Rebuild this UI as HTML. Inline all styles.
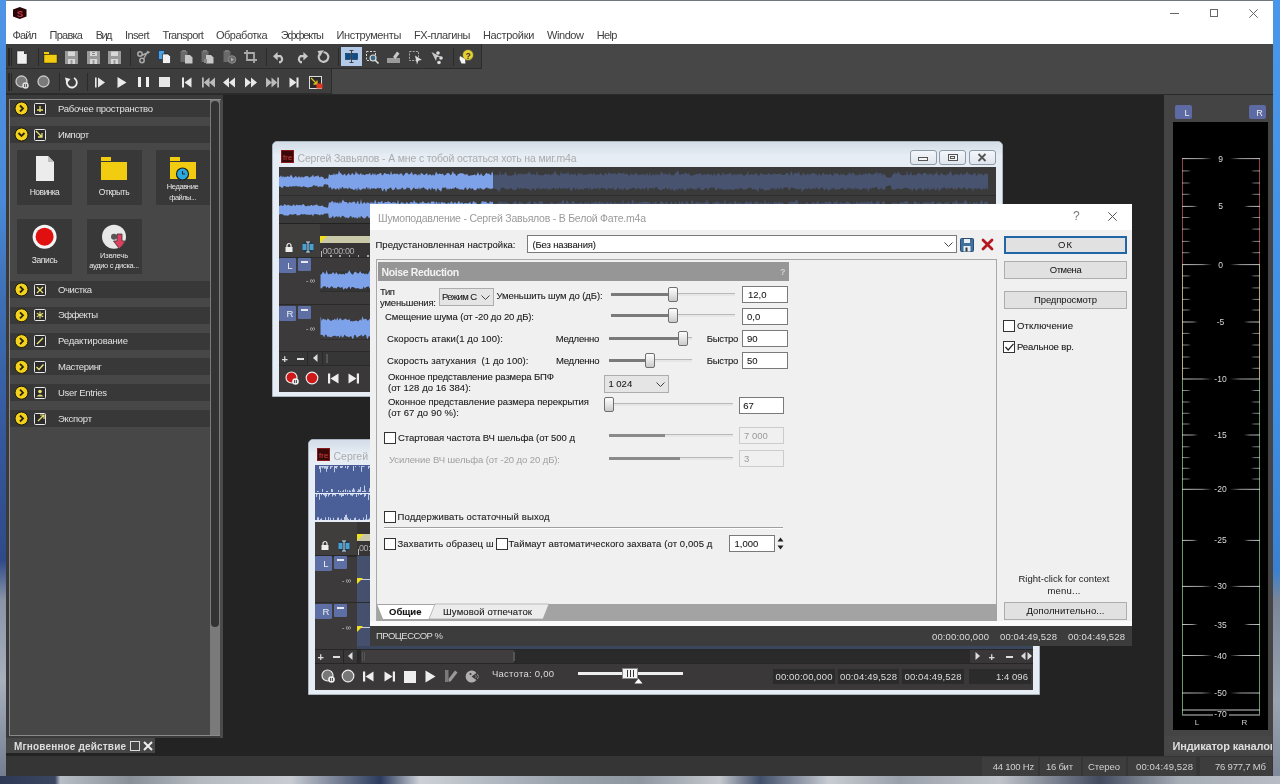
<!DOCTYPE html><html><head><meta charset="utf-8"><style>html,body{margin:0;padding:0;width:1280px;height:784px;overflow:hidden;position:relative;background:#3a86d8;}body div{position:absolute;box-sizing:border-box;}body{font-family:"Liberation Sans",sans-serif;}svg{position:absolute;overflow:visible;}</style></head><body><div style="left:0px;top:0px;width:1280px;height:784px;background:#4a8fe0;"></div>
<div style="left:0px;top:0px;width:6px;height:784px;background:linear-gradient(180deg,#4e94e6 0,#4a8ad8 200px,#3e6fb4 300px,#34569a 450px,#2f4a88 560px,#8a94a6 600px,#a8b0bc 680px,#707a8c 784px);"></div>
<div style="left:1273px;top:0px;width:7px;height:784px;background:linear-gradient(180deg,#4a96ea 0,#3f8ee3 400px,#3a80d0 570px,#7a8698 600px,#9aa3b0 700px,#7c8696 784px);"></div>
<div style="left:0px;top:776px;width:1280px;height:8px;background:linear-gradient(90deg,#2e3a55 0.0%,#3a4560 4.3%,#b8bec6 4.7%,#8a9098 10.2%,#b4b9c0 15.6%,#c8ccd2 22.7%,#2c3b5e 29.7%,#ccd0d6 32.8%,#9aa2ac 43.8%,#8e96a0 50.0%,#c4c8ce 56.2%,#43506c 59.4%,#c8ccd2 64.8%,#9aa0aa 70.3%,#c0c4ca 78.1%,#434c60 85.9%,#a8aeb6 92.2%,#b8bcc4 100.0%);"></div>
<div style="left:6px;top:0px;width:1267px;height:776px;background:#3a3a3a;"></div>
<div style="left:6px;top:0px;width:1267px;height:1px;background:#70777f;"></div>
<div style="left:6px;top:1px;width:1267px;height:43px;background:#ffffff;"></div>
<svg style="left:13px;top:7px" width="14" height="12" viewBox="0 0 14 12"><polygon points="6.8,0 13.5,2.6 13.5,9.4 6.8,12 0,9.4 0,2.6" fill="#2a0606"/><text x="6.9" y="9.6" font-size="9.5" font-weight="700" text-anchor="middle" fill="#c23a48" font-family="Liberation Sans">S</text></svg>
<div style="left:1170px;top:12.5px;width:9px;height:1px;background:#666;"></div>
<div style="left:1209.5px;top:8.5px;width:8.5px;height:8.5px;border:1px solid #666;"></div>
<svg style="left:1249px;top:8.5px" width="9" height="9"><path d="M0.3 0.3L8.7 8.7M8.7 0.3L0.3 8.7" stroke="#666" stroke-width="1"/></svg>
<div style="left:12.5px;top:27.799999999999997px;font-size:11px;line-height:14px;color:#404040;font-weight:400;white-space:pre;filter:grayscale(1);letter-spacing:-0.849px;">Файл</div>
<div style="left:49.5px;top:27.799999999999997px;font-size:11px;line-height:14px;color:#404040;font-weight:400;white-space:pre;filter:grayscale(1);letter-spacing:-0.734px;">Правка</div>
<div style="left:95.75px;top:27.799999999999997px;font-size:11px;line-height:14px;color:#404040;font-weight:400;white-space:pre;filter:grayscale(1);letter-spacing:-1.578px;">Вид</div>
<div style="left:125px;top:27.799999999999997px;font-size:11px;line-height:14px;color:#404040;font-weight:400;white-space:pre;filter:grayscale(1);letter-spacing:-0.603px;">Insert</div>
<div style="left:162.5px;top:27.799999999999997px;font-size:11px;line-height:14px;color:#404040;font-weight:400;white-space:pre;filter:grayscale(1);letter-spacing:-0.678px;">Transport</div>
<div style="left:216px;top:27.799999999999997px;font-size:11px;line-height:14px;color:#404040;font-weight:400;white-space:pre;filter:grayscale(1);letter-spacing:-0.498px;">Обработка</div>
<div style="left:280.7px;top:27.799999999999997px;font-size:11px;line-height:14px;color:#404040;font-weight:400;white-space:pre;filter:grayscale(1);letter-spacing:-1.119px;">Эффекты</div>
<div style="left:336.6px;top:27.799999999999997px;font-size:11px;line-height:14px;color:#404040;font-weight:400;white-space:pre;filter:grayscale(1);letter-spacing:-0.389px;">Инструменты</div>
<div style="left:414px;top:27.799999999999997px;font-size:11px;line-height:14px;color:#404040;font-weight:400;white-space:pre;filter:grayscale(1);letter-spacing:-0.429px;">FX-плагины</div>
<div style="left:482.9px;top:27.799999999999997px;font-size:11px;line-height:14px;color:#404040;font-weight:400;white-space:pre;filter:grayscale(1);letter-spacing:-0.317px;">Настройки</div>
<div style="left:547px;top:27.799999999999997px;font-size:11px;line-height:14px;color:#404040;font-weight:400;white-space:pre;filter:grayscale(1);letter-spacing:-0.425px;">Window</div>
<div style="left:596.8px;top:27.799999999999997px;font-size:11px;line-height:14px;color:#404040;font-weight:400;white-space:pre;filter:grayscale(1);letter-spacing:-0.708px;">Help</div>
<div style="left:6px;top:44px;width:1267px;height:51px;background:#474747;"></div>
<div style="left:6px;top:44px;width:476px;height:25px;background:#3d3d3d;border-bottom:1px solid #2c2c2c;border-right:1px solid #2c2c2c;"></div>
<div style="left:6px;top:69px;width:326px;height:25px;background:#3d3d3d;border-bottom:1px solid #2c2c2c;border-right:1px solid #2c2c2c;"></div>
<div style="left:6px;top:94px;width:1267px;height:1px;background:#2a2a2a;"></div>
<div style="left:6px;top:95px;width:217px;height:643px;background:#3a3a3a;"></div>
<div style="left:9px;top:99px;width:212px;height:637px;background:#474747;border:1px solid #8a8a8a;"></div>
<div style="left:210px;top:100px;width:10px;height:635px;background:#7a7a7a;"></div>
<div style="left:220px;top:100px;width:3px;height:638px;background:#4a4a4a;"></div>
<div style="left:211px;top:101px;width:8px;height:526px;background:#333;border-radius:4px;"></div>
<div style="left:223px;top:95px;width:941px;height:661px;background:#232323;"></div>
<div style="left:6px;top:738px;width:217px;height:18px;background:#232323;"></div>
<div style="left:1164px;top:95px;width:109px;height:662px;background:#444444;"></div>
<div style="left:1173px;top:122px;width:95px;height:608px;background:#000;"></div>
<div style="left:1175px;top:105px;width:17px;height:14px;background:#5d6aa3;border-radius:2px;"></div>
<div style="left:1249px;top:105px;width:17px;height:14px;background:#5d6aa3;border-radius:2px;"></div>
<div style="left:1187px;top:106.5px;font-size:9px;line-height:12px;color:#eee;font-weight:400;white-space:pre;filter:grayscale(1);width:17px;margin-left:-8.5px;text-align:center;">L</div>
<div style="left:1259.5px;top:106.5px;font-size:9px;line-height:12px;color:#eee;font-weight:400;white-space:pre;filter:grayscale(1);width:17px;margin-left:-8.5px;text-align:center;">R</div>
<div style="left:1165px;top:736px;width:107px;height:17px;background:#474747;"></div>
<div style="left:1172.5px;top:739.0px;font-size:11px;line-height:14px;color:#ddd;font-weight:700;white-space:pre;filter:grayscale(1);letter-spacing:-0.148px;overflow:hidden;width:99px;">Индикатор каналов</div>
<div style="left:6px;top:738px;width:149px;height:15px;background:#474747;"></div>
<div style="left:14px;top:739.5px;font-size:10px;line-height:13px;color:#ddd;font-weight:700;white-space:pre;filter:grayscale(1);letter-spacing:0.160px;">Мгновенное действие</div>
<div style="left:130px;top:741px;width:10px;height:10px;border:1.3px solid #ddd;"></div>
<svg style="left:143px;top:741px" width="10" height="10"><path d="M1 1L9 9M9 1L1 9" stroke="#eee" stroke-width="2"/></svg>
<div style="left:6px;top:756px;width:1267px;height:20px;background:#353535;"></div>
<div style="left:272px;top:141px;width:731px;height:256px;background:#e6edf4;border:1px solid #a9b4bf;border-radius:5px 5px 0 0;"></div>
<div style="left:273px;top:142px;width:729px;height:12px;background:linear-gradient(180deg,#d3dde8,#e3eaf2);border-radius:5px 5px 0 0;"></div>
<svg style="left:281px;top:150px" width="13" height="13" viewBox="0 0 13 13"><rect x="0.5" y="0.5" width="12" height="12" fill="#3a0808" stroke="#8a1a1a"/><text x="6.5" y="10" font-size="8" text-anchor="middle" fill="#c04040" font-family="Liberation Sans">fre</text></svg>
<div style="left:297.5px;top:150.5px;font-size:10.5px;line-height:14px;color:#a7acb3;font-weight:400;white-space:pre;filter:grayscale(1);letter-spacing:-0.153px;">Сергей Завьялов - А мне с тобой остаться хоть на миг.m4a</div>
<div style="left:279px;top:167px;width:717px;height:56px;background:#3a3a3a;"></div>
<div style="left:279px;top:223px;width:717px;height:169px;background:#3c3a3a;"></div>
<div style="left:909.5px;top:149.5px;width:27px;height:15px;background:linear-gradient(180deg,#f4f7fa,#dfe6ee);border:1px solid #8e9aa6;border-radius:3px;"></div>
<div style="left:939px;top:149.5px;width:27px;height:15px;background:linear-gradient(180deg,#f4f7fa,#dfe6ee);border:1px solid #8e9aa6;border-radius:3px;"></div>
<div style="left:968.5px;top:149.5px;width:27px;height:15px;background:linear-gradient(180deg,#f4f7fa,#dfe6ee);border:1px solid #8e9aa6;border-radius:3px;"></div>
<div style="left:918px;top:157px;width:10px;height:4px;border:1px solid #555;background:#f4f4f4;"></div>
<div style="left:947.5px;top:153.5px;width:10px;height:7px;border:1px solid #555;background:#f4f4f4;"></div>
<div style="left:950px;top:155.5px;width:5px;height:3px;border:1px solid #555;"></div>
<svg style="left:977px;top:152.5px" width="10" height="9"><path d="M1.5 1L8.5 8M8.5 1L1.5 8" stroke="#555" stroke-width="1.8"/></svg>
<svg style="left:0;top:0" width="1" height="1"><path d="M279.0 176.9L280.0 176.8L281.0 175.2L282.0 177.7L283.0 175.7L284.0 177.5L285.0 176.4L286.0 176.9L287.0 176.8L288.0 175.7L289.0 177.2L290.0 176.2L291.0 174.4L292.0 175.9L293.0 177.7L294.0 177.7L295.0 176.6L296.0 176.1L297.0 177.4L298.0 177.6L299.0 175.8L300.0 177.4L301.0 177.6L302.0 176.2L303.0 177.7L304.0 177.0L305.0 176.6L306.0 175.9L307.0 176.3L308.0 175.9L309.0 177.8L310.0 177.3L311.0 176.5L312.0 176.6L313.0 174.5L314.0 176.9L315.0 176.6L316.0 175.7L317.0 176.6L318.0 175.0L319.0 176.8L320.0 177.7L321.0 176.3L322.0 177.1L323.0 176.9L324.0 178.5L325.0 179.2L326.0 178.4L327.0 178.0L328.0 179.3L329.0 173.7L330.0 175.1L331.0 175.3L332.0 174.5L333.0 175.3L334.0 173.1L335.0 175.5L336.0 173.6L337.0 174.5L338.0 173.9L339.0 170.5L340.0 173.1L341.0 173.3L342.0 174.5L343.0 175.5L344.0 173.9L345.0 173.7L346.0 175.9L347.0 175.1L348.0 173.9L349.0 173.0L350.0 175.5L351.0 174.7L352.0 172.9L353.0 173.6L354.0 175.3L355.0 174.2L356.0 171.1L357.0 174.1L358.0 173.3L359.0 174.9L360.0 174.3L361.0 172.8L362.0 175.2L363.0 173.9L364.0 174.9L365.0 175.3L366.0 174.1L367.0 174.0L368.0 174.6L369.0 173.7L370.0 172.8L371.0 175.5L372.0 174.4L373.0 172.9L374.0 175.3L375.0 173.1L376.0 175.5L377.0 174.2L378.0 174.2L379.0 173.9L380.0 173.1L381.0 173.0L382.0 175.2L383.0 175.2L384.0 173.2L385.0 172.9L386.0 173.7L387.0 174.3L388.0 173.8L389.0 174.1L390.0 175.3L391.0 170.8L392.0 174.4L393.0 174.3L394.0 173.7L395.0 173.5L396.0 174.3L397.0 173.6L398.0 174.0L399.0 175.1L400.0 173.3L401.0 173.7L402.0 173.6L403.0 175.9L404.0 175.2L405.0 173.8L406.0 172.7L407.0 172.7L408.0 173.5L409.0 174.7L410.0 174.1L411.0 172.7L412.0 172.1L413.0 175.4L414.0 173.9L415.0 174.2L416.0 173.8L417.0 175.0L418.0 175.4L419.0 173.5L420.0 175.7L421.0 172.8L422.0 173.6L423.0 174.0L424.0 175.3L425.0 174.5L426.0 174.0L427.0 172.7L428.0 175.6L429.0 174.8L430.0 174.0L431.0 175.1L432.0 175.8L433.0 173.9L434.0 175.7L435.0 174.7L436.0 171.5L437.0 173.3L438.0 174.6L439.0 173.8L440.0 173.5L441.0 174.2L442.0 174.1L443.0 173.4L444.0 175.7L445.0 175.0L446.0 174.7L447.0 172.9L448.0 173.3L449.0 172.9L450.0 174.8L451.0 175.3L452.0 173.2L453.0 170.9L454.0 174.2L455.0 173.3L456.0 175.7L457.0 175.7L458.0 173.8L459.0 174.2L460.0 172.8L461.0 173.6L462.0 173.2L463.0 173.2L464.0 174.2L465.0 174.6L466.0 174.7L467.0 173.4L468.0 175.6L469.0 175.7L470.0 175.8L471.0 175.2L472.0 175.3L473.0 174.9L474.0 175.1L475.0 174.2L476.0 175.8L477.0 174.2L478.0 171.9L479.0 174.7L480.0 175.4L481.0 173.1L482.0 175.1L483.0 175.9L484.0 175.7L485.0 174.4L486.0 173.1L487.0 172.9L488.0 174.2L489.0 173.3L490.0 174.4L491.0 175.6L492.0 171.2L493.0 173.6L493.0 187.8L492.0 189.2L491.0 188.3L490.0 189.4L489.0 188.1L488.0 188.8L487.0 187.3L486.0 188.0L485.0 188.6L484.0 189.5L483.0 189.7L482.0 188.8L481.0 188.7L480.0 187.6L479.0 189.7L478.0 187.8L477.0 188.7L476.0 190.2L475.0 190.2L474.0 190.0L473.0 188.8L472.0 188.0L471.0 189.4L470.0 187.4L469.0 188.6L468.0 189.2L467.0 190.2L466.0 187.6L465.0 187.5L464.0 189.4L463.0 190.0L462.0 189.2L461.0 189.4L460.0 189.3L459.0 189.6L458.0 187.9L457.0 189.1L456.0 187.3L455.0 187.3L454.0 188.9L453.0 188.0L452.0 188.9L451.0 188.9L450.0 188.2L449.0 190.0L448.0 188.0L447.0 190.1L446.0 187.4L445.0 187.5L444.0 188.0L443.0 187.3L442.0 188.6L441.0 192.0L440.0 190.1L439.0 190.3L438.0 187.9L437.0 189.1L436.0 191.9L435.0 188.6L434.0 189.3L433.0 188.9L432.0 187.2L431.0 190.3L430.0 189.1L429.0 187.9L428.0 190.0L427.0 190.2L426.0 188.4L425.0 189.2L424.0 187.2L423.0 187.4L422.0 188.6L421.0 187.8L420.0 190.0L419.0 187.2L418.0 189.5L417.0 188.5L416.0 188.9L415.0 189.0L414.0 187.2L413.0 188.6L412.0 189.5L411.0 191.1L410.0 188.7L409.0 187.4L408.0 188.4L407.0 187.1L406.0 189.2L405.0 188.9L404.0 190.1L403.0 188.2L402.0 187.3L401.0 189.6L400.0 188.4L399.0 190.0L398.0 188.7L397.0 189.9L396.0 187.1L395.0 188.4L394.0 189.8L393.0 190.2L392.0 189.6L391.0 187.4L390.0 187.7L389.0 188.7L388.0 188.7L387.0 189.5L386.0 192.2L385.0 189.3L384.0 188.4L383.0 191.4L382.0 190.3L381.0 188.1L380.0 187.8L379.0 188.8L378.0 187.6L377.0 188.5L376.0 188.7L375.0 189.1L374.0 187.8L373.0 189.0L372.0 188.1L371.0 188.5L370.0 190.1L369.0 187.3L368.0 189.7L367.0 187.1L366.0 187.7L365.0 189.8L364.0 188.3L363.0 188.8L362.0 188.8L361.0 190.5L360.0 189.4L359.0 189.6L358.0 187.3L357.0 191.6L356.0 188.2L355.0 189.6L354.0 190.0L353.0 189.7L352.0 188.6L351.0 188.9L350.0 188.5L349.0 187.3L348.0 189.5L347.0 188.2L346.0 188.6L345.0 187.7L344.0 189.2L343.0 187.2L342.0 187.1L341.0 189.6L340.0 187.2L339.0 190.3L338.0 188.7L337.0 188.0L336.0 190.2L335.0 188.7L334.0 188.3L333.0 188.5L332.0 190.0L331.0 187.6L330.0 187.1L329.0 188.7L328.0 184.5L327.0 184.8L326.0 184.2L325.0 184.5L324.0 184.2L323.0 186.9L322.0 186.6L321.0 186.7L320.0 186.3L319.0 186.7L318.0 187.2L317.0 185.2L316.0 186.6L315.0 185.4L314.0 185.3L313.0 185.6L312.0 187.0L311.0 186.7L310.0 186.9L309.0 187.2L308.0 187.7L307.0 187.2L306.0 186.9L305.0 187.0L304.0 186.1L303.0 186.4L302.0 187.0L301.0 187.3L300.0 186.0L299.0 186.9L298.0 186.1L297.0 186.7L296.0 185.5L295.0 186.7L294.0 185.9L293.0 186.5L292.0 186.2L291.0 187.0L290.0 186.0L289.0 186.7L288.0 187.3L287.0 186.6L286.0 187.0L285.0 185.7L284.0 186.1L283.0 187.2L282.0 188.2L281.0 186.9L280.0 186.4L279.0 186.4Z" fill="#7ea2ea"/><path d="M279.0 205.8L280.0 205.9L281.0 204.8L282.0 205.7L283.0 206.3L284.0 204.6L285.0 204.3L286.0 205.3L287.0 205.6L288.0 204.6L289.0 205.2L290.0 205.4L291.0 205.8L292.0 206.1L293.0 204.9L294.0 204.3L295.0 206.3L296.0 205.0L297.0 204.4L298.0 205.5L299.0 205.0L300.0 205.1L301.0 205.6L302.0 205.1L303.0 203.9L304.0 204.5L305.0 206.1L306.0 206.2L307.0 206.3L308.0 205.2L309.0 206.3L310.0 205.8L311.0 205.1L312.0 204.9L313.0 206.2L314.0 204.7L315.0 205.6L316.0 204.5L317.0 204.6L318.0 205.6L319.0 206.3L320.0 205.7L321.0 206.3L322.0 205.3L323.0 205.9L324.0 207.1L325.0 207.0L326.0 207.6L327.0 207.4L328.0 207.7L329.0 202.1L330.0 203.1L331.0 201.9L332.0 201.2L333.0 201.2L334.0 203.4L335.0 201.6L336.0 202.9L337.0 202.7L338.0 202.3L339.0 203.9L340.0 201.5L341.0 203.7L342.0 201.3L343.0 199.6L344.0 201.4L345.0 202.1L346.0 202.0L347.0 202.2L348.0 204.1L349.0 201.7L350.0 202.5L351.0 202.5L352.0 202.8L353.0 201.8L354.0 201.4L355.0 202.2L356.0 204.2L357.0 201.9L358.0 200.7L359.0 204.0L360.0 203.8L361.0 199.1L362.0 204.2L363.0 203.0L364.0 202.6L365.0 202.2L366.0 204.3L367.0 201.9L368.0 203.1L369.0 202.6L370.0 204.1L371.0 201.3L372.0 203.4L373.0 202.1L374.0 203.7L375.0 199.4L376.0 201.8L377.0 204.4L378.0 201.5L379.0 202.0L380.0 202.4L381.0 201.9L382.0 200.5L383.0 203.3L384.0 203.1L385.0 201.9L386.0 202.1L387.0 202.6L388.0 201.0L389.0 202.0L390.0 201.9L391.0 203.1L392.0 203.1L393.0 202.1L394.0 202.5L395.0 202.5L396.0 202.8L397.0 203.7L398.0 199.5L399.0 203.8L400.0 204.0L401.0 202.6L402.0 202.3L403.0 202.9L404.0 202.7L405.0 204.4L406.0 202.2L407.0 202.4L408.0 202.7L409.0 204.2L410.0 202.4L411.0 202.0L412.0 202.2L413.0 202.9L414.0 199.8L415.0 202.5L416.0 202.2L417.0 203.0L418.0 203.3L419.0 203.9L420.0 202.1L421.0 203.3L422.0 201.9L423.0 201.3L424.0 202.5L425.0 203.1L426.0 203.2L427.0 202.9L428.0 202.4L429.0 202.2L430.0 203.9L431.0 202.0L432.0 201.3L433.0 201.9L434.0 201.0L435.0 204.3L436.0 201.7L437.0 202.0L438.0 204.2L439.0 201.6L440.0 204.2L441.0 202.6L442.0 201.7L443.0 203.1L444.0 202.2L445.0 203.1L446.0 203.5L447.0 204.0L448.0 202.4L449.0 203.1L450.0 203.8L451.0 201.6L452.0 201.7L453.0 203.8L454.0 203.0L455.0 201.7L456.0 203.3L457.0 203.4L458.0 202.3L459.0 200.7L460.0 202.9L461.0 203.6L462.0 201.8L463.0 203.8L464.0 203.4L465.0 203.1L466.0 203.0L467.0 203.6L468.0 202.9L469.0 203.3L470.0 201.6L471.0 203.6L472.0 204.2L473.0 201.6L474.0 201.3L475.0 202.9L476.0 202.0L477.0 204.2L478.0 203.7L479.0 204.4L480.0 204.1L481.0 203.5L482.0 201.2L483.0 201.6L484.0 201.5L485.0 202.2L486.0 201.3L487.0 203.3L488.0 202.7L489.0 203.8L490.0 201.1L491.0 202.2L492.0 202.3L493.0 201.4L493.0 215.6L492.0 217.9L491.0 219.7L490.0 216.4L489.0 218.6L488.0 216.1L487.0 216.2L486.0 216.5L485.0 218.3L484.0 219.1L483.0 218.5L482.0 217.8L481.0 216.5L480.0 218.5L479.0 218.8L478.0 218.1L477.0 216.9L476.0 216.6L475.0 217.2L474.0 218.5L473.0 218.0L472.0 216.2L471.0 216.1L470.0 217.3L469.0 218.1L468.0 218.4L467.0 218.5L466.0 216.5L465.0 217.6L464.0 219.2L463.0 218.0L462.0 215.6L461.0 217.7L460.0 218.4L459.0 215.6L458.0 218.6L457.0 215.8L456.0 218.4L455.0 218.7L454.0 216.8L453.0 217.4L452.0 216.8L451.0 215.9L450.0 218.5L449.0 219.1L448.0 217.6L447.0 218.3L446.0 219.8L445.0 216.8L444.0 218.7L443.0 216.2L442.0 216.1L441.0 218.5L440.0 216.9L439.0 217.0L438.0 219.9L437.0 216.2L436.0 220.4L435.0 216.3L434.0 216.2L433.0 217.8L432.0 215.7L431.0 217.0L430.0 216.6L429.0 217.0L428.0 216.2L427.0 219.7L426.0 215.7L425.0 216.2L424.0 217.8L423.0 217.6L422.0 218.4L421.0 218.0L420.0 217.1L419.0 217.4L418.0 217.6L417.0 217.2L416.0 216.4L415.0 216.9L414.0 217.5L413.0 216.3L412.0 218.2L411.0 215.9L410.0 216.4L409.0 217.9L408.0 218.1L407.0 216.1L406.0 218.8L405.0 217.6L404.0 217.7L403.0 217.4L402.0 217.2L401.0 216.5L400.0 220.2L399.0 217.9L398.0 217.1L397.0 215.9L396.0 215.7L395.0 217.0L394.0 218.7L393.0 217.6L392.0 215.7L391.0 218.2L390.0 218.7L389.0 217.1L388.0 218.5L387.0 216.2L386.0 218.0L385.0 217.0L384.0 218.3L383.0 217.0L382.0 216.8L381.0 217.2L380.0 218.6L379.0 215.9L378.0 215.6L377.0 217.3L376.0 217.0L375.0 215.8L374.0 218.3L373.0 217.4L372.0 217.4L371.0 216.4L370.0 217.7L369.0 218.5L368.0 216.4L367.0 216.1L366.0 217.6L365.0 218.2L364.0 218.4L363.0 217.8L362.0 216.8L361.0 215.8L360.0 218.6L359.0 216.6L358.0 218.0L357.0 218.8L356.0 217.1L355.0 218.5L354.0 217.0L353.0 217.2L352.0 218.1L351.0 215.7L350.0 216.4L349.0 217.8L348.0 218.5L347.0 217.0L346.0 218.3L345.0 217.3L344.0 216.4L343.0 216.1L342.0 215.6L341.0 218.0L340.0 217.2L339.0 215.9L338.0 217.4L337.0 216.2L336.0 216.4L335.0 216.9L334.0 218.6L333.0 215.6L332.0 217.1L331.0 218.0L330.0 217.6L329.0 218.4L328.0 212.8L327.0 214.3L326.0 212.9L325.0 214.1L324.0 213.4L323.0 215.2L322.0 214.5L321.0 214.2L320.0 215.6L319.0 214.8L318.0 214.6L317.0 214.5L316.0 213.9L315.0 214.3L314.0 214.1L313.0 216.6L312.0 214.4L311.0 214.4L310.0 215.1L309.0 214.7L308.0 214.7L307.0 214.4L306.0 214.7L305.0 214.3L304.0 213.9L303.0 214.8L302.0 214.1L301.0 214.3L300.0 214.9L299.0 215.2L298.0 215.2L297.0 215.4L296.0 214.0L295.0 214.0L294.0 214.5L293.0 214.4L292.0 214.7L291.0 214.6L290.0 214.0L289.0 215.3L288.0 215.4L287.0 215.7L286.0 215.3L285.0 215.4L284.0 215.4L283.0 214.2L282.0 214.6L281.0 213.9L280.0 214.1L279.0 215.1Z" fill="#7ea2ea"/><path d="M493.0 174.4L494.0 175.9L495.0 173.7L496.0 175.5L497.0 174.3L498.0 174.8L499.0 175.8L500.0 170.5L501.0 175.5L502.0 173.7L503.0 174.6L504.0 174.7L505.0 172.7L506.0 171.7L507.0 174.8L508.0 175.9L509.0 175.2L510.0 175.6L511.0 175.8L512.0 175.8L513.0 174.4L514.0 175.4L515.0 171.5L516.0 173.4L517.0 175.8L518.0 174.3L519.0 173.2L520.0 174.4L521.0 173.0L522.0 175.0L523.0 173.6L524.0 173.7L525.0 174.6L526.0 174.1L527.0 173.5L528.0 173.4L529.0 171.5L530.0 173.0L531.0 174.2L532.0 174.8L533.0 174.2L534.0 173.7L535.0 174.9L536.0 174.9L537.0 170.7L538.0 174.5L539.0 175.2L540.0 174.8L541.0 175.2L542.0 175.4L543.0 175.1L544.0 175.2L545.0 173.7L546.0 173.7L547.0 174.3L548.0 175.2L549.0 173.3L550.0 174.7L551.0 175.5L552.0 173.4L553.0 174.6L554.0 173.3L555.0 170.6L556.0 173.1L557.0 174.9L558.0 173.7L559.0 175.9L560.0 175.0L561.0 171.0L562.0 174.2L563.0 173.3L564.0 173.9L565.0 173.6L566.0 173.1L567.0 174.6L568.0 171.1L569.0 174.2L570.0 175.6L571.0 172.8L572.0 175.2L573.0 173.5L574.0 175.2L575.0 172.7L576.0 175.0L577.0 175.9L578.0 173.2L579.0 173.1L580.0 173.9L581.0 174.7L582.0 172.8L583.0 175.6L584.0 174.2L585.0 174.9L586.0 174.3L587.0 175.3L588.0 172.9L589.0 174.6L590.0 173.7L591.0 172.7L592.0 175.0L593.0 173.9L594.0 172.8L595.0 174.4L596.0 175.2L597.0 173.8L598.0 174.9L599.0 174.7L600.0 173.2L601.0 172.9L602.0 174.9L603.0 174.7L604.0 175.5L605.0 172.9L606.0 173.0L607.0 175.1L608.0 173.9L609.0 171.9L610.0 173.1L611.0 174.2L612.0 174.1L613.0 173.0L614.0 173.9L615.0 173.3L616.0 173.7L617.0 175.0L618.0 172.7L619.0 172.8L620.0 173.1L621.0 173.8L622.0 173.5L623.0 173.5L624.0 172.0L625.0 174.6L626.0 174.2L627.0 173.1L628.0 174.9L629.0 175.3L630.0 175.4L631.0 172.7L632.0 174.9L633.0 173.8L634.0 175.7L635.0 172.9L636.0 173.4L637.0 173.7L638.0 174.5L639.0 175.4L640.0 173.7L641.0 175.3L642.0 173.8L643.0 174.9L644.0 173.6L645.0 175.7L646.0 174.1L647.0 173.0L648.0 175.1L649.0 175.4L650.0 171.8L651.0 175.5L652.0 175.4L653.0 173.5L654.0 174.5L655.0 175.7L656.0 172.9L657.0 175.5L658.0 173.5L659.0 175.4L660.0 174.5L661.0 170.8L662.0 173.7L663.0 172.6L664.0 175.2L665.0 172.9L666.0 173.7L667.0 174.5L668.0 174.9L669.0 173.1L670.0 173.6L671.0 175.5L672.0 174.4L673.0 175.6L674.0 175.5L675.0 173.3L676.0 172.7L677.0 171.3L678.0 170.6L679.0 173.5L680.0 175.4L681.0 173.9L682.0 174.4L683.0 173.6L684.0 174.6L685.0 172.7L686.0 173.0L687.0 173.8L688.0 174.2L689.0 172.9L690.0 175.2L691.0 175.7L692.0 175.4L693.0 175.2L694.0 175.4L695.0 174.3L696.0 174.5L697.0 173.4L698.0 174.5L699.0 173.7L700.0 173.1L701.0 173.8L702.0 175.5L703.0 174.5L704.0 174.3L705.0 173.9L706.0 175.3L707.0 174.3L708.0 173.4L709.0 174.1L710.0 175.6L711.0 173.8L712.0 174.4L713.0 175.9L714.0 173.3L715.0 174.3L716.0 175.9L717.0 174.0L718.0 173.5L719.0 173.2L720.0 174.7L721.0 175.6L722.0 174.6L723.0 171.4L724.0 175.5L725.0 173.6L726.0 175.2L727.0 174.0L728.0 174.0L729.0 173.7L730.0 173.0L731.0 173.2L732.0 175.0L733.0 175.5L734.0 173.5L735.0 174.1L736.0 175.6L737.0 173.5L738.0 175.0L739.0 173.6L740.0 174.4L741.0 173.9L742.0 173.8L743.0 175.5L744.0 175.4L745.0 175.7L746.0 173.6L747.0 175.2L748.0 170.6L749.0 174.7L750.0 175.2L751.0 174.1L752.0 174.2L753.0 174.6L754.0 175.2L755.0 173.1L756.0 174.1L757.0 173.5L758.0 175.8L759.0 175.7L760.0 173.8L761.0 173.3L762.0 173.4L763.0 174.6L764.0 174.3L765.0 174.8L766.0 174.4L767.0 174.7L768.0 173.9L769.0 172.7L770.0 174.8L771.0 174.1L772.0 174.2L773.0 174.9L774.0 172.7L775.0 174.0L776.0 174.3L777.0 173.9L778.0 174.1L779.0 174.3L780.0 173.6L781.0 173.9L782.0 174.8L783.0 175.0L784.0 175.0L785.0 174.8L786.0 173.1L787.0 173.3L788.0 172.7L789.0 175.7L790.0 174.5L791.0 171.5L792.0 172.1L793.0 175.8L794.0 173.4L795.0 173.2L796.0 172.8L797.0 173.8L798.0 173.0L799.0 171.6L800.0 175.6L801.0 174.9L802.0 175.2L803.0 172.9L804.0 173.1L805.0 175.5L806.0 174.5L807.0 174.4L808.0 172.7L809.0 175.6L810.0 173.9L811.0 174.3L812.0 173.3L813.0 172.8L814.0 173.2L815.0 174.6L816.0 172.8L817.0 175.5L818.0 175.5L819.0 173.2L820.0 174.3L821.0 175.9L822.0 174.3L823.0 173.3L824.0 172.5L825.0 175.2L826.0 174.3L827.0 173.8L828.0 175.1L829.0 174.7L830.0 173.3L831.0 174.4L832.0 175.3L833.0 175.9L834.0 173.4L835.0 172.7L836.0 174.5L837.0 173.1L838.0 173.6L839.0 174.9L840.0 175.7L841.0 173.0L842.0 175.6L843.0 173.5L844.0 174.2L845.0 175.8L846.0 175.2L847.0 174.7L848.0 174.4L849.0 172.9L850.0 172.3L851.0 175.1L852.0 173.4L853.0 172.7L854.0 173.0L855.0 175.8L856.0 173.7L857.0 175.9L858.0 174.6L859.0 175.3L860.0 172.9L861.0 175.3L862.0 175.3L863.0 173.2L864.0 175.2L865.0 173.3L866.0 172.9L867.0 175.1L868.0 173.6L869.0 173.3L870.0 172.9L871.0 175.1L872.0 174.1L873.0 174.9L874.0 173.9L875.0 172.8L876.0 173.7L877.0 170.8L878.0 174.8L879.0 173.2L880.0 173.1L881.0 173.1L882.0 175.9L883.0 172.9L884.0 174.7L885.0 174.8L886.0 176.4L887.0 177.5L888.0 177.2L889.0 178.0L890.0 177.2L891.0 177.8L892.0 175.4L893.0 174.2L894.0 173.8L895.0 172.0L896.0 174.6L897.0 173.2L898.0 171.2L899.0 173.6L900.0 173.2L901.0 175.5L902.0 174.7L903.0 175.2L904.0 175.6L905.0 174.6L906.0 175.5L907.0 170.6L908.0 175.2L909.0 174.7L910.0 174.7L911.0 171.2L912.0 174.9L913.0 175.6L914.0 174.9L915.0 174.3L916.0 175.7L917.0 174.2L918.0 172.8L919.0 173.0L920.0 174.3L921.0 173.6L922.0 175.7L923.0 173.2L924.0 173.0L925.0 172.8L926.0 173.6L927.0 174.0L928.0 175.6L929.0 173.7L930.0 172.9L931.0 175.0L932.0 173.0L933.0 175.8L934.0 174.7L935.0 173.1L936.0 173.9L937.0 170.5L938.0 175.5L939.0 174.6L940.0 175.8L941.0 172.8L942.0 173.6L943.0 174.8L944.0 174.4L945.0 175.0L946.0 175.9L947.0 173.3L948.0 174.9L949.0 172.9L950.0 172.0L951.0 170.7L952.0 175.3L953.0 175.2L954.0 175.4L955.0 173.4L956.0 174.4L957.0 174.3L958.0 174.1L959.0 175.4L960.0 174.4L961.0 173.0L962.0 174.0L963.0 175.7L964.0 173.2L965.0 174.5L966.0 173.4L967.0 171.4L968.0 173.2L969.0 174.6L970.0 173.7L971.0 174.6L972.0 175.4L973.0 174.3L974.0 173.2L975.0 172.7L976.0 175.7L977.0 175.5L978.0 173.3L979.0 173.6L980.0 174.8L981.0 173.2L982.0 173.9L983.0 175.6L984.0 175.0L985.0 173.6L986.0 173.8L987.0 173.2L988.0 174.7L988.0 188.3L987.0 189.9L986.0 187.3L985.0 189.4L984.0 189.1L983.0 188.3L982.0 190.0L981.0 190.0L980.0 187.9L979.0 188.8L978.0 188.2L977.0 189.5L976.0 188.2L975.0 188.8L974.0 188.0L973.0 192.0L972.0 187.9L971.0 189.6L970.0 187.9L969.0 187.4L968.0 189.6L967.0 189.2L966.0 189.8L965.0 187.8L964.0 187.3L963.0 188.0L962.0 189.4L961.0 188.9L960.0 187.9L959.0 187.9L958.0 187.3L957.0 189.8L956.0 189.5L955.0 187.8L954.0 190.0L953.0 189.2L952.0 187.2L951.0 188.2L950.0 187.9L949.0 189.6L948.0 187.1L947.0 189.6L946.0 189.3L945.0 187.6L944.0 187.5L943.0 188.3L942.0 187.7L941.0 190.4L940.0 188.7L939.0 192.3L938.0 187.2L937.0 188.9L936.0 190.3L935.0 190.2L934.0 187.6L933.0 189.6L932.0 189.2L931.0 188.5L930.0 190.2L929.0 189.9L928.0 187.4L927.0 189.2L926.0 189.7L925.0 188.1L924.0 189.6L923.0 190.9L922.0 190.1L921.0 187.7L920.0 188.7L919.0 188.5L918.0 188.6L917.0 191.6L916.0 189.8L915.0 189.8L914.0 187.5L913.0 189.7L912.0 191.9L911.0 187.9L910.0 189.9L909.0 188.9L908.0 187.9L907.0 188.5L906.0 187.7L905.0 187.6L904.0 188.7L903.0 187.9L902.0 189.5L901.0 188.9L900.0 189.2L899.0 189.0L898.0 188.3L897.0 188.9L896.0 189.1L895.0 189.7L894.0 189.4L893.0 189.5L892.0 189.9L891.0 186.3L890.0 184.9L889.0 185.5L888.0 186.2L887.0 185.9L886.0 186.2L885.0 189.8L884.0 189.5L883.0 190.2L882.0 188.2L881.0 187.8L880.0 189.9L879.0 189.3L878.0 189.3L877.0 187.2L876.0 187.3L875.0 187.1L874.0 188.7L873.0 187.2L872.0 188.4L871.0 188.4L870.0 188.3L869.0 189.6L868.0 192.0L867.0 188.0L866.0 188.4L865.0 189.7L864.0 187.3L863.0 189.0L862.0 188.9L861.0 189.4L860.0 190.3L859.0 189.3L858.0 188.2L857.0 188.6L856.0 189.4L855.0 187.3L854.0 189.7L853.0 189.2L852.0 188.3L851.0 189.6L850.0 187.5L849.0 188.9L848.0 187.1L847.0 190.0L846.0 189.1L845.0 189.8L844.0 189.5L843.0 187.5L842.0 188.0L841.0 187.9L840.0 189.3L839.0 189.5L838.0 188.7L837.0 189.7L836.0 189.5L835.0 189.6L834.0 188.4L833.0 187.3L832.0 190.1L831.0 188.5L830.0 189.4L829.0 191.6L828.0 189.5L827.0 189.3L826.0 188.2L825.0 189.8L824.0 190.3L823.0 187.9L822.0 187.4L821.0 187.6L820.0 189.2L819.0 189.5L818.0 189.1L817.0 187.5L816.0 187.6L815.0 189.5L814.0 188.1L813.0 189.1L812.0 188.2L811.0 189.8L810.0 188.9L809.0 187.4L808.0 189.3L807.0 189.3L806.0 187.9L805.0 189.0L804.0 189.8L803.0 190.1L802.0 192.4L801.0 188.7L800.0 188.7L799.0 189.6L798.0 189.3L797.0 189.3L796.0 188.9L795.0 188.6L794.0 187.9L793.0 188.1L792.0 187.4L791.0 187.6L790.0 189.8L789.0 190.0L788.0 188.1L787.0 187.3L786.0 187.3L785.0 187.9L784.0 187.3L783.0 189.2L782.0 189.8L781.0 187.1L780.0 188.8L779.0 189.8L778.0 187.6L777.0 189.7L776.0 187.9L775.0 191.1L774.0 187.1L773.0 189.6L772.0 187.8L771.0 188.5L770.0 190.0L769.0 190.0L768.0 189.7L767.0 190.3L766.0 190.1L765.0 191.1L764.0 189.7L763.0 188.9L762.0 188.5L761.0 190.0L760.0 187.4L759.0 188.7L758.0 192.1L757.0 190.0L756.0 189.6L755.0 189.4L754.0 188.9L753.0 189.1L752.0 190.0L751.0 187.6L750.0 187.4L749.0 188.0L748.0 187.9L747.0 188.9L746.0 189.6L745.0 188.9L744.0 190.2L743.0 189.2L742.0 188.5L741.0 188.8L740.0 188.1L739.0 188.4L738.0 189.7L737.0 189.0L736.0 188.6L735.0 189.5L734.0 189.2L733.0 189.9L732.0 189.9L731.0 189.0L730.0 189.4L729.0 189.2L728.0 190.2L727.0 188.9L726.0 189.6L725.0 190.3L724.0 189.8L723.0 189.3L722.0 190.0L721.0 188.5L720.0 188.9L719.0 189.1L718.0 187.6L717.0 190.4L716.0 190.2L715.0 189.2L714.0 187.3L713.0 187.8L712.0 187.4L711.0 187.2L710.0 188.3L709.0 188.5L708.0 191.0L707.0 188.5L706.0 187.9L705.0 188.0L704.0 190.2L703.0 189.7L702.0 190.0L701.0 190.0L700.0 188.8L699.0 187.1L698.0 189.1L697.0 187.9L696.0 190.1L695.0 189.3L694.0 189.3L693.0 189.0L692.0 188.9L691.0 187.5L690.0 188.6L689.0 189.6L688.0 188.4L687.0 188.6L686.0 190.2L685.0 191.2L684.0 188.7L683.0 190.2L682.0 187.2L681.0 190.3L680.0 188.7L679.0 188.2L678.0 191.0L677.0 188.8L676.0 189.3L675.0 191.5L674.0 190.1L673.0 190.2L672.0 188.2L671.0 191.0L670.0 189.1L669.0 188.1L668.0 189.7L667.0 189.3L666.0 187.4L665.0 188.3L664.0 190.1L663.0 188.5L662.0 190.0L661.0 190.3L660.0 190.3L659.0 189.0L658.0 189.4L657.0 187.3L656.0 187.1L655.0 187.6L654.0 190.1L653.0 187.5L652.0 188.7L651.0 187.7L650.0 188.4L649.0 187.9L648.0 192.0L647.0 187.5L646.0 187.5L645.0 190.1L644.0 188.6L643.0 189.0L642.0 187.5L641.0 190.2L640.0 188.7L639.0 189.1L638.0 187.6L637.0 189.0L636.0 189.4L635.0 188.7L634.0 187.4L633.0 188.6L632.0 187.2L631.0 189.6L630.0 188.5L629.0 188.9L628.0 190.1L627.0 189.7L626.0 190.3L625.0 188.1L624.0 188.2L623.0 190.2L622.0 189.8L621.0 188.0L620.0 190.3L619.0 188.8L618.0 187.5L617.0 188.8L616.0 189.9L615.0 189.5L614.0 190.3L613.0 187.1L612.0 188.8L611.0 188.9L610.0 188.4L609.0 188.5L608.0 187.7L607.0 190.6L606.0 189.6L605.0 188.8L604.0 187.8L603.0 188.7L602.0 187.6L601.0 188.6L600.0 188.4L599.0 190.2L598.0 187.1L597.0 189.1L596.0 188.8L595.0 188.2L594.0 188.6L593.0 189.1L592.0 189.8L591.0 189.3L590.0 187.4L589.0 190.6L588.0 188.0L587.0 188.1L586.0 188.6L585.0 188.2L584.0 189.0L583.0 189.5L582.0 189.5L581.0 189.1L580.0 188.8L579.0 190.3L578.0 189.5L577.0 187.8L576.0 190.1L575.0 189.6L574.0 187.3L573.0 188.4L572.0 190.1L571.0 191.5L570.0 189.3L569.0 187.2L568.0 189.0L567.0 188.4L566.0 189.3L565.0 188.0L564.0 188.3L563.0 188.7L562.0 188.5L561.0 189.0L560.0 187.7L559.0 187.6L558.0 189.9L557.0 187.5L556.0 189.7L555.0 188.8L554.0 187.6L553.0 188.3L552.0 188.4L551.0 189.2L550.0 189.9L549.0 188.0L548.0 190.7L547.0 188.2L546.0 188.2L545.0 189.2L544.0 188.8L543.0 188.6L542.0 188.6L541.0 190.1L540.0 188.0L539.0 189.8L538.0 187.6L537.0 188.2L536.0 189.3L535.0 191.2L534.0 188.3L533.0 189.1L532.0 188.1L531.0 191.7L530.0 189.7L529.0 188.9L528.0 189.0L527.0 188.4L526.0 189.1L525.0 187.8L524.0 189.3L523.0 187.8L522.0 190.1L521.0 187.6L520.0 189.1L519.0 189.1L518.0 187.1L517.0 189.1L516.0 189.8L515.0 190.0L514.0 190.1L513.0 190.2L512.0 188.6L511.0 188.0L510.0 188.9L509.0 188.5L508.0 189.7L507.0 188.7L506.0 189.3L505.0 189.2L504.0 187.1L503.0 188.4L502.0 187.2L501.0 188.1L500.0 190.2L499.0 192.2L498.0 190.1L497.0 189.7L496.0 188.5L495.0 189.0L494.0 188.3L493.0 189.2Z" fill="#485370"/><path d="M493.0 204.1L494.0 203.6L495.0 203.5L496.0 204.1L497.0 203.6L498.0 202.6L499.0 202.6L500.0 201.2L501.0 202.5L502.0 202.5L503.0 201.6L504.0 203.7L505.0 201.8L506.0 202.0L507.0 202.9L508.0 202.9L509.0 202.9L510.0 204.2L511.0 204.4L512.0 203.3L513.0 203.5L514.0 202.0L515.0 201.2L516.0 201.6L517.0 203.8L518.0 203.6L519.0 202.0L520.0 201.4L521.0 203.2L522.0 201.9L523.0 203.6L524.0 203.6L525.0 204.0L526.0 203.2L527.0 203.1L528.0 202.1L529.0 202.3L530.0 200.4L531.0 203.6L532.0 204.2L533.0 204.1L534.0 201.6L535.0 201.8L536.0 202.5L537.0 202.8L538.0 203.6L539.0 201.2L540.0 201.5L541.0 201.6L542.0 201.3L543.0 202.7L544.0 204.2L545.0 203.1L546.0 203.8L547.0 203.2L548.0 203.7L549.0 204.2L550.0 202.2L551.0 203.1L552.0 202.1L553.0 203.2L554.0 203.3L555.0 203.9L556.0 203.5L557.0 202.7L558.0 203.2L559.0 203.0L560.0 202.5L561.0 202.9L562.0 201.6L563.0 199.0L564.0 201.5L565.0 204.1L566.0 202.5L567.0 199.9L568.0 201.8L569.0 202.7L570.0 204.0L571.0 202.7L572.0 202.1L573.0 201.1L574.0 201.3L575.0 203.6L576.0 202.4L577.0 204.2L578.0 202.8L579.0 203.1L580.0 203.3L581.0 202.1L582.0 202.7L583.0 203.5L584.0 203.7L585.0 202.0L586.0 202.3L587.0 203.7L588.0 201.8L589.0 202.8L590.0 204.3L591.0 202.3L592.0 202.8L593.0 202.4L594.0 203.1L595.0 201.8L596.0 201.3L597.0 203.2L598.0 202.1L599.0 201.9L600.0 201.3L601.0 203.3L602.0 201.5L603.0 203.5L604.0 201.4L605.0 204.3L606.0 202.5L607.0 201.8L608.0 202.8L609.0 202.7L610.0 203.1L611.0 201.8L612.0 202.7L613.0 204.1L614.0 202.4L615.0 202.1L616.0 203.6L617.0 203.1L618.0 202.8L619.0 202.9L620.0 203.9L621.0 201.4L622.0 204.5L623.0 199.0L624.0 204.2L625.0 202.5L626.0 203.1L627.0 203.2L628.0 202.1L629.0 201.5L630.0 203.6L631.0 204.1L632.0 201.3L633.0 199.5L634.0 203.0L635.0 203.5L636.0 201.8L637.0 204.1L638.0 202.3L639.0 202.2L640.0 202.8L641.0 201.6L642.0 203.5L643.0 200.8L644.0 202.4L645.0 201.8L646.0 201.8L647.0 202.0L648.0 201.8L649.0 203.1L650.0 201.9L651.0 204.0L652.0 204.4L653.0 201.7L654.0 204.1L655.0 202.2L656.0 201.3L657.0 204.1L658.0 203.8L659.0 203.2L660.0 203.0L661.0 200.9L662.0 201.4L663.0 202.6L664.0 202.9L665.0 203.7L666.0 202.3L667.0 201.3L668.0 204.3L669.0 204.0L670.0 203.6L671.0 201.8L672.0 202.5L673.0 204.4L674.0 204.1L675.0 202.1L676.0 202.5L677.0 204.2L678.0 204.2L679.0 201.3L680.0 202.1L681.0 203.7L682.0 201.3L683.0 202.1L684.0 203.5L685.0 203.4L686.0 201.7L687.0 201.2L688.0 202.8L689.0 203.7L690.0 203.8L691.0 203.4L692.0 199.3L693.0 201.8L694.0 204.1L695.0 202.9L696.0 202.5L697.0 201.5L698.0 203.0L699.0 202.5L700.0 201.8L701.0 203.8L702.0 203.2L703.0 201.7L704.0 204.3L705.0 201.5L706.0 202.7L707.0 199.0L708.0 203.4L709.0 201.9L710.0 204.0L711.0 203.5L712.0 204.2L713.0 202.2L714.0 202.8L715.0 202.5L716.0 202.0L717.0 202.1L718.0 201.2L719.0 203.4L720.0 202.0L721.0 204.3L722.0 201.9L723.0 203.7L724.0 203.2L725.0 199.0L726.0 204.1L727.0 202.9L728.0 204.1L729.0 202.6L730.0 202.9L731.0 202.2L732.0 203.5L733.0 204.3L734.0 202.2L735.0 200.9L736.0 201.5L737.0 203.7L738.0 203.1L739.0 201.8L740.0 204.1L741.0 201.7L742.0 204.0L743.0 203.0L744.0 203.6L745.0 202.8L746.0 201.5L747.0 201.7L748.0 202.0L749.0 203.3L750.0 201.7L751.0 201.2L752.0 203.0L753.0 204.3L754.0 203.0L755.0 202.6L756.0 201.6L757.0 202.1L758.0 201.9L759.0 204.2L760.0 202.0L761.0 203.4L762.0 202.8L763.0 203.6L764.0 203.4L765.0 199.6L766.0 203.4L767.0 203.0L768.0 202.8L769.0 202.3L770.0 204.2L771.0 201.6L772.0 204.4L773.0 203.8L774.0 202.0L775.0 202.0L776.0 203.1L777.0 202.1L778.0 203.0L779.0 201.6L780.0 201.9L781.0 203.6L782.0 202.0L783.0 202.5L784.0 204.4L785.0 204.1L786.0 204.0L787.0 204.3L788.0 203.6L789.0 201.2L790.0 203.4L791.0 201.0L792.0 202.3L793.0 201.8L794.0 202.0L795.0 201.9L796.0 200.3L797.0 199.8L798.0 202.6L799.0 203.8L800.0 204.2L801.0 203.0L802.0 203.5L803.0 203.8L804.0 203.7L805.0 204.1L806.0 202.8L807.0 202.1L808.0 203.2L809.0 203.7L810.0 203.8L811.0 203.2L812.0 202.9L813.0 202.5L814.0 202.1L815.0 203.7L816.0 202.7L817.0 202.6L818.0 199.9L819.0 204.1L820.0 203.0L821.0 203.8L822.0 202.9L823.0 202.3L824.0 204.4L825.0 201.6L826.0 201.9L827.0 202.3L828.0 202.2L829.0 201.8L830.0 201.2L831.0 202.4L832.0 203.5L833.0 203.9L834.0 201.4L835.0 202.0L836.0 202.7L837.0 200.0L838.0 203.6L839.0 204.0L840.0 202.0L841.0 202.6L842.0 202.8L843.0 203.7L844.0 202.2L845.0 202.9L846.0 202.6L847.0 201.6L848.0 201.7L849.0 202.1L850.0 203.1L851.0 203.1L852.0 204.1L853.0 204.0L854.0 201.7L855.0 204.3L856.0 202.5L857.0 201.8L858.0 202.4L859.0 202.6L860.0 203.3L861.0 201.4L862.0 202.6L863.0 201.9L864.0 202.9L865.0 201.3L866.0 203.5L867.0 201.6L868.0 202.0L869.0 202.3L870.0 202.7L871.0 200.6L872.0 202.6L873.0 202.5L874.0 204.0L875.0 203.0L876.0 202.5L877.0 201.7L878.0 201.3L879.0 201.2L880.0 204.1L881.0 204.0L882.0 203.0L883.0 201.6L884.0 201.3L885.0 202.9L886.0 205.4L887.0 205.0L888.0 206.3L889.0 206.7L890.0 205.1L891.0 206.2L892.0 202.3L893.0 202.9L894.0 202.9L895.0 203.4L896.0 202.4L897.0 203.2L898.0 203.8L899.0 203.7L900.0 202.6L901.0 201.9L902.0 202.5L903.0 202.8L904.0 201.9L905.0 201.8L906.0 201.3L907.0 201.5L908.0 201.6L909.0 204.2L910.0 202.8L911.0 203.4L912.0 204.1L913.0 203.9L914.0 201.9L915.0 200.5L916.0 202.9L917.0 202.0L918.0 204.1L919.0 201.8L920.0 204.2L921.0 203.5L922.0 203.5L923.0 203.3L924.0 202.1L925.0 202.7L926.0 202.5L927.0 202.4L928.0 202.1L929.0 202.5L930.0 203.8L931.0 201.8L932.0 202.1L933.0 201.3L934.0 201.8L935.0 204.1L936.0 203.8L937.0 203.0L938.0 201.9L939.0 202.6L940.0 202.5L941.0 202.8L942.0 203.2L943.0 203.9L944.0 203.8L945.0 202.2L946.0 203.4L947.0 201.6L948.0 203.7L949.0 201.5L950.0 204.4L951.0 203.9L952.0 204.3L953.0 201.3L954.0 202.8L955.0 202.7L956.0 199.7L957.0 201.6L958.0 203.1L959.0 204.1L960.0 201.7L961.0 203.9L962.0 203.4L963.0 201.7L964.0 203.4L965.0 199.5L966.0 201.3L967.0 201.8L968.0 204.3L969.0 203.9L970.0 201.7L971.0 204.2L972.0 204.4L973.0 202.5L974.0 202.4L975.0 202.8L976.0 203.0L977.0 202.0L978.0 204.0L979.0 203.8L980.0 202.4L981.0 201.6L982.0 199.3L983.0 204.0L984.0 203.4L985.0 201.4L986.0 201.8L987.0 202.7L988.0 201.0L988.0 218.7L987.0 217.8L986.0 219.1L985.0 218.7L984.0 216.7L983.0 218.4L982.0 216.8L981.0 216.0L980.0 216.8L979.0 218.1L978.0 216.0L977.0 217.3L976.0 215.6L975.0 218.3L974.0 218.3L973.0 218.5L972.0 217.9L971.0 216.1L970.0 218.3L969.0 216.1L968.0 216.3L967.0 218.1L966.0 218.1L965.0 220.7L964.0 218.5L963.0 217.7L962.0 216.1L961.0 217.0L960.0 216.6L959.0 218.4L958.0 218.7L957.0 218.7L956.0 217.9L955.0 218.6L954.0 216.8L953.0 218.6L952.0 217.8L951.0 215.6L950.0 217.2L949.0 217.4L948.0 215.8L947.0 217.1L946.0 217.6L945.0 217.1L944.0 217.7L943.0 217.7L942.0 218.7L941.0 218.6L940.0 218.1L939.0 217.1L938.0 217.1L937.0 218.3L936.0 217.5L935.0 215.7L934.0 218.1L933.0 217.7L932.0 217.6L931.0 216.7L930.0 217.4L929.0 217.7L928.0 218.6L927.0 218.4L926.0 216.2L925.0 217.7L924.0 215.7L923.0 218.4L922.0 217.3L921.0 215.9L920.0 218.4L919.0 217.8L918.0 216.0L917.0 216.1L916.0 217.8L915.0 216.0L914.0 218.2L913.0 217.5L912.0 217.2L911.0 217.5L910.0 216.7L909.0 218.5L908.0 218.8L907.0 216.2L906.0 215.7L905.0 220.8L904.0 217.5L903.0 217.0L902.0 216.8L901.0 216.4L900.0 216.6L899.0 218.4L898.0 217.8L897.0 217.4L896.0 216.2L895.0 216.9L894.0 216.6L893.0 216.0L892.0 218.3L891.0 214.7L890.0 213.3L889.0 213.8L888.0 214.8L887.0 215.0L886.0 213.6L885.0 216.6L884.0 218.3L883.0 217.6L882.0 215.6L881.0 216.5L880.0 216.4L879.0 219.1L878.0 217.3L877.0 218.7L876.0 219.9L875.0 216.9L874.0 218.8L873.0 217.7L872.0 217.7L871.0 216.9L870.0 216.2L869.0 217.4L868.0 215.7L867.0 215.9L866.0 216.9L865.0 218.8L864.0 216.3L863.0 217.0L862.0 218.4L861.0 216.1L860.0 216.2L859.0 216.0L858.0 217.0L857.0 218.7L856.0 218.6L855.0 220.0L854.0 218.5L853.0 217.1L852.0 218.1L851.0 217.2L850.0 216.3L849.0 217.2L848.0 216.8L847.0 216.1L846.0 218.3L845.0 217.6L844.0 218.4L843.0 216.1L842.0 216.5L841.0 216.3L840.0 217.7L839.0 218.2L838.0 217.1L837.0 217.6L836.0 218.4L835.0 215.7L834.0 216.9L833.0 218.4L832.0 215.9L831.0 215.8L830.0 219.9L829.0 216.9L828.0 218.6L827.0 216.4L826.0 216.7L825.0 218.0L824.0 218.2L823.0 217.5L822.0 216.5L821.0 217.2L820.0 217.1L819.0 218.7L818.0 220.8L817.0 217.0L816.0 218.1L815.0 218.1L814.0 216.4L813.0 217.6L812.0 217.6L811.0 218.3L810.0 218.3L809.0 217.5L808.0 215.9L807.0 220.0L806.0 218.8L805.0 219.6L804.0 216.1L803.0 216.1L802.0 216.7L801.0 216.0L800.0 220.1L799.0 217.0L798.0 217.4L797.0 218.7L796.0 215.7L795.0 217.6L794.0 216.8L793.0 215.8L792.0 216.8L791.0 217.0L790.0 218.1L789.0 217.6L788.0 216.3L787.0 216.8L786.0 217.9L785.0 216.5L784.0 215.6L783.0 217.8L782.0 218.5L781.0 217.8L780.0 217.3L779.0 218.2L778.0 218.8L777.0 218.5L776.0 216.5L775.0 217.7L774.0 215.7L773.0 216.8L772.0 216.2L771.0 217.6L770.0 215.6L769.0 218.6L768.0 215.7L767.0 219.2L766.0 216.3L765.0 215.9L764.0 218.3L763.0 216.1L762.0 216.3L761.0 217.3L760.0 216.9L759.0 217.2L758.0 217.9L757.0 217.8L756.0 216.7L755.0 218.7L754.0 218.7L753.0 217.6L752.0 217.1L751.0 216.5L750.0 215.8L749.0 218.7L748.0 220.2L747.0 219.7L746.0 218.6L745.0 217.4L744.0 216.7L743.0 216.1L742.0 218.1L741.0 217.6L740.0 217.6L739.0 218.2L738.0 217.2L737.0 216.2L736.0 218.0L735.0 216.0L734.0 216.8L733.0 217.3L732.0 218.3L731.0 220.9L730.0 217.0L729.0 217.7L728.0 215.9L727.0 218.3L726.0 216.7L725.0 218.3L724.0 218.5L723.0 217.2L722.0 218.8L721.0 217.5L720.0 217.7L719.0 217.4L718.0 215.9L717.0 216.8L716.0 218.8L715.0 217.7L714.0 217.3L713.0 217.8L712.0 218.7L711.0 217.1L710.0 217.9L709.0 217.1L708.0 216.1L707.0 217.7L706.0 216.5L705.0 217.4L704.0 218.4L703.0 217.0L702.0 217.5L701.0 217.3L700.0 216.6L699.0 220.3L698.0 217.3L697.0 216.3L696.0 215.6L695.0 217.5L694.0 217.0L693.0 217.2L692.0 218.0L691.0 217.6L690.0 216.6L689.0 215.9L688.0 220.1L687.0 215.6L686.0 215.7L685.0 218.6L684.0 217.1L683.0 215.9L682.0 217.8L681.0 216.2L680.0 216.0L679.0 218.8L678.0 220.9L677.0 216.1L676.0 217.0L675.0 216.1L674.0 218.7L673.0 217.3L672.0 218.4L671.0 220.7L670.0 217.6L669.0 215.7L668.0 217.1L667.0 220.2L666.0 216.0L665.0 215.8L664.0 218.8L663.0 215.6L662.0 219.3L661.0 218.7L660.0 216.5L659.0 217.2L658.0 217.1L657.0 215.9L656.0 217.4L655.0 216.3L654.0 216.3L653.0 216.0L652.0 217.9L651.0 215.9L650.0 218.6L649.0 216.8L648.0 216.1L647.0 216.9L646.0 216.7L645.0 218.4L644.0 216.9L643.0 217.1L642.0 218.6L641.0 216.2L640.0 216.1L639.0 216.1L638.0 218.6L637.0 218.9L636.0 217.8L635.0 217.4L634.0 218.0L633.0 216.3L632.0 215.8L631.0 218.5L630.0 218.6L629.0 218.8L628.0 217.6L627.0 218.3L626.0 215.9L625.0 216.8L624.0 218.0L623.0 217.1L622.0 216.7L621.0 218.6L620.0 218.2L619.0 215.7L618.0 218.1L617.0 218.4L616.0 218.7L615.0 218.3L614.0 217.4L613.0 218.7L612.0 217.0L611.0 219.5L610.0 218.4L609.0 218.8L608.0 217.8L607.0 218.6L606.0 220.5L605.0 216.9L604.0 217.7L603.0 217.2L602.0 216.7L601.0 218.4L600.0 218.6L599.0 218.0L598.0 216.5L597.0 216.8L596.0 217.0L595.0 215.6L594.0 216.5L593.0 215.6L592.0 218.5L591.0 218.8L590.0 218.5L589.0 218.7L588.0 215.6L587.0 218.7L586.0 216.6L585.0 216.3L584.0 217.6L583.0 217.6L582.0 217.8L581.0 218.7L580.0 218.3L579.0 216.1L578.0 218.1L577.0 218.5L576.0 217.1L575.0 217.0L574.0 216.7L573.0 216.8L572.0 218.5L571.0 218.0L570.0 218.4L569.0 218.0L568.0 216.3L567.0 218.1L566.0 215.9L565.0 218.3L564.0 216.1L563.0 217.0L562.0 217.4L561.0 217.5L560.0 218.5L559.0 217.2L558.0 218.7L557.0 217.8L556.0 218.5L555.0 217.6L554.0 217.2L553.0 217.5L552.0 216.2L551.0 216.3L550.0 217.8L549.0 220.5L548.0 216.4L547.0 217.3L546.0 215.6L545.0 217.8L544.0 217.0L543.0 218.3L542.0 218.2L541.0 218.6L540.0 218.4L539.0 216.3L538.0 219.7L537.0 217.3L536.0 215.6L535.0 216.5L534.0 220.3L533.0 218.4L532.0 217.8L531.0 217.1L530.0 217.4L529.0 217.7L528.0 216.0L527.0 216.0L526.0 218.1L525.0 216.4L524.0 215.9L523.0 218.6L522.0 216.6L521.0 216.8L520.0 218.0L519.0 216.8L518.0 217.5L517.0 216.3L516.0 216.4L515.0 217.5L514.0 216.8L513.0 216.2L512.0 217.4L511.0 217.9L510.0 216.0L509.0 216.3L508.0 218.7L507.0 217.8L506.0 217.4L505.0 217.3L504.0 220.2L503.0 217.2L502.0 219.5L501.0 220.5L500.0 216.9L499.0 216.7L498.0 217.7L497.0 218.2L496.0 216.3L495.0 217.8L494.0 216.4L493.0 217.9Z" fill="#485370"/></svg>
<div style="left:279px;top:194.5px;width:717px;height:1px;background:#2e2e2e;"></div>
<div style="left:279px;top:223px;width:717px;height:1px;background:#222;"></div>
<div style="left:279px;top:224px;width:41px;height:34px;background:#403d3d;border-bottom:1px solid #2a2a2a;"></div>
<div style="left:320px;top:224px;width:676px;height:34px;background:#363434;"></div>
<div style="left:320px;top:236px;width:676px;height:7px;background:#c9c9a9;"></div>
<svg style="left:320px;top:236px" width="8" height="7"><path d="M0 0H7L0 7Z" fill="#f0e020"/></svg>
<div style="left:322.5px;top:244.5px;font-size:9px;line-height:12px;color:#b0b0b0;font-weight:400;white-space:pre;filter:grayscale(1);letter-spacing:-0.435px;">00:00:00</div>
<div style="left:330.0px;top:255px;width:1.5px;height:2px;background:#aaa;"></div>
<div style="left:339.3px;top:255px;width:1.5px;height:2px;background:#aaa;"></div>
<div style="left:348.6px;top:255px;width:1.5px;height:2px;background:#aaa;"></div>
<div style="left:357.9px;top:255px;width:1.5px;height:2px;background:#aaa;"></div>
<div style="left:367.2px;top:255px;width:1.5px;height:2px;background:#aaa;"></div>
<div style="left:376.5px;top:255px;width:1.5px;height:2px;background:#aaa;"></div>
<div style="left:321px;top:251px;width:1px;height:6px;background:#bbb;"></div>
<svg style="left:285px;top:243px" width="8" height="9" viewBox="0 0 8 9"><path d="M2 4V2.5A2 2 0 0 1 6 2.5V4" stroke="#eee" stroke-width="1.2" fill="none"/><rect x="0.5" y="4" width="7" height="5" fill="#eee"/></svg>
<svg style="left:301px;top:241px" width="14" height="12" viewBox="0 0 14 12"><circle cx="7" cy="6" r="6" fill="#1e3a50"/><rect x="1.5" y="3" width="4" height="6" fill="#4aa0d0"/><rect x="8.5" y="3" width="4" height="6" fill="#4aa0d0"/><path d="M5 1H9M7 1V11M5 11H9" stroke="#ddd" stroke-width="1"/></svg>
<div style="left:279px;top:257px;width:717px;height:1px;background:#2a2a2a;"></div>
<div style="left:279px;top:258.3px;width:17px;height:14.5px;background:#5d6fa5;border-radius:1px;"></div>
<div style="left:290px;top:259.8px;font-size:9.5px;line-height:12px;color:#f0f0f8;font-weight:400;white-space:pre;filter:grayscale(1);width:17px;margin-left:-8.5px;text-align:center;">L</div>
<div style="left:298px;top:258.3px;width:12.5px;height:12.5px;background:#5d6fa5;border-radius:1px;"></div>
<div style="left:301px;top:261.3px;width:7px;height:2px;background:#e8e8f0;"></div>
<div style="left:306px;top:276.0px;font-size:7.5px;line-height:10px;color:#c8c8c8;font-weight:400;white-space:pre;filter:grayscale(1);letter-spacing:1.141px;">-∞</div>
<div style="left:320px;top:271px;width:676px;height:20px;background:#353535;"></div>
<svg style="left:0;top:0" width="1" height="1"><path d="M320.5 274.4L321.7 274.2L322.9 271.6L324.1 273.1L325.3 274.2L326.5 270.2L327.7 273.4L328.9 274.4L330.1 273.5L331.3 274.3L332.5 272.5L333.7 272.6L334.9 274.5L336.1 272.1L337.3 273.5L338.5 274.8L339.7 273.4L340.9 274.2L342.1 274.3L343.3 273.8L344.5 274.7L345.7 272.8L346.9 273.7L348.1 272.2L349.3 270.2L350.5 272.6L351.7 274.1L352.9 274.7L354.1 272.6L355.3 271.5L356.5 272.4L357.7 273.6L358.9 273.3L360.1 270.9L361.3 272.9L362.5 273.7L363.7 273.1L364.9 274.5L366.1 273.3L367.3 274.4L368.5 273.2L369.7 270.6L370.9 274.7L370.9 288.4L369.7 288.5L368.5 286.3L367.3 286.7L366.1 287.1L364.9 288.7L363.7 286.4L362.5 289.0L361.3 288.7L360.1 289.0L358.9 288.6L357.7 287.9L356.5 288.5L355.3 288.3L354.1 287.6L352.9 287.1L351.7 287.0L350.5 289.3L349.3 286.6L348.1 287.6L346.9 289.1L345.7 288.2L344.5 288.6L343.3 289.8L342.1 286.6L340.9 288.0L339.7 287.6L338.5 286.4L337.3 287.3L336.1 288.8L334.9 287.6L333.7 288.4L332.5 286.8L331.3 286.2L330.1 287.8L328.9 288.6L327.7 286.5L326.5 288.0L325.3 286.3L324.1 286.3L322.9 286.8L321.7 288.5L320.5 288.2Z" fill="#7ea2ea"/><path d="M320.5 316.0L321.7 321.0L322.9 318.6L324.1 319.6L325.3 319.2L326.5 320.6L327.7 318.4L328.9 319.3L330.1 320.6L331.3 321.1L332.5 319.8L333.7 319.9L334.9 318.5L336.1 320.6L337.3 317.2L338.5 320.4L339.7 318.4L340.9 318.6L342.1 320.5L343.3 319.8L344.5 319.3L345.7 318.5L346.9 319.8L348.1 320.0L349.3 319.0L350.5 321.6L351.7 321.0L352.9 321.5L354.1 320.9L355.3 320.7L356.5 320.5L357.7 321.5L358.9 320.9L360.1 319.2L361.3 320.7L362.5 316.3L363.7 319.6L364.9 319.0L366.1 318.7L367.3 320.5L368.5 320.3L369.7 318.6L370.9 319.9L370.9 335.0L369.7 336.2L368.5 336.6L367.3 339.6L366.1 335.2L364.9 334.4L363.7 336.1L362.5 336.6L361.3 334.6L360.1 336.0L358.9 336.0L357.7 337.6L356.5 336.9L355.3 334.7L354.1 335.2L352.9 340.1L351.7 336.7L350.5 336.1L349.3 337.2L348.1 336.8L346.9 336.4L345.7 335.9L344.5 334.6L343.3 337.1L342.1 337.5L340.9 335.0L339.7 338.1L338.5 335.8L337.3 336.2L336.1 336.4L334.9 335.4L333.7 336.1L332.5 336.2L331.3 337.2L330.1 337.0L328.9 336.5L327.7 337.0L326.5 335.0L325.3 334.5L324.1 337.5L322.9 335.2L321.7 334.8L320.5 334.9Z" fill="#7ea2ea"/></svg>
<div style="left:279px;top:303.5px;width:717px;height:1px;background:#2a2a2a;"></div>
<div style="left:279px;top:306px;width:17px;height:14.5px;background:#5d6fa5;border-radius:1px;"></div>
<div style="left:290px;top:307.5px;font-size:9.5px;line-height:12px;color:#f0f0f8;font-weight:400;white-space:pre;filter:grayscale(1);width:17px;margin-left:-8.5px;text-align:center;">R</div>
<div style="left:298px;top:306px;width:12.5px;height:12.5px;background:#5d6fa5;border-radius:1px;"></div>
<div style="left:301px;top:309px;width:7px;height:2px;background:#e8e8f0;"></div>
<div style="left:306px;top:323.7px;font-size:7.5px;line-height:10px;color:#c8c8c8;font-weight:400;white-space:pre;filter:grayscale(1);letter-spacing:1.141px;">-∞</div>
<div style="left:320px;top:338.5px;width:676px;height:1.5px;background:#2e2e2e;"></div>
<div style="left:320px;top:290.5px;width:676px;height:1.5px;background:#2e2e2e;"></div>
<div style="left:279px;top:351px;width:717px;height:14px;background:#363636;border-top:1px solid #2a2a2a;"></div>
<div style="left:281.5px;top:351.5px;font-size:11px;line-height:14px;color:#ddd;font-weight:700;white-space:pre;filter:grayscale(1);">+</div>
<div style="left:297px;top:358px;width:7px;height:1.6px;background:#ddd;"></div>
<svg style="left:313px;top:354px" width="5" height="8"><path d="M4.5 0V8L0 4Z" fill="#ddd"/></svg>
<div style="left:307px;top:352px;width:1px;height:13px;background:#2a2a2a;"></div>
<div style="left:321.5px;top:352px;width:1px;height:13px;background:#2a2a2a;"></div>
<div style="left:326px;top:354px;width:2px;height:9px;background:#555;"></div>
<div style="left:279px;top:365px;width:717px;height:26px;background:#3a3838;border-top:1px solid #2a2a2a;"></div>
<svg style="left:284.5px;top:371px" width="15" height="15" viewBox="0 0 15 15"><circle cx="6.5" cy="6.5" r="5.5" fill="#d01818" stroke="#eee" stroke-width="1.2"/><circle cx="10.5" cy="10.5" r="3.3" fill="#eee"/><path d="M9.6 9V12M11.4 9V12" stroke="#333" stroke-width="0.9"/></svg>
<svg style="left:305px;top:371px" width="14" height="14" viewBox="0 0 14 14"><circle cx="7" cy="7" r="5.8" fill="#d01818" stroke="#eee" stroke-width="1.2"/></svg>
<svg style="left:327.6px;top:372.5px" width="11" height="11" viewBox="0 0 11 11"><rect x="0" y="0.5" width="2.2" height="10" fill="#eee"/><path d="M10.5 0.5V10.5L2.5 5.5Z" fill="#eee"/></svg>
<svg style="left:348px;top:372.5px" width="11" height="11" viewBox="0 0 11 11"><rect x="8.8" y="0.5" width="2.2" height="10" fill="#eee"/><path d="M0.5 0.5V10.5L8.5 5.5Z" fill="#eee"/></svg>
<div style="left:308px;top:439px;width:732px;height:256px;background:#e6edf4;border:1px solid #a9b4bf;border-radius:5px 5px 0 0;"></div>
<div style="left:309px;top:440px;width:730px;height:12px;background:linear-gradient(180deg,#d3dde8,#e3eaf2);border-radius:5px 5px 0 0;"></div>
<svg style="left:317px;top:448px" width="13" height="13" viewBox="0 0 13 13"><rect x="0.5" y="0.5" width="12" height="12" fill="#3a0808" stroke="#8a1a1a"/><text x="6.5" y="10" font-size="8" text-anchor="middle" fill="#c04040" font-family="Liberation Sans">fre</text></svg>
<div style="left:333.5px;top:448.5px;font-size:10.5px;line-height:14px;color:#a7acb3;font-weight:400;white-space:pre;filter:grayscale(1);">Сергей Завьялов - В Белой Фате.m4a</div>
<div style="left:315px;top:465px;width:718px;height:56px;background:#3a3a3a;"></div>
<div style="left:315px;top:521px;width:718px;height:169px;background:#3c3a3a;"></div>
<div style="left:315px;top:465px;width:718px;height:56px;background:#4a5e98;"></div>
<svg style="left:0;top:0" width="1" height="1"><path d="M316 494.0h1v2.9h-1ZM317 490.9h1v1.1h-1ZM317 494.0h1v0.5h-1ZM317 517.2h1v2.8h-1ZM318 491.2h1v0.8h-1ZM318 517.3h1v2.7h-1ZM319 466.0h1v3.0h-1ZM319 494.0h1v5.7h-1ZM320 466.0h1v6.5h-1ZM320 519.1h1v0.9h-1ZM321 466.0h1v1.3h-1ZM321 494.0h1v1.3h-1ZM321 518.3h1v1.7h-1ZM322 466.0h1v2.3h-1ZM322 488.9h1v3.1h-1ZM323 466.0h1v1.4h-1ZM323 494.0h1v1.0h-1ZM324 466.0h1v2.8h-1ZM324 494.0h1v1.8h-1ZM325 466.0h1v2.5h-1ZM325 494.0h1v3.5h-1ZM325 517.2h1v2.8h-1ZM326 466.0h1v5.7h-1ZM326 491.1h1v0.9h-1ZM326 494.0h1v2.2h-1ZM327 466.0h1v3.0h-1ZM327 490.9h1v1.1h-1ZM328 466.0h1v0.6h-1ZM328 494.0h1v2.6h-1ZM328 517.1h1v2.9h-1ZM329 494.0h1v0.9h-1ZM330 466.0h1v3.0h-1ZM330 517.7h1v2.3h-1ZM331 466.0h1v1.5h-1ZM331 489.0h1v3.0h-1ZM332 466.0h1v0.7h-1ZM332 489.3h1v2.7h-1ZM332 494.0h1v2.4h-1ZM333 494.0h1v1.2h-1ZM333 517.8h1v2.2h-1ZM334 466.0h1v6.2h-1ZM334 494.0h1v1.1h-1ZM335 466.0h1v2.1h-1ZM335 494.0h1v2.3h-1ZM336 466.0h1v2.7h-1ZM337 466.0h1v0.9h-1ZM337 517.7h1v2.3h-1ZM338 490.0h1v2.0h-1ZM338 517.6h1v2.4h-1ZM339 494.0h1v1.6h-1ZM340 466.0h1v2.1h-1ZM340 490.9h1v1.1h-1ZM340 494.0h1v1.3h-1ZM340 519.4h1v0.6h-1ZM341 466.0h1v2.0h-1ZM341 494.0h1v3.0h-1ZM341 518.5h1v1.5h-1ZM342 466.0h1v1.4h-1ZM342 491.3h1v0.7h-1ZM342 494.0h1v2.0h-1ZM343 489.9h1v2.1h-1ZM343 494.0h1v2.0h-1ZM344 517.0h1v3.0h-1ZM345 466.0h1v2.0h-1ZM345 489.3h1v2.7h-1ZM345 494.0h1v1.1h-1ZM345 515.1h1v4.9h-1ZM346 514.5h1v5.5h-1ZM347 466.0h1v3.0h-1ZM347 490.3h1v1.7h-1ZM347 494.0h1v1.6h-1ZM347 517.4h1v2.6h-1ZM348 466.0h1v1.2h-1ZM348 519.1h1v0.9h-1ZM349 490.3h1v1.7h-1ZM350 490.7h1v1.3h-1ZM350 494.0h1v1.2h-1ZM350 518.6h1v1.4h-1ZM351 494.0h1v1.6h-1ZM352 489.6h1v2.4h-1ZM352 494.0h1v2.3h-1ZM353 466.0h1v4.9h-1ZM353 488.0h1v4.0h-1ZM353 494.0h1v0.7h-1ZM354 489.5h1v2.5h-1ZM354 518.1h1v1.9h-1ZM355 466.0h1v0.9h-1ZM355 517.5h1v2.5h-1ZM356 494.0h1v2.9h-1ZM357 491.0h1v1.0h-1ZM358 489.2h1v2.8h-1ZM358 494.0h1v1.5h-1ZM358 519.4h1v0.6h-1ZM359 466.0h1v0.7h-1ZM359 489.6h1v2.4h-1ZM359 518.7h1v1.3h-1ZM360 487.1h1v4.9h-1ZM360 494.0h1v0.9h-1ZM361 466.0h1v5.8h-1ZM361 494.0h1v1.1h-1ZM362 466.0h1v1.1h-1ZM362 491.1h1v0.9h-1ZM363 466.0h1v0.7h-1ZM363 490.9h1v1.1h-1ZM363 517.5h1v2.5h-1ZM364 466.0h1v0.6h-1ZM364 485.6h1v6.4h-1ZM364 494.0h1v2.9h-1ZM365 490.6h1v1.4h-1ZM365 494.0h1v2.0h-1ZM365 519.2h1v0.8h-1ZM366 514.4h1v5.6h-1ZM367 519.4h1v0.6h-1ZM368 466.0h1v2.7h-1ZM368 491.5h1v0.5h-1ZM368 494.0h1v6.1h-1ZM368 519.3h1v0.7h-1ZM369 466.0h1v1.4h-1ZM369 488.2h1v3.8h-1ZM369 494.0h1v0.9h-1ZM369 518.3h1v1.7h-1ZM370 466.0h1v4.8h-1ZM371 466.0h1v3.6h-1ZM371 494.0h1v2.3h-1ZM371 519.4h1v0.6h-1ZM372 466.0h1v1.5h-1ZM372 494.0h1v1.7h-1ZM372 517.7h1v2.3h-1ZM373 466.0h1v2.2h-1ZM373 517.0h1v3.0h-1ZM374 466.0h1v1.5h-1ZM374 489.0h1v3.0h-1ZM374 494.0h1v0.7h-1ZM374 514.5h1v5.5h-1ZM375 491.4h1v0.6h-1ZM375 494.0h1v1.1h-1ZM375 519.4h1v0.6h-1ZM376 466.0h1v3.9h-1ZM376 490.2h1v1.8h-1ZM376 494.0h1v0.8h-1ZM376 514.0h1v6.0h-1ZM377 490.2h1v1.8h-1ZM377 494.0h1v1.4h-1ZM378 494.0h1v2.6h-1ZM378 518.7h1v1.3h-1ZM379 466.0h1v2.5h-1ZM379 491.3h1v0.7h-1ZM379 494.0h1v1.6h-1ZM380 466.0h1v2.3h-1ZM380 490.8h1v1.2h-1ZM380 494.0h1v1.6h-1ZM380 518.1h1v1.9h-1ZM382 466.0h1v2.1h-1ZM383 466.0h1v1.5h-1ZM383 491.1h1v0.9h-1ZM383 494.0h1v1.2h-1ZM383 518.1h1v1.9h-1ZM384 466.0h1v0.8h-1ZM384 484.3h1v7.7h-1ZM384 518.6h1v1.4h-1ZM385 466.0h1v2.0h-1ZM385 519.1h1v0.9h-1ZM386 485.0h1v7.0h-1ZM386 494.0h1v2.8h-1ZM386 518.4h1v1.6h-1ZM387 494.0h1v6.0h-1ZM387 518.5h1v1.5h-1ZM388 466.0h1v3.2h-1ZM388 494.0h1v5.0h-1ZM388 519.0h1v1.0h-1ZM389 490.9h1v1.1h-1ZM389 494.0h1v3.0h-1ZM390 494.0h1v2.6h-1ZM390 519.1h1v0.9h-1ZM391 466.0h1v2.8h-1ZM391 490.7h1v1.3h-1ZM392 494.0h1v1.8h-1ZM393 466.0h1v1.3h-1ZM393 490.5h1v1.5h-1ZM393 494.0h1v1.5h-1ZM395 466.0h1v1.4h-1ZM395 519.3h1v0.7h-1ZM396 466.0h1v2.0h-1ZM396 515.6h1v4.4h-1ZM397 489.8h1v2.2h-1ZM399 466.0h1v2.7h-1ZM399 486.3h1v5.7h-1ZM399 494.0h1v1.5h-1ZM399 517.3h1v2.7h-1ZM400 494.0h1v2.2h-1ZM401 487.9h1v4.1h-1ZM401 494.0h1v2.1h-1ZM402 466.0h1v2.4h-1ZM402 490.1h1v1.9h-1ZM403 490.2h1v1.8h-1ZM403 518.0h1v2.0h-1ZM404 491.2h1v0.8h-1ZM405 466.0h1v2.0h-1ZM406 466.0h1v2.6h-1ZM406 494.0h1v6.2h-1ZM407 466.0h1v2.6h-1ZM407 491.0h1v1.0h-1ZM407 494.0h1v0.9h-1ZM408 466.0h1v2.3h-1ZM410 466.0h1v0.7h-1ZM410 490.4h1v1.6h-1ZM411 466.0h1v1.9h-1ZM411 490.0h1v2.0h-1ZM411 494.0h1v1.7h-1ZM412 489.7h1v2.3h-1ZM412 494.0h1v1.7h-1ZM412 517.2h1v2.8h-1ZM413 466.0h1v1.7h-1ZM414 466.0h1v2.6h-1ZM414 490.4h1v1.6h-1ZM414 494.0h1v0.7h-1ZM414 518.3h1v1.7h-1ZM415 489.2h1v2.8h-1ZM415 494.0h1v2.5h-1ZM415 518.6h1v1.4h-1ZM416 466.0h1v1.6h-1ZM416 491.4h1v0.6h-1ZM416 494.0h1v5.2h-1ZM416 518.8h1v1.2h-1ZM417 494.0h1v1.5h-1ZM418 466.0h1v2.8h-1ZM418 517.6h1v2.4h-1ZM419 466.0h1v7.1h-1ZM419 494.0h1v6.8h-1ZM420 466.0h1v1.6h-1ZM420 518.8h1v1.2h-1ZM421 466.0h1v2.2h-1ZM421 490.4h1v1.6h-1ZM421 494.0h1v2.7h-1ZM422 466.0h1v2.6h-1ZM422 517.2h1v2.8h-1ZM423 490.4h1v1.6h-1ZM423 494.0h1v1.4h-1ZM424 466.0h1v2.9h-1ZM424 494.0h1v2.1h-1ZM424 518.3h1v1.7h-1ZM425 494.0h1v1.2h-1ZM425 519.2h1v0.8h-1ZM426 466.0h1v0.5h-1ZM426 494.0h1v2.0h-1ZM427 466.0h1v0.6h-1ZM427 491.4h1v0.6h-1ZM427 494.0h1v2.1h-1ZM428 466.0h1v2.3h-1ZM429 466.0h1v2.8h-1ZM429 489.7h1v2.3h-1ZM429 494.0h1v2.8h-1ZM429 517.4h1v2.6h-1ZM430 466.0h1v1.7h-1ZM430 494.0h1v0.6h-1ZM430 519.1h1v0.9h-1ZM431 489.5h1v2.5h-1ZM431 517.9h1v2.1h-1ZM432 466.0h1v1.1h-1ZM432 486.8h1v5.2h-1ZM432 519.4h1v0.6h-1ZM433 494.0h1v2.6h-1ZM433 516.8h1v3.2h-1ZM434 490.0h1v2.0h-1ZM434 516.4h1v3.6h-1ZM435 466.0h1v0.7h-1ZM435 489.9h1v2.1h-1ZM436 466.0h1v2.6h-1ZM436 490.9h1v1.1h-1ZM436 494.0h1v2.4h-1ZM436 514.7h1v5.3h-1ZM437 466.0h1v1.2h-1ZM437 494.0h1v1.4h-1ZM437 517.9h1v2.1h-1ZM438 490.3h1v1.7h-1ZM438 517.2h1v2.8h-1ZM439 466.0h1v1.7h-1ZM439 486.2h1v5.8h-1ZM439 517.4h1v2.6h-1ZM440 466.0h1v1.1h-1ZM440 487.7h1v4.3h-1ZM441 490.7h1v1.3h-1ZM441 494.0h1v2.6h-1ZM442 466.0h1v4.9h-1ZM442 518.7h1v1.3h-1ZM443 466.0h1v2.3h-1ZM443 488.7h1v3.3h-1ZM443 494.0h1v2.9h-1ZM444 490.5h1v1.5h-1ZM444 494.0h1v1.9h-1ZM444 518.2h1v1.8h-1ZM445 494.0h1v2.4h-1ZM445 519.3h1v0.7h-1ZM446 490.8h1v1.2h-1ZM447 466.0h1v1.8h-1ZM447 494.0h1v2.8h-1ZM447 518.2h1v1.8h-1ZM448 466.0h1v2.8h-1ZM448 489.2h1v2.8h-1ZM448 517.6h1v2.4h-1ZM449 466.0h1v2.4h-1ZM449 494.0h1v2.2h-1ZM450 466.0h1v3.7h-1ZM450 490.4h1v1.6h-1ZM451 466.0h1v0.8h-1ZM451 494.0h1v0.6h-1ZM452 466.0h1v1.3h-1ZM452 512.4h1v7.6h-1ZM453 466.0h1v2.7h-1ZM453 490.5h1v1.5h-1ZM453 517.6h1v2.4h-1ZM454 487.4h1v4.6h-1ZM455 466.0h1v2.2h-1ZM455 490.2h1v1.8h-1ZM456 491.5h1v0.5h-1ZM457 490.3h1v1.7h-1ZM457 494.0h1v2.9h-1ZM458 466.0h1v2.1h-1ZM458 490.9h1v1.1h-1ZM458 494.0h1v2.1h-1ZM459 490.7h1v1.3h-1ZM459 517.6h1v2.4h-1ZM460 466.0h1v0.7h-1ZM460 491.1h1v0.9h-1ZM460 494.0h1v2.4h-1ZM460 518.4h1v1.6h-1ZM461 491.4h1v0.6h-1ZM463 494.0h1v7.9h-1ZM463 518.7h1v1.3h-1ZM464 466.0h1v0.7h-1ZM464 490.4h1v1.6h-1ZM464 494.0h1v1.5h-1ZM464 512.5h1v7.5h-1ZM465 490.4h1v1.6h-1ZM465 494.0h1v1.6h-1ZM467 517.9h1v2.1h-1ZM468 494.0h1v1.3h-1ZM468 517.6h1v2.4h-1ZM469 466.0h1v2.6h-1ZM469 490.0h1v2.0h-1ZM469 494.0h1v1.2h-1ZM469 518.4h1v1.6h-1ZM470 466.0h1v1.9h-1ZM470 516.6h1v3.4h-1ZM471 466.0h1v0.6h-1ZM471 518.4h1v1.6h-1ZM472 494.0h1v1.6h-1ZM472 518.9h1v1.1h-1ZM473 466.0h1v0.7h-1ZM473 489.8h1v2.2h-1ZM473 518.5h1v1.5h-1ZM474 466.0h1v6.9h-1ZM474 491.2h1v0.8h-1ZM474 494.0h1v2.1h-1ZM475 490.3h1v1.7h-1ZM475 494.0h1v1.2h-1ZM475 517.8h1v2.2h-1ZM476 466.0h1v0.7h-1ZM476 487.5h1v4.5h-1ZM476 494.0h1v2.9h-1ZM476 519.0h1v1.0h-1ZM477 489.3h1v2.7h-1ZM477 494.0h1v1.6h-1ZM478 466.0h1v1.2h-1ZM478 490.2h1v1.8h-1ZM478 494.0h1v2.6h-1ZM479 466.0h1v2.0h-1ZM479 491.2h1v0.8h-1ZM479 494.0h1v4.5h-1ZM479 518.0h1v2.0h-1ZM480 466.0h1v2.3h-1ZM480 489.6h1v2.4h-1ZM480 517.9h1v2.1h-1ZM481 466.0h1v0.6h-1ZM481 490.7h1v1.3h-1ZM481 512.8h1v7.2h-1ZM482 494.0h1v1.3h-1ZM483 466.0h1v4.9h-1ZM484 466.0h1v8.0h-1ZM484 489.7h1v2.3h-1ZM484 494.0h1v0.9h-1ZM484 515.0h1v5.0h-1ZM485 466.0h1v1.6h-1ZM485 494.0h1v0.6h-1ZM486 490.0h1v2.0h-1ZM486 494.0h1v6.9h-1ZM486 518.0h1v2.0h-1ZM487 466.0h1v3.2h-1ZM487 490.2h1v1.8h-1ZM487 494.0h1v3.0h-1ZM488 466.0h1v0.6h-1ZM488 489.0h1v3.0h-1ZM488 494.0h1v0.7h-1ZM488 513.3h1v6.7h-1ZM489 518.8h1v1.2h-1ZM490 466.0h1v2.3h-1ZM490 490.7h1v1.3h-1ZM492 466.0h1v1.2h-1ZM492 490.4h1v1.6h-1ZM492 494.0h1v1.1h-1ZM492 514.6h1v5.4h-1ZM493 518.7h1v1.3h-1ZM494 519.5h1v0.5h-1ZM495 490.7h1v1.3h-1ZM495 494.0h1v2.2h-1ZM496 466.0h1v1.0h-1ZM496 494.0h1v2.3h-1ZM497 466.0h1v6.1h-1ZM497 494.0h1v1.7h-1ZM497 517.6h1v2.4h-1ZM498 466.0h1v1.8h-1ZM498 494.0h1v2.0h-1ZM499 466.0h1v1.7h-1ZM499 518.1h1v1.9h-1ZM500 466.0h1v2.8h-1ZM500 490.8h1v1.2h-1ZM500 494.0h1v0.9h-1ZM500 516.6h1v3.4h-1ZM501 466.0h1v2.1h-1ZM501 490.8h1v1.2h-1ZM501 518.3h1v1.7h-1ZM502 466.0h1v2.2h-1ZM502 494.0h1v2.4h-1ZM503 489.8h1v2.2h-1ZM503 494.0h1v1.4h-1ZM505 494.0h1v2.1h-1ZM505 518.9h1v1.1h-1ZM506 466.0h1v2.3h-1ZM506 494.0h1v5.2h-1ZM507 489.1h1v2.9h-1ZM507 494.0h1v2.1h-1ZM507 517.4h1v2.6h-1ZM508 466.0h1v2.0h-1ZM509 489.2h1v2.8h-1ZM510 466.0h1v1.8h-1ZM511 494.0h1v2.1h-1ZM512 466.0h1v4.6h-1ZM512 491.0h1v1.0h-1ZM512 517.5h1v2.5h-1ZM513 466.0h1v1.9h-1ZM513 494.0h1v1.1h-1ZM513 519.2h1v0.8h-1ZM514 466.0h1v2.4h-1ZM514 494.0h1v1.2h-1ZM515 466.0h1v1.8h-1ZM515 489.5h1v2.5h-1ZM515 494.0h1v2.4h-1ZM515 515.4h1v4.6h-1ZM516 486.9h1v5.1h-1ZM516 494.0h1v3.0h-1ZM517 494.0h1v1.7h-1ZM518 486.2h1v5.8h-1ZM518 494.0h1v1.6h-1ZM518 518.7h1v1.3h-1ZM519 489.6h1v2.4h-1ZM519 494.0h1v0.8h-1ZM519 513.9h1v6.1h-1ZM520 466.0h1v2.2h-1ZM520 491.1h1v0.9h-1ZM520 494.0h1v1.5h-1ZM520 518.7h1v1.3h-1ZM521 466.0h1v1.7h-1ZM521 486.6h1v5.4h-1ZM521 494.0h1v2.7h-1ZM522 466.0h1v0.6h-1ZM523 466.0h1v2.6h-1ZM523 494.0h1v0.7h-1ZM523 518.4h1v1.6h-1ZM524 494.0h1v0.8h-1ZM525 487.5h1v4.5h-1ZM525 512.8h1v7.2h-1ZM526 494.0h1v2.1h-1ZM527 490.6h1v1.4h-1ZM527 494.0h1v1.8h-1ZM527 518.5h1v1.5h-1ZM529 466.0h1v3.5h-1ZM529 489.6h1v2.4h-1ZM529 518.4h1v1.6h-1ZM530 466.0h1v0.8h-1ZM530 484.2h1v7.8h-1ZM530 494.0h1v1.2h-1ZM531 466.0h1v2.7h-1ZM531 494.0h1v1.1h-1ZM532 466.0h1v1.3h-1ZM532 494.0h1v2.2h-1ZM532 514.8h1v5.2h-1ZM534 494.0h1v0.9h-1ZM534 518.7h1v1.3h-1ZM535 466.0h1v0.6h-1ZM535 494.0h1v2.2h-1ZM536 488.1h1v3.9h-1ZM537 466.0h1v6.0h-1ZM537 494.0h1v1.2h-1ZM538 490.7h1v1.3h-1ZM539 466.0h1v2.1h-1ZM539 491.2h1v0.8h-1ZM541 466.0h1v1.7h-1ZM541 490.1h1v1.9h-1ZM541 494.0h1v5.6h-1ZM542 466.0h1v1.9h-1ZM542 489.7h1v2.3h-1ZM542 494.0h1v2.5h-1ZM543 489.6h1v2.4h-1ZM543 494.0h1v2.2h-1ZM543 518.0h1v2.0h-1ZM544 518.4h1v1.6h-1ZM545 490.1h1v1.9h-1ZM546 489.9h1v2.1h-1ZM546 494.0h1v2.2h-1ZM546 519.1h1v0.9h-1ZM547 466.0h1v2.1h-1ZM547 490.7h1v1.3h-1ZM547 494.0h1v2.2h-1ZM547 516.9h1v3.1h-1ZM548 466.0h1v7.4h-1ZM548 490.2h1v1.8h-1ZM548 517.9h1v2.1h-1ZM549 491.2h1v0.8h-1ZM549 519.1h1v0.9h-1ZM550 466.0h1v5.5h-1ZM550 494.0h1v1.4h-1ZM551 466.0h1v7.4h-1ZM551 494.0h1v2.8h-1ZM552 466.0h1v2.9h-1ZM552 494.0h1v2.1h-1ZM552 518.6h1v1.4h-1ZM553 466.0h1v0.7h-1ZM553 518.2h1v1.8h-1ZM555 489.3h1v2.7h-1ZM555 514.0h1v6.0h-1ZM556 494.0h1v2.4h-1ZM557 466.0h1v1.4h-1ZM557 494.0h1v3.0h-1ZM558 466.0h1v2.3h-1ZM558 489.8h1v2.2h-1ZM558 494.0h1v1.0h-1ZM558 518.4h1v1.6h-1ZM559 487.7h1v4.3h-1ZM559 494.0h1v1.3h-1ZM560 466.0h1v2.9h-1ZM560 494.0h1v0.9h-1ZM560 519.1h1v0.9h-1ZM561 490.9h1v1.1h-1ZM561 494.0h1v1.6h-1ZM561 518.9h1v1.1h-1ZM562 484.3h1v7.7h-1ZM562 514.6h1v5.4h-1ZM563 490.9h1v1.1h-1ZM563 513.5h1v6.5h-1ZM564 466.0h1v1.2h-1ZM564 490.0h1v2.0h-1ZM564 494.0h1v2.7h-1ZM566 489.2h1v2.8h-1ZM567 466.0h1v1.7h-1ZM568 490.7h1v1.3h-1ZM569 466.0h1v1.1h-1ZM569 489.6h1v2.4h-1ZM569 494.0h1v2.0h-1ZM569 517.9h1v2.1h-1ZM570 518.6h1v1.4h-1ZM571 466.0h1v5.2h-1ZM571 518.1h1v1.9h-1ZM572 490.6h1v1.4h-1ZM572 494.0h1v2.8h-1ZM573 466.0h1v1.8h-1ZM573 491.3h1v0.7h-1ZM574 494.0h1v1.9h-1ZM574 518.3h1v1.7h-1ZM575 466.0h1v2.6h-1ZM575 494.0h1v2.1h-1ZM576 466.0h1v1.5h-1ZM576 518.1h1v1.9h-1ZM577 489.2h1v2.8h-1ZM577 494.0h1v1.2h-1ZM577 518.9h1v1.1h-1ZM578 466.0h1v3.2h-1ZM578 490.6h1v1.4h-1ZM578 494.0h1v3.0h-1ZM578 518.5h1v1.5h-1ZM580 466.0h1v2.3h-1ZM580 489.0h1v3.0h-1ZM581 466.0h1v3.0h-1ZM581 517.2h1v2.8h-1ZM582 466.0h1v0.9h-1ZM583 466.0h1v2.2h-1ZM583 490.9h1v1.1h-1ZM584 490.5h1v1.5h-1ZM584 494.0h1v1.7h-1ZM585 489.5h1v2.5h-1ZM585 494.0h1v7.7h-1ZM585 518.5h1v1.5h-1ZM586 466.0h1v2.6h-1ZM586 518.5h1v1.5h-1ZM587 466.0h1v1.9h-1ZM587 486.5h1v5.5h-1ZM588 466.0h1v1.9h-1ZM588 489.1h1v2.9h-1ZM588 518.0h1v2.0h-1ZM589 466.0h1v1.4h-1ZM589 494.0h1v1.2h-1ZM589 519.2h1v0.8h-1ZM590 494.0h1v2.7h-1ZM591 466.0h1v1.7h-1ZM591 490.5h1v1.5h-1ZM591 494.0h1v2.0h-1ZM591 512.2h1v7.8h-1ZM592 490.7h1v1.3h-1ZM592 517.6h1v2.4h-1ZM593 494.0h1v1.4h-1ZM594 466.0h1v1.3h-1ZM594 488.1h1v3.9h-1ZM594 494.0h1v1.3h-1ZM595 466.0h1v1.8h-1ZM595 491.4h1v0.6h-1ZM596 466.0h1v2.5h-1ZM596 489.6h1v2.4h-1ZM596 494.0h1v1.0h-1ZM596 517.5h1v2.5h-1ZM597 466.0h1v2.3h-1ZM597 489.0h1v3.0h-1ZM597 494.0h1v7.4h-1ZM598 466.0h1v1.6h-1ZM598 486.1h1v5.9h-1ZM598 517.1h1v2.9h-1ZM599 466.0h1v2.6h-1ZM600 518.7h1v1.3h-1ZM601 489.9h1v2.1h-1ZM602 466.0h1v2.1h-1ZM602 494.0h1v7.4h-1ZM603 494.0h1v1.2h-1ZM603 515.8h1v4.2h-1ZM604 494.0h1v0.9h-1ZM605 491.1h1v0.9h-1ZM606 518.5h1v1.5h-1ZM607 466.0h1v2.9h-1ZM608 494.0h1v2.9h-1ZM609 466.0h1v2.1h-1ZM609 490.8h1v1.2h-1ZM610 484.2h1v7.8h-1ZM610 519.2h1v0.8h-1ZM611 466.0h1v1.7h-1ZM611 490.4h1v1.6h-1ZM611 494.0h1v1.3h-1ZM611 517.1h1v2.9h-1ZM612 466.0h1v5.1h-1ZM612 490.2h1v1.8h-1ZM612 494.0h1v0.5h-1ZM612 517.4h1v2.6h-1ZM613 466.0h1v2.9h-1ZM613 490.9h1v1.1h-1ZM613 517.2h1v2.8h-1ZM614 490.7h1v1.3h-1ZM614 494.0h1v2.9h-1ZM615 466.0h1v1.8h-1ZM615 490.8h1v1.2h-1ZM615 494.0h1v1.7h-1ZM615 517.1h1v2.9h-1ZM616 466.0h1v1.6h-1ZM616 494.0h1v2.0h-1ZM616 518.4h1v1.6h-1ZM617 491.0h1v1.0h-1ZM617 494.0h1v0.5h-1ZM617 517.6h1v2.4h-1ZM619 466.0h1v0.8h-1ZM619 494.0h1v0.8h-1ZM620 466.0h1v2.0h-1ZM620 494.0h1v1.8h-1ZM621 466.0h1v2.6h-1ZM621 494.0h1v1.7h-1ZM621 518.3h1v1.7h-1ZM623 466.0h1v2.1h-1ZM623 486.6h1v5.4h-1ZM623 494.0h1v2.6h-1ZM623 517.4h1v2.6h-1ZM624 466.0h1v1.7h-1ZM624 489.2h1v2.8h-1ZM624 494.0h1v1.7h-1ZM624 518.6h1v1.4h-1ZM625 466.0h1v2.0h-1ZM625 494.0h1v2.0h-1ZM626 466.0h1v1.5h-1ZM627 494.0h1v2.6h-1ZM628 466.0h1v2.3h-1ZM628 490.9h1v1.1h-1ZM629 494.0h1v3.7h-1ZM630 491.2h1v0.8h-1ZM630 494.0h1v1.5h-1ZM631 490.8h1v1.2h-1ZM631 494.0h1v1.1h-1ZM631 518.2h1v1.8h-1ZM632 489.2h1v2.8h-1ZM632 494.0h1v1.3h-1ZM633 494.0h1v2.3h-1ZM634 466.0h1v0.7h-1ZM634 490.5h1v1.5h-1ZM634 494.0h1v2.3h-1ZM634 517.6h1v2.4h-1ZM635 466.0h1v2.1h-1ZM635 494.0h1v2.7h-1ZM635 519.2h1v0.8h-1ZM636 466.0h1v2.8h-1ZM636 518.6h1v1.4h-1ZM637 466.0h1v0.7h-1ZM637 517.0h1v3.0h-1ZM638 466.0h1v1.1h-1ZM638 490.3h1v1.7h-1ZM638 519.2h1v0.8h-1ZM639 517.7h1v2.3h-1ZM640 466.0h1v1.2h-1ZM640 494.0h1v1.7h-1ZM640 518.4h1v1.6h-1ZM641 466.0h1v1.8h-1ZM641 494.0h1v1.0h-1ZM641 517.5h1v2.5h-1ZM642 466.0h1v0.7h-1ZM642 490.9h1v1.1h-1ZM642 494.0h1v4.6h-1ZM642 517.4h1v2.6h-1ZM643 494.0h1v1.8h-1ZM643 517.4h1v2.6h-1ZM645 466.0h1v0.9h-1ZM645 494.0h1v3.0h-1ZM646 466.0h1v2.1h-1ZM646 518.1h1v1.9h-1ZM647 466.0h1v1.7h-1ZM647 491.1h1v0.9h-1ZM649 466.0h1v2.8h-1ZM649 490.1h1v1.9h-1ZM649 494.0h1v2.5h-1ZM650 466.0h1v3.2h-1ZM651 466.0h1v2.6h-1ZM651 489.6h1v2.4h-1ZM651 518.2h1v1.8h-1ZM652 466.0h1v1.2h-1ZM652 494.0h1v2.9h-1ZM652 519.4h1v0.6h-1ZM653 466.0h1v0.9h-1ZM653 494.0h1v1.0h-1ZM653 519.2h1v0.8h-1ZM654 491.4h1v0.6h-1ZM654 518.4h1v1.6h-1ZM655 491.0h1v1.0h-1ZM655 512.4h1v7.6h-1ZM656 489.6h1v2.4h-1ZM657 466.0h1v2.3h-1ZM657 490.9h1v1.1h-1ZM657 494.0h1v4.6h-1ZM658 466.0h1v5.3h-1ZM658 494.0h1v2.5h-1ZM658 518.5h1v1.5h-1ZM659 494.0h1v2.8h-1ZM659 517.3h1v2.7h-1ZM660 489.6h1v2.4h-1ZM660 517.2h1v2.8h-1ZM661 489.1h1v2.9h-1ZM662 466.0h1v7.4h-1ZM662 490.0h1v2.0h-1ZM662 494.0h1v1.9h-1ZM662 517.4h1v2.6h-1ZM663 487.4h1v4.6h-1ZM663 494.0h1v2.9h-1ZM663 517.4h1v2.6h-1ZM664 466.0h1v2.8h-1ZM664 489.3h1v2.7h-1ZM664 518.4h1v1.6h-1ZM665 466.0h1v2.4h-1ZM665 494.0h1v3.0h-1ZM665 517.5h1v2.5h-1ZM666 494.0h1v2.2h-1ZM667 494.0h1v2.4h-1ZM667 517.9h1v2.1h-1ZM668 466.0h1v4.0h-1ZM668 490.3h1v1.7h-1ZM668 517.1h1v2.9h-1ZM669 466.0h1v1.0h-1ZM669 489.1h1v2.9h-1ZM669 518.1h1v1.9h-1ZM670 466.0h1v3.6h-1ZM671 466.0h1v2.1h-1ZM671 489.7h1v2.3h-1ZM671 494.0h1v2.9h-1ZM671 518.7h1v1.3h-1ZM672 490.2h1v1.8h-1ZM672 494.0h1v1.0h-1ZM673 466.0h1v2.4h-1ZM673 484.8h1v7.2h-1ZM673 494.0h1v0.6h-1ZM674 512.8h1v7.2h-1ZM675 491.4h1v0.6h-1ZM675 518.0h1v2.0h-1ZM676 466.0h1v1.2h-1ZM676 490.5h1v1.5h-1ZM677 494.0h1v2.2h-1ZM678 466.0h1v2.0h-1ZM678 486.9h1v5.1h-1ZM678 512.1h1v7.9h-1ZM679 489.0h1v3.0h-1ZM679 494.0h1v2.2h-1ZM680 466.0h1v2.2h-1ZM680 490.2h1v1.8h-1ZM680 494.0h1v2.8h-1ZM681 466.0h1v2.0h-1ZM682 466.0h1v0.9h-1ZM682 494.0h1v2.0h-1ZM684 466.0h1v0.6h-1ZM684 490.5h1v1.5h-1ZM684 494.0h1v1.5h-1ZM685 494.0h1v1.7h-1ZM686 466.0h1v1.1h-1ZM686 518.4h1v1.6h-1ZM687 466.0h1v1.4h-1ZM687 517.3h1v2.7h-1ZM688 466.0h1v2.0h-1ZM688 515.7h1v4.3h-1ZM689 466.0h1v1.8h-1ZM690 466.0h1v1.9h-1ZM690 517.5h1v2.5h-1ZM691 491.5h1v0.5h-1ZM692 466.0h1v1.1h-1ZM692 494.0h1v0.9h-1ZM693 466.0h1v1.0h-1ZM693 491.4h1v0.6h-1ZM693 518.4h1v1.6h-1ZM694 466.0h1v2.9h-1ZM694 485.1h1v6.9h-1ZM694 513.7h1v6.3h-1ZM695 494.0h1v7.9h-1ZM696 466.0h1v2.3h-1ZM696 485.2h1v6.8h-1ZM696 494.0h1v2.2h-1ZM697 490.0h1v2.0h-1ZM697 494.0h1v0.8h-1ZM697 519.2h1v0.8h-1ZM698 466.0h1v0.8h-1ZM698 489.1h1v2.9h-1ZM698 494.0h1v1.9h-1ZM700 490.7h1v1.3h-1ZM700 515.8h1v4.2h-1ZM701 466.0h1v1.9h-1ZM701 489.3h1v2.7h-1ZM701 494.0h1v2.6h-1ZM701 519.1h1v0.9h-1ZM702 518.6h1v1.4h-1ZM703 466.0h1v2.4h-1ZM703 494.0h1v2.8h-1ZM704 485.2h1v6.8h-1ZM705 466.0h1v0.6h-1ZM705 494.0h1v1.6h-1ZM706 491.0h1v1.0h-1ZM706 514.3h1v5.7h-1ZM707 466.0h1v4.0h-1ZM707 494.0h1v2.5h-1ZM708 515.4h1v4.6h-1ZM709 490.2h1v1.8h-1ZM709 494.0h1v1.5h-1ZM709 518.6h1v1.4h-1ZM710 466.0h1v2.2h-1ZM710 494.0h1v2.1h-1ZM711 466.0h1v4.8h-1ZM711 491.2h1v0.8h-1ZM711 494.0h1v0.9h-1ZM711 514.1h1v5.9h-1ZM712 466.0h1v1.2h-1ZM712 519.5h1v0.5h-1ZM713 466.0h1v0.6h-1ZM713 490.6h1v1.4h-1ZM713 494.0h1v7.8h-1ZM714 466.0h1v6.5h-1ZM714 491.1h1v0.9h-1ZM714 494.0h1v2.0h-1ZM714 518.7h1v1.3h-1ZM715 466.0h1v7.5h-1ZM715 494.0h1v1.2h-1ZM716 466.0h1v1.9h-1ZM716 490.9h1v1.1h-1ZM716 518.4h1v1.6h-1ZM717 494.0h1v1.3h-1ZM718 466.0h1v3.0h-1ZM718 490.7h1v1.3h-1ZM718 494.0h1v1.7h-1ZM718 517.7h1v2.3h-1ZM719 466.0h1v0.8h-1ZM719 489.7h1v2.3h-1ZM719 494.0h1v7.5h-1ZM719 519.1h1v0.9h-1ZM720 489.7h1v2.3h-1ZM720 494.0h1v1.1h-1ZM720 513.0h1v7.0h-1ZM721 466.0h1v1.9h-1ZM721 489.2h1v2.8h-1ZM721 494.0h1v2.2h-1ZM722 466.0h1v2.2h-1ZM722 490.7h1v1.3h-1ZM722 494.0h1v2.9h-1ZM723 466.0h1v7.7h-1ZM723 490.2h1v1.8h-1ZM723 494.0h1v2.3h-1ZM723 517.2h1v2.8h-1ZM725 466.0h1v7.7h-1ZM725 488.2h1v3.8h-1ZM726 491.1h1v0.9h-1ZM726 494.0h1v0.9h-1ZM727 466.0h1v7.9h-1ZM727 489.3h1v2.7h-1ZM727 494.0h1v2.6h-1ZM727 517.9h1v2.1h-1ZM728 466.0h1v6.7h-1ZM728 518.2h1v1.8h-1ZM729 466.0h1v1.6h-1ZM729 491.4h1v0.6h-1ZM729 518.5h1v1.5h-1ZM730 494.0h1v2.4h-1ZM730 517.7h1v2.3h-1ZM731 489.9h1v2.1h-1ZM732 494.0h1v4.2h-1ZM732 519.4h1v0.6h-1ZM733 490.0h1v2.0h-1ZM733 494.0h1v2.5h-1ZM734 489.8h1v2.2h-1ZM734 494.0h1v1.8h-1ZM734 518.8h1v1.2h-1ZM735 466.0h1v3.0h-1ZM736 466.0h1v0.6h-1ZM736 519.3h1v0.7h-1ZM737 490.9h1v1.1h-1ZM738 466.0h1v1.2h-1ZM739 466.0h1v2.9h-1ZM739 490.6h1v1.4h-1ZM739 494.0h1v2.9h-1ZM739 517.3h1v2.7h-1ZM740 466.0h1v2.0h-1ZM740 494.0h1v2.4h-1ZM741 466.0h1v4.1h-1ZM742 466.0h1v2.9h-1ZM742 489.1h1v2.9h-1ZM742 513.2h1v6.8h-1ZM743 466.0h1v0.6h-1ZM743 494.0h1v2.5h-1ZM744 466.0h1v0.7h-1ZM744 491.1h1v0.9h-1ZM745 466.0h1v2.7h-1ZM746 466.0h1v2.7h-1ZM746 494.0h1v1.2h-1ZM746 519.3h1v0.7h-1ZM747 466.0h1v2.3h-1ZM748 466.0h1v2.3h-1ZM748 489.2h1v2.8h-1ZM748 494.0h1v7.7h-1ZM748 519.3h1v0.7h-1ZM749 466.0h1v6.1h-1ZM749 491.3h1v0.7h-1ZM749 517.4h1v2.6h-1ZM750 466.0h1v1.9h-1ZM750 490.4h1v1.6h-1ZM750 494.0h1v1.8h-1ZM751 466.0h1v1.7h-1ZM751 489.9h1v2.1h-1ZM751 517.0h1v3.0h-1ZM752 466.0h1v1.4h-1ZM752 490.9h1v1.1h-1ZM752 494.0h1v3.0h-1ZM752 514.4h1v5.6h-1ZM754 494.0h1v6.0h-1ZM754 518.6h1v1.4h-1ZM755 466.0h1v4.1h-1ZM755 490.3h1v1.7h-1ZM755 494.0h1v2.4h-1ZM755 519.2h1v0.8h-1ZM756 466.0h1v5.2h-1ZM756 491.1h1v0.9h-1ZM756 494.0h1v7.7h-1ZM756 518.9h1v1.1h-1ZM757 491.0h1v1.0h-1ZM758 466.0h1v2.8h-1ZM758 490.7h1v1.3h-1ZM758 512.7h1v7.3h-1ZM759 466.0h1v2.1h-1ZM759 490.7h1v1.3h-1ZM759 518.8h1v1.2h-1ZM760 494.0h1v2.3h-1ZM761 490.6h1v1.4h-1ZM761 519.1h1v0.9h-1ZM762 466.0h1v0.6h-1ZM762 517.3h1v2.7h-1ZM763 518.7h1v1.3h-1ZM764 517.0h1v3.0h-1ZM765 466.0h1v1.6h-1ZM765 494.0h1v2.8h-1ZM766 466.0h1v1.0h-1ZM768 517.2h1v2.8h-1ZM769 466.0h1v6.6h-1ZM769 485.4h1v6.6h-1ZM769 494.0h1v2.2h-1ZM770 494.0h1v7.8h-1ZM771 466.0h1v1.8h-1ZM771 491.3h1v0.7h-1ZM771 494.0h1v0.8h-1ZM771 517.5h1v2.5h-1ZM772 466.0h1v5.5h-1ZM772 494.0h1v0.9h-1ZM773 494.0h1v0.9h-1ZM774 466.0h1v3.0h-1ZM774 484.0h1v8.0h-1ZM774 494.0h1v2.5h-1ZM775 466.0h1v5.1h-1ZM775 494.0h1v1.0h-1ZM776 466.0h1v1.6h-1ZM776 491.5h1v0.5h-1ZM776 494.0h1v1.4h-1ZM777 490.8h1v1.2h-1ZM778 466.0h1v2.3h-1ZM778 490.1h1v1.9h-1ZM778 494.0h1v2.8h-1ZM780 487.6h1v4.4h-1ZM782 466.0h1v0.7h-1ZM783 490.3h1v1.7h-1ZM784 466.0h1v2.4h-1ZM784 494.0h1v1.9h-1ZM784 519.1h1v0.9h-1ZM785 466.0h1v2.4h-1ZM785 494.0h1v2.5h-1ZM785 518.3h1v1.7h-1ZM787 466.0h1v2.2h-1ZM787 494.0h1v1.4h-1ZM787 517.8h1v2.2h-1ZM788 494.0h1v2.5h-1ZM789 466.0h1v1.3h-1ZM789 490.6h1v1.4h-1ZM789 494.0h1v5.9h-1ZM790 466.0h1v0.7h-1ZM790 494.0h1v2.0h-1ZM790 518.6h1v1.4h-1ZM791 490.9h1v1.1h-1ZM791 494.0h1v5.9h-1ZM792 489.5h1v2.5h-1ZM792 494.0h1v2.7h-1ZM792 517.5h1v2.5h-1ZM793 489.3h1v2.7h-1ZM793 514.4h1v5.6h-1ZM794 490.6h1v1.4h-1ZM794 494.0h1v1.8h-1ZM794 518.5h1v1.5h-1ZM796 466.0h1v0.9h-1ZM796 494.0h1v3.0h-1ZM797 466.0h1v2.6h-1ZM797 490.3h1v1.7h-1ZM798 466.0h1v1.7h-1ZM798 490.6h1v1.4h-1ZM798 494.0h1v7.0h-1ZM798 519.4h1v0.6h-1ZM799 466.0h1v2.1h-1ZM799 486.5h1v5.5h-1ZM799 494.0h1v1.5h-1ZM800 491.4h1v0.6h-1ZM800 494.0h1v1.7h-1ZM800 518.6h1v1.4h-1ZM801 466.0h1v7.3h-1ZM801 485.3h1v6.7h-1ZM801 494.0h1v2.3h-1ZM802 487.9h1v4.1h-1ZM803 466.0h1v2.2h-1ZM803 494.0h1v2.8h-1ZM804 490.4h1v1.6h-1ZM804 494.0h1v2.3h-1ZM804 519.4h1v0.6h-1ZM805 466.0h1v2.3h-1ZM806 489.8h1v2.2h-1ZM806 518.4h1v1.6h-1ZM807 466.0h1v1.8h-1ZM807 494.0h1v3.0h-1ZM808 466.0h1v2.5h-1ZM808 491.0h1v1.0h-1ZM808 494.0h1v2.8h-1ZM809 494.0h1v2.9h-1ZM809 517.2h1v2.8h-1ZM810 494.0h1v2.0h-1ZM811 466.0h1v2.1h-1ZM811 491.1h1v0.9h-1ZM811 494.0h1v2.4h-1ZM811 517.4h1v2.6h-1ZM812 466.0h1v1.0h-1ZM812 517.8h1v2.2h-1ZM813 466.0h1v1.5h-1ZM813 491.2h1v0.8h-1ZM813 494.0h1v2.7h-1ZM813 517.4h1v2.6h-1ZM814 489.3h1v2.7h-1ZM814 517.6h1v2.4h-1ZM815 491.5h1v0.5h-1ZM816 466.0h1v1.5h-1ZM816 490.8h1v1.2h-1ZM816 494.0h1v2.5h-1ZM816 519.2h1v0.8h-1ZM817 494.0h1v0.6h-1ZM818 489.4h1v2.6h-1ZM818 494.0h1v3.8h-1ZM818 517.1h1v2.9h-1ZM819 466.0h1v2.3h-1ZM819 490.3h1v1.7h-1ZM819 494.0h1v0.9h-1ZM820 487.3h1v4.7h-1ZM820 518.4h1v1.6h-1ZM821 466.0h1v1.1h-1ZM821 518.0h1v2.0h-1ZM822 513.3h1v6.7h-1ZM823 494.0h1v6.6h-1ZM824 466.0h1v2.7h-1ZM824 518.1h1v1.9h-1ZM825 466.0h1v1.9h-1ZM826 466.0h1v4.1h-1ZM826 490.9h1v1.1h-1ZM826 494.0h1v0.7h-1ZM827 466.0h1v2.7h-1ZM827 489.3h1v2.7h-1ZM827 518.9h1v1.1h-1ZM828 466.0h1v2.0h-1ZM828 494.0h1v1.2h-1ZM828 517.6h1v2.4h-1ZM829 466.0h1v2.1h-1ZM830 466.0h1v1.0h-1ZM830 489.4h1v2.6h-1ZM830 518.7h1v1.3h-1ZM831 485.6h1v6.4h-1ZM831 494.0h1v1.7h-1ZM832 466.0h1v1.2h-1ZM832 490.9h1v1.1h-1ZM832 494.0h1v2.1h-1ZM832 518.1h1v1.9h-1ZM833 466.0h1v0.9h-1ZM833 489.0h1v3.0h-1ZM833 494.0h1v2.7h-1ZM834 466.0h1v6.0h-1ZM834 494.0h1v2.6h-1ZM834 517.6h1v2.4h-1ZM835 466.0h1v2.4h-1ZM835 494.0h1v2.0h-1ZM835 517.9h1v2.1h-1ZM836 466.0h1v2.8h-1ZM836 494.0h1v2.0h-1ZM836 519.5h1v0.5h-1ZM837 466.0h1v0.8h-1ZM838 466.0h1v2.3h-1ZM838 489.7h1v2.3h-1ZM838 518.8h1v1.2h-1ZM839 466.0h1v1.5h-1ZM839 489.0h1v3.0h-1ZM839 494.0h1v7.5h-1ZM839 518.9h1v1.1h-1ZM840 466.0h1v2.0h-1ZM840 494.0h1v2.1h-1ZM841 494.0h1v2.3h-1ZM841 517.7h1v2.3h-1ZM842 494.0h1v6.4h-1ZM842 518.6h1v1.4h-1ZM843 466.0h1v3.0h-1ZM843 491.2h1v0.8h-1ZM843 518.6h1v1.4h-1ZM844 466.0h1v0.9h-1ZM844 490.2h1v1.8h-1ZM844 494.0h1v1.3h-1ZM845 466.0h1v2.9h-1ZM845 489.8h1v2.2h-1ZM845 494.0h1v2.7h-1ZM845 518.3h1v1.7h-1ZM846 466.0h1v1.0h-1ZM846 490.4h1v1.6h-1ZM846 494.0h1v2.9h-1ZM847 466.0h1v2.1h-1ZM847 517.5h1v2.5h-1ZM848 494.0h1v1.2h-1ZM849 490.8h1v1.2h-1ZM849 518.7h1v1.3h-1ZM851 466.0h1v5.3h-1ZM851 494.0h1v2.2h-1ZM851 518.7h1v1.3h-1ZM852 494.0h1v2.7h-1ZM853 490.8h1v1.2h-1ZM853 518.9h1v1.1h-1ZM854 489.3h1v2.7h-1ZM854 516.3h1v3.7h-1ZM855 466.0h1v1.5h-1ZM855 490.0h1v2.0h-1ZM855 513.6h1v6.4h-1ZM856 494.0h1v1.7h-1ZM856 517.7h1v2.3h-1ZM857 466.0h1v2.9h-1ZM857 486.9h1v5.1h-1ZM857 517.9h1v2.1h-1ZM858 466.0h1v2.1h-1ZM858 490.8h1v1.2h-1ZM859 466.0h1v2.0h-1ZM859 489.1h1v2.9h-1ZM860 466.0h1v2.2h-1ZM860 512.5h1v7.5h-1ZM861 491.2h1v0.8h-1ZM861 516.1h1v3.9h-1ZM862 466.0h1v2.6h-1ZM862 518.5h1v1.5h-1ZM863 466.0h1v2.0h-1ZM863 488.3h1v3.7h-1ZM863 517.9h1v2.1h-1ZM864 466.0h1v4.1h-1ZM864 490.8h1v1.2h-1ZM864 517.5h1v2.5h-1ZM865 466.0h1v1.7h-1ZM865 491.1h1v0.9h-1ZM865 494.0h1v1.3h-1ZM865 517.9h1v2.1h-1ZM866 494.0h1v1.5h-1ZM866 518.5h1v1.5h-1ZM867 489.3h1v2.7h-1ZM867 494.0h1v1.4h-1ZM867 518.7h1v1.3h-1ZM868 494.0h1v2.2h-1ZM869 466.0h1v3.0h-1ZM869 494.0h1v2.9h-1ZM870 466.0h1v5.9h-1ZM870 519.3h1v0.7h-1ZM871 466.0h1v6.6h-1ZM871 490.4h1v1.6h-1ZM871 494.0h1v2.8h-1ZM872 466.0h1v2.8h-1ZM872 491.4h1v0.6h-1ZM872 494.0h1v1.9h-1ZM873 466.0h1v2.0h-1ZM873 494.0h1v1.2h-1ZM874 490.4h1v1.6h-1ZM875 466.0h1v0.7h-1ZM875 494.0h1v4.8h-1ZM875 519.2h1v0.8h-1ZM876 466.0h1v0.6h-1ZM876 489.6h1v2.4h-1ZM876 494.0h1v1.6h-1ZM876 517.3h1v2.7h-1ZM877 466.0h1v1.7h-1ZM877 489.2h1v2.8h-1ZM877 514.7h1v5.3h-1ZM878 489.0h1v3.0h-1ZM878 494.0h1v1.1h-1ZM878 517.1h1v2.9h-1ZM879 466.0h1v0.8h-1ZM879 494.0h1v1.3h-1ZM879 518.2h1v1.8h-1ZM880 489.8h1v2.2h-1ZM880 518.8h1v1.2h-1ZM882 466.0h1v0.7h-1ZM882 489.0h1v3.0h-1ZM882 494.0h1v1.3h-1ZM882 517.4h1v2.6h-1ZM883 466.0h1v0.8h-1ZM884 494.0h1v3.4h-1ZM884 517.7h1v2.3h-1ZM885 518.8h1v1.2h-1ZM886 494.0h1v2.6h-1ZM887 466.0h1v0.8h-1ZM887 486.5h1v5.5h-1ZM887 494.0h1v1.1h-1ZM887 518.2h1v1.8h-1ZM888 466.0h1v2.4h-1ZM888 486.2h1v5.8h-1ZM888 494.0h1v0.5h-1ZM888 518.8h1v1.2h-1ZM889 466.0h1v0.8h-1ZM889 489.7h1v2.3h-1ZM889 494.0h1v1.3h-1ZM889 517.9h1v2.1h-1ZM890 494.0h1v0.9h-1ZM890 519.4h1v0.6h-1ZM892 466.0h1v0.6h-1ZM892 489.5h1v2.5h-1ZM892 517.6h1v2.4h-1ZM893 517.2h1v2.8h-1ZM894 466.0h1v2.0h-1ZM894 488.5h1v3.5h-1ZM894 494.0h1v2.4h-1ZM894 516.0h1v4.0h-1ZM895 466.0h1v2.6h-1ZM895 490.3h1v1.7h-1ZM895 494.0h1v0.8h-1ZM896 466.0h1v1.9h-1ZM896 490.7h1v1.3h-1ZM896 494.0h1v0.6h-1ZM897 494.0h1v5.0h-1ZM897 518.7h1v1.3h-1ZM898 466.0h1v0.6h-1ZM899 466.0h1v3.6h-1ZM899 494.0h1v2.4h-1ZM899 519.2h1v0.8h-1ZM900 489.8h1v2.2h-1ZM901 466.0h1v2.6h-1ZM902 490.0h1v2.0h-1ZM902 517.4h1v2.6h-1ZM903 466.0h1v2.5h-1ZM903 494.0h1v1.8h-1ZM904 494.0h1v1.4h-1ZM904 514.5h1v5.5h-1ZM906 466.0h1v1.0h-1ZM906 489.3h1v2.7h-1ZM906 494.0h1v2.4h-1ZM906 518.8h1v1.2h-1ZM907 466.0h1v2.0h-1ZM907 518.5h1v1.5h-1ZM908 466.0h1v2.6h-1ZM908 491.3h1v0.7h-1ZM908 494.0h1v6.2h-1ZM908 515.9h1v4.1h-1ZM909 466.0h1v2.9h-1ZM909 494.0h1v6.0h-1ZM910 466.0h1v2.3h-1ZM911 466.0h1v0.8h-1ZM912 466.0h1v2.1h-1ZM912 519.5h1v0.5h-1ZM913 489.3h1v2.7h-1ZM913 494.0h1v2.1h-1ZM913 518.5h1v1.5h-1ZM914 489.1h1v2.9h-1ZM914 518.0h1v2.0h-1ZM915 466.0h1v1.6h-1ZM915 518.3h1v1.7h-1ZM916 466.0h1v2.4h-1ZM916 494.0h1v7.4h-1ZM917 490.6h1v1.4h-1ZM917 494.0h1v1.0h-1ZM918 490.9h1v1.1h-1ZM918 518.0h1v2.0h-1ZM920 494.0h1v7.7h-1ZM921 494.0h1v1.3h-1ZM923 466.0h1v2.4h-1ZM923 491.5h1v0.5h-1ZM924 489.9h1v2.1h-1ZM925 466.0h1v2.2h-1ZM925 491.4h1v0.6h-1ZM926 466.0h1v1.4h-1ZM926 490.0h1v2.0h-1ZM926 494.0h1v0.7h-1ZM927 466.0h1v5.1h-1ZM927 491.3h1v0.7h-1ZM927 494.0h1v1.4h-1ZM927 518.9h1v1.1h-1ZM928 490.8h1v1.2h-1ZM929 490.2h1v1.8h-1ZM929 494.0h1v6.9h-1ZM929 517.0h1v3.0h-1ZM931 519.4h1v0.6h-1ZM932 488.5h1v3.5h-1ZM932 494.0h1v0.9h-1ZM932 517.2h1v2.8h-1ZM933 491.1h1v0.9h-1ZM934 489.4h1v2.6h-1ZM934 494.0h1v1.9h-1ZM934 518.3h1v1.7h-1ZM935 466.0h1v3.2h-1ZM935 490.7h1v1.3h-1ZM935 519.3h1v0.7h-1ZM936 519.1h1v0.9h-1ZM937 491.1h1v0.9h-1ZM937 494.0h1v3.0h-1ZM937 519.1h1v0.9h-1ZM938 466.0h1v4.9h-1ZM938 490.0h1v2.0h-1ZM938 494.0h1v2.2h-1ZM938 512.1h1v7.9h-1ZM939 517.6h1v2.4h-1ZM941 484.6h1v7.4h-1ZM941 494.0h1v0.7h-1ZM941 518.4h1v1.6h-1ZM942 466.0h1v1.3h-1ZM942 489.2h1v2.8h-1ZM942 494.0h1v0.7h-1ZM942 517.9h1v2.1h-1ZM943 484.1h1v7.9h-1ZM943 494.0h1v0.7h-1ZM944 518.4h1v1.6h-1ZM945 489.4h1v2.6h-1ZM946 466.0h1v1.1h-1ZM947 494.0h1v2.2h-1ZM948 489.4h1v2.6h-1ZM948 494.0h1v1.8h-1ZM948 519.3h1v0.7h-1ZM949 466.0h1v6.9h-1ZM949 490.6h1v1.4h-1ZM950 466.0h1v0.6h-1ZM950 489.6h1v2.4h-1ZM950 494.0h1v0.7h-1ZM950 519.1h1v0.9h-1ZM951 466.0h1v1.9h-1ZM951 490.2h1v1.8h-1ZM951 494.0h1v2.1h-1ZM951 517.2h1v2.8h-1ZM952 494.0h1v0.7h-1ZM952 518.3h1v1.7h-1ZM953 466.0h1v2.6h-1ZM953 494.0h1v0.6h-1ZM953 512.7h1v7.3h-1ZM954 466.0h1v3.1h-1ZM954 491.1h1v0.9h-1ZM956 518.2h1v1.8h-1ZM957 490.2h1v1.8h-1ZM958 466.0h1v3.9h-1ZM959 518.4h1v1.6h-1ZM960 466.0h1v2.2h-1ZM960 494.0h1v1.1h-1ZM960 519.5h1v0.5h-1ZM961 466.0h1v1.9h-1ZM961 491.5h1v0.5h-1ZM961 518.9h1v1.1h-1ZM962 489.3h1v2.7h-1ZM963 466.0h1v7.5h-1ZM964 466.0h1v0.9h-1ZM964 494.0h1v1.2h-1ZM964 517.3h1v2.7h-1ZM965 466.0h1v2.5h-1ZM965 491.4h1v0.6h-1ZM967 494.0h1v6.4h-1ZM967 512.5h1v7.5h-1ZM968 466.0h1v0.9h-1ZM969 466.0h1v2.9h-1ZM969 494.0h1v2.1h-1ZM969 518.5h1v1.5h-1ZM970 494.0h1v2.1h-1ZM970 519.4h1v0.6h-1ZM972 466.0h1v2.2h-1ZM972 517.5h1v2.5h-1ZM973 489.7h1v2.3h-1ZM973 494.0h1v7.2h-1ZM973 519.4h1v0.6h-1ZM974 466.0h1v0.7h-1ZM974 490.3h1v1.7h-1ZM974 518.9h1v1.1h-1ZM975 490.0h1v2.0h-1ZM976 466.0h1v1.8h-1ZM976 494.0h1v1.5h-1ZM976 515.5h1v4.5h-1ZM977 466.0h1v1.3h-1ZM977 491.1h1v0.9h-1ZM977 494.0h1v1.7h-1ZM977 517.9h1v2.1h-1ZM978 466.0h1v1.8h-1ZM978 494.0h1v7.0h-1ZM979 466.0h1v2.0h-1ZM979 494.0h1v2.0h-1ZM979 512.4h1v7.6h-1ZM980 466.0h1v1.0h-1ZM980 516.4h1v3.6h-1ZM981 466.0h1v2.3h-1ZM981 490.9h1v1.1h-1ZM981 494.0h1v2.3h-1ZM981 518.7h1v1.3h-1ZM982 490.7h1v1.3h-1ZM983 466.0h1v2.2h-1ZM983 494.0h1v2.5h-1ZM984 494.0h1v2.3h-1ZM985 466.0h1v2.6h-1ZM985 494.0h1v2.9h-1ZM985 519.3h1v0.7h-1ZM986 490.7h1v1.3h-1ZM986 517.5h1v2.5h-1ZM987 489.7h1v2.3h-1ZM987 494.0h1v1.9h-1ZM988 489.3h1v2.7h-1ZM988 494.0h1v0.9h-1ZM988 519.4h1v0.6h-1ZM989 486.1h1v5.9h-1ZM989 494.0h1v4.7h-1ZM990 489.5h1v2.5h-1ZM990 494.0h1v1.4h-1ZM991 494.0h1v7.9h-1ZM992 466.0h1v0.8h-1ZM992 518.1h1v1.9h-1ZM993 491.0h1v1.0h-1ZM994 466.0h1v1.9h-1ZM995 466.0h1v0.9h-1ZM995 494.0h1v2.8h-1ZM995 517.3h1v2.7h-1ZM996 466.0h1v2.7h-1ZM996 494.0h1v2.0h-1ZM997 491.1h1v0.9h-1ZM997 518.2h1v1.8h-1ZM998 491.1h1v0.9h-1ZM998 519.5h1v0.5h-1ZM999 466.0h1v0.8h-1ZM999 490.2h1v1.8h-1ZM1000 466.0h1v2.2h-1ZM1000 489.9h1v2.1h-1ZM1000 517.4h1v2.6h-1ZM1001 466.0h1v2.2h-1ZM1001 494.0h1v4.5h-1ZM1001 518.1h1v1.9h-1ZM1002 466.0h1v0.8h-1ZM1002 489.6h1v2.4h-1ZM1003 466.0h1v2.8h-1ZM1003 490.4h1v1.6h-1ZM1003 494.0h1v5.6h-1ZM1003 517.3h1v2.7h-1ZM1004 494.0h1v5.5h-1ZM1005 466.0h1v2.5h-1ZM1005 517.3h1v2.7h-1ZM1006 494.0h1v3.1h-1ZM1007 466.0h1v1.6h-1ZM1007 494.0h1v2.6h-1ZM1008 466.0h1v2.1h-1ZM1008 494.0h1v0.7h-1ZM1009 466.0h1v1.8h-1ZM1009 517.2h1v2.8h-1ZM1010 491.0h1v1.0h-1ZM1011 466.0h1v1.8h-1ZM1011 490.9h1v1.1h-1ZM1011 494.0h1v6.1h-1ZM1012 487.8h1v4.2h-1ZM1012 494.0h1v0.7h-1ZM1012 518.2h1v1.8h-1ZM1013 466.0h1v5.4h-1ZM1013 516.0h1v4.0h-1ZM1014 466.0h1v4.8h-1ZM1014 489.2h1v2.8h-1ZM1015 515.9h1v4.1h-1ZM1016 494.0h1v2.5h-1ZM1017 491.0h1v1.0h-1ZM1017 494.0h1v1.4h-1ZM1017 518.4h1v1.6h-1ZM1018 494.0h1v1.0h-1ZM1018 519.1h1v0.9h-1ZM1019 466.0h1v2.6h-1ZM1020 494.0h1v3.0h-1ZM1021 466.0h1v2.5h-1ZM1021 488.0h1v4.0h-1ZM1022 466.0h1v4.2h-1ZM1022 494.0h1v2.1h-1ZM1023 489.5h1v2.5h-1ZM1024 466.0h1v2.7h-1ZM1024 494.0h1v2.4h-1ZM1024 518.1h1v1.9h-1ZM1025 466.0h1v2.6h-1ZM1025 516.6h1v3.4h-1ZM1026 489.1h1v2.9h-1ZM1026 518.5h1v1.5h-1ZM1027 466.0h1v3.0h-1ZM1027 490.9h1v1.1h-1ZM1028 466.0h1v1.8h-1ZM1028 494.0h1v1.3h-1ZM1028 512.4h1v7.6h-1ZM1029 466.0h1v1.4h-1ZM1029 490.8h1v1.2h-1ZM1029 494.0h1v2.5h-1ZM1029 514.1h1v5.9h-1ZM1031 466.0h1v3.4h-1ZM1031 485.2h1v6.8h-1ZM1031 494.0h1v6.3h-1ZM1031 518.7h1v1.3h-1ZM1032 490.9h1v1.1h-1ZM1032 517.4h1v2.6h-1Z" fill="#d6deef" fill-opacity="0.85"/></svg>
<div style="left:315px;top:492.5px;width:718px;height:1.5px;background:#e6ebf5;"></div>
<div style="left:315px;top:520px;width:718px;height:1.5px;background:#e6ebf5;"></div>
<div style="left:315px;top:521.5px;width:718px;height:1px;background:#222;"></div>
<div style="left:315px;top:522px;width:42px;height:34px;background:#403d3d;border-bottom:1px solid #2a2a2a;"></div>
<div style="left:357px;top:522px;width:676px;height:34px;background:#363434;"></div>
<div style="left:357px;top:534px;width:676px;height:7px;background:#c9c9a9;"></div>
<svg style="left:357px;top:534px" width="8" height="7"><path d="M0 0H7L0 7Z" fill="#f0e020"/></svg>
<div style="left:359px;top:542.0px;font-size:9px;line-height:12px;color:#b0b0b0;font-weight:400;white-space:pre;filter:grayscale(1);letter-spacing:-0.435px;">00:00:00</div>
<div style="left:358px;top:549px;width:1px;height:6px;background:#bbb;"></div>
<svg style="left:320.5px;top:541px" width="8" height="9" viewBox="0 0 8 9"><path d="M2 4V2.5A2 2 0 0 1 6 2.5V4" stroke="#eee" stroke-width="1.2" fill="none"/><rect x="0.5" y="4" width="7" height="5" fill="#eee"/></svg>
<svg style="left:337px;top:539.5px" width="14" height="12" viewBox="0 0 14 12"><circle cx="7" cy="6" r="6" fill="#1e3a50"/><rect x="1.5" y="3" width="4" height="6" fill="#4aa0d0"/><rect x="8.5" y="3" width="4" height="6" fill="#4aa0d0"/><path d="M5 1H9M7 1V11M5 11H9" stroke="#ddd" stroke-width="1"/></svg>
<div style="left:315px;top:555.5px;width:718px;height:1px;background:#2a2a2a;"></div>
<div style="left:315px;top:556px;width:17px;height:14.5px;background:#5d6fa5;border-radius:1px;"></div>
<div style="left:326px;top:557.5px;font-size:9.5px;line-height:12px;color:#f0f0f8;font-weight:400;white-space:pre;filter:grayscale(1);width:17px;margin-left:-8.5px;text-align:center;">L</div>
<div style="left:334px;top:556px;width:12.5px;height:12.5px;background:#5d6fa5;border-radius:1px;"></div>
<div style="left:337px;top:559px;width:7px;height:2px;background:#e8e8f0;"></div>
<div style="left:342px;top:575.5px;font-size:7.5px;line-height:10px;color:#c8c8c8;font-weight:400;white-space:pre;filter:grayscale(1);letter-spacing:1.141px;">-∞</div>
<div style="left:357px;top:556px;width:676px;height:46px;background:#44506e;"></div>
<div style="left:315px;top:602px;width:718px;height:1px;background:#2a2a2a;"></div>
<div style="left:315px;top:604px;width:17px;height:14.5px;background:#5d6fa5;border-radius:1px;"></div>
<div style="left:326px;top:605.5px;font-size:9.5px;line-height:12px;color:#f0f0f8;font-weight:400;white-space:pre;filter:grayscale(1);width:17px;margin-left:-8.5px;text-align:center;">R</div>
<div style="left:334px;top:604px;width:12.5px;height:12.5px;background:#5d6fa5;border-radius:1px;"></div>
<div style="left:337px;top:607px;width:7px;height:2px;background:#e8e8f0;"></div>
<div style="left:342px;top:623.0px;font-size:7.5px;line-height:10px;color:#c8c8c8;font-weight:400;white-space:pre;filter:grayscale(1);letter-spacing:1.141px;">-∞</div>
<div style="left:357px;top:603px;width:676px;height:47px;background:#44506e;"></div>
<div style="left:357px;top:579px;width:676px;height:1px;background:#c8d0e0;"></div>
<svg style="left:357px;top:578px" width="7" height="7"><path d="M0 0H6L0 6Z" fill="#f0e020"/></svg>
<div style="left:357px;top:627px;width:676px;height:1px;background:#c8d0e0;"></div>
<svg style="left:357px;top:626px" width="7" height="7"><path d="M0 0H6L0 6Z" fill="#f0e020"/></svg>
<div style="left:357px;top:646px;width:676px;height:3px;background:#3b475f;"></div>
<div style="left:315px;top:649px;width:718px;height:14px;background:#2a2a2a;border-top:1px solid #262626;"></div>
<div style="left:315px;top:650px;width:42px;height:13px;background:#393737;"></div>
<div style="left:361px;top:650px;width:153px;height:13px;background:#3f3d3d;"></div>
<div style="left:970px;top:650px;width:63px;height:13px;background:#393737;"></div>
<div style="left:317.5px;top:649.5px;font-size:11px;line-height:14px;color:#ddd;font-weight:700;white-space:pre;filter:grayscale(1);">+</div>
<div style="left:333px;top:656px;width:7px;height:1.6px;background:#ddd;"></div>
<svg style="left:348px;top:652px" width="5" height="8"><path d="M4.5 0V8L0 4Z" fill="#ddd"/></svg>
<div style="left:343px;top:650px;width:1px;height:13px;background:#262626;"></div>
<div style="left:357px;top:650px;width:1px;height:13px;background:#262626;"></div>
<div style="left:362px;top:652px;width:1px;height:9px;background:#555;"></div>
<div style="left:364px;top:652px;width:1px;height:9px;background:#555;"></div>
<div style="left:513px;top:652px;width:1.5px;height:9px;background:#555;"></div>
<svg style="left:975px;top:652px" width="5" height="8"><path d="M0.5 0V8L5 4Z" fill="#ddd"/></svg>
<div style="left:988.5px;top:649.5px;font-size:11px;line-height:14px;color:#ddd;font-weight:700;white-space:pre;filter:grayscale(1);">+</div>
<div style="left:1006px;top:656px;width:7px;height:1.6px;background:#ddd;"></div>
<svg style="left:1021px;top:652px" width="11" height="8"><path d="M4.5 0V8L0 4Z M6.5 0V8L11 4Z" fill="#ddd"/></svg>
<div style="left:315px;top:663px;width:718px;height:25px;background:#3a3838;border-top:1px solid #262626;"></div>
<svg style="left:320.5px;top:669px" width="15" height="15" viewBox="0 0 15 15"><circle cx="6.5" cy="6.5" r="5.5" fill="#777" stroke="#eee" stroke-width="1.2"/><circle cx="10.5" cy="10.5" r="3.3" fill="#eee"/><path d="M9.6 9V12M11.4 9V12" stroke="#333" stroke-width="0.9"/></svg>
<svg style="left:341px;top:669px" width="14" height="14" viewBox="0 0 14 14"><circle cx="7" cy="7" r="5.8" fill="#777" stroke="#eee" stroke-width="1.2"/></svg>
<svg style="left:363px;top:670.5px" width="11" height="11" viewBox="0 0 11 11"><rect x="0" y="0.5" width="2.2" height="10" fill="#eee"/><path d="M10.5 0.5V10.5L2.5 5.5Z" fill="#eee"/></svg>
<svg style="left:384px;top:670.5px" width="11" height="11" viewBox="0 0 11 11"><rect x="8.8" y="0.5" width="2.2" height="10" fill="#eee"/><path d="M0.5 0.5V10.5L8.5 5.5Z" fill="#eee"/></svg>
<div style="left:404px;top:670.5px;width:12px;height:12px;background:#eee;"></div>
<svg style="left:425px;top:670px" width="11" height="13"><path d="M0.5 0.5V12.5L10.5 6.5Z" fill="#eee"/></svg>
<svg style="left:444px;top:669px" width="15" height="15"><rect x="1" y="1" width="3.5" height="12" fill="#7a7a7a"/><path d="M5 13L4.5 10L11 1.5L13.5 3.5L7 12Z" fill="#9a9a9a"/></svg>
<svg style="left:464px;top:669px" width="16" height="15"><path d="M12.5 4A6 6 0 1 0 12.5 11L7.5 7.5Z" fill="#b0b0b0"/><circle cx="6.5" cy="5" r="1" fill="#3a3838"/><path d="M11.5 6.2A1.8 1.8 0 0 1 11.5 8.8M13.3 5A3.6 3.6 0 0 1 13.3 10" stroke="#999" stroke-width="0.9" fill="none"/></svg>
<div style="left:492px;top:667.5px;font-size:9.5px;line-height:12px;color:#dcdcdc;font-weight:400;white-space:pre;filter:grayscale(1);letter-spacing:0.251px;">Частота: 0,00</div>
<div style="left:578px;top:671.5px;width:105px;height:3px;background:#eee;"></div>
<div style="left:622px;top:668px;width:16px;height:11px;background:#f4f4f4;border:1px solid #888;"></div>
<div style="left:627px;top:670px;width:1px;height:7px;background:#333;"></div>
<div style="left:630px;top:670px;width:1px;height:7px;background:#333;"></div>
<div style="left:633px;top:670px;width:1px;height:7px;background:#333;"></div>
<svg style="left:634px;top:678px" width="9" height="6"><path d="M4.5 0.5L8.5 5.5H0.5Z" fill="#fff"/></svg>
<div style="left:773.3px;top:669px;width:61.5px;height:14.5px;background:#2b2b2b;"></div>
<div style="left:837.5px;top:669px;width:61.5px;height:14.5px;background:#2b2b2b;"></div>
<div style="left:902.4px;top:669px;width:61.5px;height:14.5px;background:#2b2b2b;"></div>
<div style="left:969.3px;top:669px;width:61.5px;height:14.5px;background:#2b2b2b;"></div>
<div style="left:775.5px;top:670.5px;font-size:9.5px;line-height:12px;color:#dcdcdc;font-weight:400;white-space:pre;filter:grayscale(1);letter-spacing:0.138px;">00:00:00,000</div>
<div style="left:840px;top:670.5px;font-size:9.5px;line-height:12px;color:#dcdcdc;font-weight:400;white-space:pre;filter:grayscale(1);letter-spacing:0.138px;">00:04:49,528</div>
<div style="left:904.5px;top:670.5px;font-size:9.5px;line-height:12px;color:#dcdcdc;font-weight:400;white-space:pre;filter:grayscale(1);letter-spacing:0.138px;">00:04:49,528</div>
<div style="left:1028px;top:670.5px;font-size:9.5px;line-height:12px;color:#dcdcdc;font-weight:400;white-space:pre;filter:grayscale(1);letter-spacing:0.049px;width:60px;margin-left:-60px;text-align:right;">1:4 096</div>
<div style="left:370px;top:204px;width:762px;height:26px;background:#ffffff;"></div>
<div style="left:370px;top:230px;width:762px;height:396px;background:#f9f9f9;"></div>
<div style="left:370px;top:626px;width:762px;height:20px;background:#3c3c3c;"></div>
<div style="left:378px;top:210.5px;font-size:10.5px;line-height:14px;color:#9a9a9a;font-weight:400;white-space:pre;filter:grayscale(1);letter-spacing:-0.225px;">Шумоподавление - Сергей Завьялов - В Белой Фате.m4a</div>
<div style="left:370px;top:230px;width:762px;height:396px;background:#f0f0f0;"></div>
<div style="left:375.5px;top:238.5px;font-size:9.5px;line-height:12px;color:#1a1a1a;font-weight:400;white-space:pre;filter:grayscale(1);letter-spacing:0.030px;-webkit-text-stroke:0.1px #1a1a1a;">Предустановленная настройка:</div>
<div style="left:527px;top:235px;width:430px;height:18px;background:#fff;border:1px solid #7a7a7a;"></div>
<div style="left:532.5px;top:238.5px;font-size:9.5px;line-height:12px;color:#1a1a1a;font-weight:400;white-space:pre;filter:grayscale(1);letter-spacing:-0.142px;-webkit-text-stroke:0.1px #1a1a1a;">(Без названия)</div>
<svg style="left:944px;top:242px" width="9" height="5"><path d="M0.5 0.5L4.5 4.5L8.5 0.5" stroke="#444" fill="none" stroke-width="1"/></svg>
<svg style="left:960px;top:237.5px" width="14" height="14" viewBox="0 0 14 14"><rect x="0.5" y="0.5" width="13" height="13" rx="1" fill="#3f6f9c" stroke="#2a4f75"/><rect x="4" y="1" width="6" height="4" fill="#e8eef4"/><rect x="3.5" y="8" width="7" height="5.5" fill="#e8eef4"/><rect x="5.5" y="9.5" width="2" height="4" fill="#2a3a4a"/></svg>
<svg style="left:981px;top:238px" width="13" height="13" viewBox="0 0 13 13"><path d="M2 2L11 11M11 2L2 11" stroke="#b4181e" stroke-width="2.8" stroke-linecap="round"/></svg>
<div style="left:1004px;top:236px;width:123px;height:18px;background:#e1e1e1;border:2px solid #2266a8;"></div>
<div style="left:1065.5px;top:239.0px;font-size:9.5px;line-height:12px;color:#111;font-weight:400;white-space:pre;filter:grayscale(1);letter-spacing:1.062px;width:123px;margin-left:-61.5px;text-align:center;">ОК</div>
<div style="left:1004px;top:261px;width:123px;height:18px;background:#e1e1e1;border:1px solid #adadad;"></div>
<div style="left:1065.5px;top:264.0px;font-size:9.5px;line-height:12px;color:#111;font-weight:400;white-space:pre;filter:grayscale(1);letter-spacing:-0.419px;width:123px;margin-left:-61.5px;text-align:center;">Отмена</div>
<div style="left:1004px;top:291px;width:123px;height:18px;background:#e1e1e1;border:1px solid #adadad;"></div>
<div style="left:1065.5px;top:294.0px;font-size:9.5px;line-height:12px;color:#111;font-weight:400;white-space:pre;filter:grayscale(1);letter-spacing:-0.131px;width:123px;margin-left:-61.5px;text-align:center;">Предпросмотр</div>
<div style="left:1003px;top:320px;width:12px;height:12px;background:#fff;border:1px solid #333;"></div>
<div style="left:1017px;top:319.5px;font-size:9.5px;line-height:12px;color:#1a1a1a;font-weight:400;white-space:pre;filter:grayscale(1);letter-spacing:0.161px;-webkit-text-stroke:0.1px #1a1a1a;">Отключение</div>
<div style="left:1003px;top:341px;width:12px;height:12px;background:#fff;border:1px solid #333;"></div>
<svg style="left:1005px;top:343px" width="9" height="8"><path d="M0.5 4L3.2 7L8.5 0.8" stroke="#222" fill="none" stroke-width="1.2"/></svg>
<div style="left:1017px;top:341.0px;font-size:9.5px;line-height:12px;color:#1a1a1a;font-weight:400;white-space:pre;filter:grayscale(1);letter-spacing:-0.128px;-webkit-text-stroke:0.1px #1a1a1a;">Реальное вр.</div>
<div style="left:1064px;top:573.0px;font-size:9.5px;line-height:12px;color:#1a1a1a;font-weight:400;white-space:pre;filter:grayscale(1);letter-spacing:0.009px;width:120px;margin-left:-60.0px;text-align:center;">Right-click for context</div>
<div style="left:1064px;top:584.6px;font-size:9.5px;line-height:12px;color:#1a1a1a;font-weight:400;white-space:pre;filter:grayscale(1);letter-spacing:0.219px;width:120px;margin-left:-60.0px;text-align:center;">menu...</div>
<div style="left:1004px;top:602px;width:123px;height:18px;background:#e1e1e1;border:1px solid #adadad;"></div>
<div style="left:1065.5px;top:605.0px;font-size:9.5px;line-height:12px;color:#111;font-weight:400;white-space:pre;filter:grayscale(1);letter-spacing:0.114px;width:123px;margin-left:-61.5px;text-align:center;">Дополнительно...</div>
<div style="left:376px;top:259px;width:621px;height:362px;background:#f0f0f0;border:1px solid #a8a8a8;"></div>
<div style="left:378px;top:262px;width:411px;height:19px;background:#969696;"></div>
<div style="left:381.6px;top:264.8px;font-size:10.5px;line-height:14px;color:#f2f2f2;font-weight:700;white-space:pre;filter:grayscale(1);letter-spacing:-0.382px;">Noise Reduction</div>
<div style="left:780px;top:266.0px;font-size:9px;line-height:12px;color:#cfcfcf;font-weight:700;white-space:pre;filter:grayscale(1);">?</div>
<div style="left:380px;top:285.6px;font-size:9.5px;line-height:12px;color:#1a1a1a;font-weight:400;white-space:pre;filter:grayscale(1);letter-spacing:-0.422px;-webkit-text-stroke:0.1px #1a1a1a;">Тип</div>
<div style="left:380px;top:296.8px;font-size:9.5px;line-height:12px;color:#1a1a1a;font-weight:400;white-space:pre;filter:grayscale(1);letter-spacing:-0.191px;-webkit-text-stroke:0.1px #1a1a1a;">уменьшения:</div>
<div style="left:439px;top:288px;width:55px;height:18px;background:#e5e5e5;border:1px solid #adadad;"></div>
<div style="left:442px;top:291.0px;font-size:9.5px;line-height:12px;color:#1a1a1a;font-weight:400;white-space:pre;filter:grayscale(1);letter-spacing:-0.633px;-webkit-text-stroke:0.1px #1a1a1a;">Режим С</div>
<svg style="left:481px;top:295.0px" width="9" height="5"><path d="M0.5 0.5L4.5 4.5L8.5 0.5" stroke="#444" fill="none" stroke-width="1"/></svg>
<div style="left:496.6px;top:290.0px;font-size:9.5px;line-height:12px;color:#1a1a1a;font-weight:400;white-space:pre;filter:grayscale(1);letter-spacing:-0.102px;-webkit-text-stroke:0.1px #1a1a1a;">Уменьшить шум до (дБ):</div>
<div style="left:611px;top:293px;width:124px;height:3px;background:#e6e6e6;border-top:1px solid #b8b8b8;"></div>
<div style="left:611px;top:293px;width:57px;height:3px;background:#7a7a7a;"></div>
<div style="left:668px;top:287px;width:10px;height:15px;background:linear-gradient(180deg,#fdfdfd,#e6e6e6 50%,#c9c9c9);border:1px solid #6f6f6f;border-radius:2px;"></div>
<div style="left:742px;top:286px;width:46px;height:17px;background:#fff;border:1px solid #7a7a7a;"></div>
<div style="left:748px;top:288.5px;font-size:9.5px;line-height:12px;color:#1a1a1a;font-weight:400;white-space:pre;filter:grayscale(1);-webkit-text-stroke:0.1px #1a1a1a;">12,0</div>
<div style="left:385px;top:310.5px;font-size:9.5px;line-height:12px;color:#1a1a1a;font-weight:400;white-space:pre;filter:grayscale(1);letter-spacing:-0.120px;-webkit-text-stroke:0.1px #1a1a1a;">Смещение шума (от -20 до 20 дБ):</div>
<div style="left:611px;top:314px;width:124px;height:3px;background:#e6e6e6;border-top:1px solid #b8b8b8;"></div>
<div style="left:611px;top:314px;width:57px;height:3px;background:#7a7a7a;"></div>
<div style="left:668px;top:308px;width:10px;height:15px;background:linear-gradient(180deg,#fdfdfd,#e6e6e6 50%,#c9c9c9);border:1px solid #6f6f6f;border-radius:2px;"></div>
<div style="left:742px;top:308px;width:46px;height:17px;background:#fff;border:1px solid #7a7a7a;"></div>
<div style="left:747px;top:310.5px;font-size:9.5px;line-height:12px;color:#1a1a1a;font-weight:400;white-space:pre;filter:grayscale(1);-webkit-text-stroke:0.1px #1a1a1a;">0,0</div>
<div style="left:387px;top:333.0px;font-size:9.5px;line-height:12px;color:#1a1a1a;font-weight:400;white-space:pre;filter:grayscale(1);letter-spacing:0.086px;-webkit-text-stroke:0.1px #1a1a1a;">Скорость атаки(1 до 100):</div>
<div style="left:555.7px;top:333.0px;font-size:9.5px;line-height:12px;color:#1a1a1a;font-weight:400;white-space:pre;filter:grayscale(1);letter-spacing:-0.236px;-webkit-text-stroke:0.1px #1a1a1a;">Медленно</div>
<div style="left:609px;top:337px;width:83px;height:3px;background:#e6e6e6;border-top:1px solid #b8b8b8;"></div>
<div style="left:609px;top:337px;width:69px;height:3px;background:#7a7a7a;"></div>
<div style="left:678px;top:331px;width:10px;height:15px;background:linear-gradient(180deg,#fdfdfd,#e6e6e6 50%,#c9c9c9);border:1px solid #6f6f6f;border-radius:2px;"></div>
<div style="left:706.7px;top:332.5px;font-size:9.5px;line-height:12px;color:#1a1a1a;font-weight:400;white-space:pre;filter:grayscale(1);letter-spacing:-0.207px;-webkit-text-stroke:0.1px #1a1a1a;">Быстро</div>
<div style="left:742px;top:330px;width:46px;height:17px;background:#fff;border:1px solid #7a7a7a;"></div>
<div style="left:747px;top:332.5px;font-size:9.5px;line-height:12px;color:#1a1a1a;font-weight:400;white-space:pre;filter:grayscale(1);-webkit-text-stroke:0.1px #1a1a1a;">90</div>
<div style="left:387px;top:355.0px;font-size:9.5px;line-height:12px;color:#1a1a1a;font-weight:400;white-space:pre;filter:grayscale(1);letter-spacing:0.069px;-webkit-text-stroke:0.1px #1a1a1a;">Скорость затухания  (1 до 100):</div>
<div style="left:556px;top:355.0px;font-size:9.5px;line-height:12px;color:#1a1a1a;font-weight:400;white-space:pre;filter:grayscale(1);letter-spacing:-0.236px;-webkit-text-stroke:0.1px #1a1a1a;">Медленно</div>
<div style="left:609px;top:359px;width:83px;height:3px;background:#e6e6e6;border-top:1px solid #b8b8b8;"></div>
<div style="left:609px;top:359px;width:36px;height:3px;background:#7a7a7a;"></div>
<div style="left:645px;top:353px;width:10px;height:15px;background:linear-gradient(180deg,#fdfdfd,#e6e6e6 50%,#c9c9c9);border:1px solid #6f6f6f;border-radius:2px;"></div>
<div style="left:706.7px;top:355.0px;font-size:9.5px;line-height:12px;color:#1a1a1a;font-weight:400;white-space:pre;filter:grayscale(1);letter-spacing:-0.207px;-webkit-text-stroke:0.1px #1a1a1a;">Быстро</div>
<div style="left:742px;top:352px;width:46px;height:17px;background:#fff;border:1px solid #7a7a7a;"></div>
<div style="left:747px;top:354.5px;font-size:9.5px;line-height:12px;color:#1a1a1a;font-weight:400;white-space:pre;filter:grayscale(1);-webkit-text-stroke:0.1px #1a1a1a;">50</div>
<div style="left:388px;top:371.2px;font-size:9.5px;line-height:12px;color:#1a1a1a;font-weight:400;white-space:pre;filter:grayscale(1);letter-spacing:-0.132px;-webkit-text-stroke:0.1px #1a1a1a;">Оконное представление размера БПФ</div>
<div style="left:388px;top:382.0px;font-size:9.5px;line-height:12px;color:#1a1a1a;font-weight:400;white-space:pre;filter:grayscale(1);letter-spacing:0.053px;-webkit-text-stroke:0.1px #1a1a1a;">(от 128 до 16 384):</div>
<div style="left:604px;top:375px;width:65px;height:18px;background:#e5e5e5;border:1px solid #adadad;"></div>
<div style="left:608.4px;top:378.0px;font-size:9.5px;line-height:12px;color:#1a1a1a;font-weight:400;white-space:pre;filter:grayscale(1);-webkit-text-stroke:0.1px #1a1a1a;">1 024</div>
<svg style="left:656px;top:382.0px" width="9" height="5"><path d="M0.5 0.5L4.5 4.5L8.5 0.5" stroke="#444" fill="none" stroke-width="1"/></svg>
<div style="left:388px;top:396.0px;font-size:9.5px;line-height:12px;color:#1a1a1a;font-weight:400;white-space:pre;filter:grayscale(1);letter-spacing:-0.026px;-webkit-text-stroke:0.1px #1a1a1a;">Оконное представление размера перекрытия</div>
<div style="left:388px;top:407.4px;font-size:9.5px;line-height:12px;color:#1a1a1a;font-weight:400;white-space:pre;filter:grayscale(1);letter-spacing:0.109px;-webkit-text-stroke:0.1px #1a1a1a;">(от 67 до 90 %):</div>
<div style="left:604px;top:403px;width:129px;height:3px;background:#e6e6e6;border-top:1px solid #b8b8b8;"></div>
<div style="left:604px;top:397px;width:10px;height:15px;background:linear-gradient(180deg,#fdfdfd,#e6e6e6 50%,#c9c9c9);border:1px solid #6f6f6f;border-radius:2px;"></div>
<div style="left:739px;top:397px;width:45px;height:17px;background:#fff;border:1px solid #7a7a7a;"></div>
<div style="left:743.3px;top:399.5px;font-size:9.5px;line-height:12px;color:#1a1a1a;font-weight:400;white-space:pre;filter:grayscale(1);-webkit-text-stroke:0.1px #1a1a1a;">67</div>
<div style="left:384px;top:432px;width:12px;height:12px;background:#fff;border:1px solid #333;"></div>
<div style="left:398px;top:432.0px;font-size:9.5px;line-height:12px;color:#1a1a1a;font-weight:400;white-space:pre;filter:grayscale(1);letter-spacing:-0.040px;-webkit-text-stroke:0.1px #1a1a1a;">Стартовая частота ВЧ шельфа (от 500 д</div>
<div style="left:609px;top:434px;width:124px;height:3px;background:#e6e6e6;border-top:1px solid #b8b8b8;"></div>
<div style="left:609px;top:434px;width:56px;height:3px;background:#8a8a8a;"></div>
<div style="left:739px;top:427px;width:45px;height:17px;background:#f0f0f0;border:1px solid #cccccc;"></div>
<div style="left:744px;top:429.5px;font-size:9.5px;line-height:12px;color:#9a9a9a;font-weight:400;white-space:pre;filter:grayscale(1);">7 000</div>
<div style="left:389px;top:453.7px;font-size:9.5px;line-height:12px;color:#a0a0a0;font-weight:400;white-space:pre;filter:grayscale(1);letter-spacing:-0.092px;">Усиление ВЧ шельфа (от -20 до 20 дБ):</div>
<div style="left:609px;top:456.6px;width:124px;height:3px;background:#e6e6e6;border-top:1px solid #b8b8b8;"></div>
<div style="left:609px;top:456.6px;width:71px;height:3px;background:#8a8a8a;"></div>
<div style="left:739px;top:450px;width:45px;height:17px;background:#f0f0f0;border:1px solid #cccccc;"></div>
<div style="left:744px;top:452.5px;font-size:9.5px;line-height:12px;color:#9a9a9a;font-weight:400;white-space:pre;filter:grayscale(1);">3</div>
<div style="left:384px;top:511px;width:12px;height:12px;background:#fff;border:1px solid #333;"></div>
<div style="left:397.5px;top:511.0px;font-size:9.5px;line-height:12px;color:#1a1a1a;font-weight:400;white-space:pre;filter:grayscale(1);letter-spacing:0.145px;-webkit-text-stroke:0.1px #1a1a1a;">Поддерживать остаточный выход</div>
<div style="left:384px;top:527px;width:399px;height:1px;background:#a0a0a0;"></div>
<div style="left:384px;top:528px;width:399px;height:1px;background:#fff;"></div>
<div style="left:384px;top:538px;width:12px;height:12px;background:#fff;border:1px solid #333;"></div>
<div style="left:397.5px;top:537.7px;font-size:9.5px;line-height:12px;color:#1a1a1a;font-weight:400;white-space:pre;filter:grayscale(1);letter-spacing:0.122px;-webkit-text-stroke:0.1px #1a1a1a;">Захватить образец ш</div>
<div style="left:496px;top:538px;width:12px;height:12px;background:#fff;border:1px solid #333;"></div>
<div style="left:508.4px;top:537.7px;font-size:9.5px;line-height:12px;color:#1a1a1a;font-weight:400;white-space:pre;filter:grayscale(1);letter-spacing:0.100px;-webkit-text-stroke:0.1px #1a1a1a;">Таймаут автоматического захвата (от 0,005 д</div>
<div style="left:729px;top:535px;width:46px;height:17px;background:#fff;border:1px solid #7a7a7a;"></div>
<div style="left:734.5px;top:537.5px;font-size:9.5px;line-height:12px;color:#1a1a1a;font-weight:400;white-space:pre;filter:grayscale(1);-webkit-text-stroke:0.1px #1a1a1a;">1,000</div>
<div style="left:776px;top:535px;width:9px;height:17px;background:#f0f0f0;"></div>
<svg style="left:777px;top:537px" width="7" height="13"><path d="M3.5 0.5L6.5 4.5H0.5Z M3.5 12.5L6.5 8.5H0.5Z" fill="#222"/></svg>
<div style="left:377px;top:604px;width:620px;height:17px;background:#a3a3a3;"></div>
<svg style="left:377px;top:604px" width="180" height="17"><path d="M0 0 L6 15 L52 15 L58 1 L0 1Z" fill="#ffffff"/><path d="M52 15 L58 0 L172 0 L166 15 Z" fill="#ececec" stroke="#9a9a9a" stroke-width="0.6"/></svg>
<div style="left:377px;top:619px;width:620px;height:2px;background:#a3a3a3;"></div>
<div style="left:389px;top:606.0px;font-size:9.5px;line-height:12px;color:#111;font-weight:700;white-space:pre;filter:grayscale(1);letter-spacing:0.023px;-webkit-text-stroke:0.1px #111;">Общие</div>
<div style="left:443px;top:606.0px;font-size:9.5px;line-height:12px;color:#1a1a1a;font-weight:400;white-space:pre;filter:grayscale(1);letter-spacing:0.150px;-webkit-text-stroke:0.1px #1a1a1a;">Шумовой отпечаток</div>
<div style="left:370px;top:621px;width:762px;height:5px;background:#fafafa;"></div>
<div style="left:376px;top:630.0px;font-size:9.5px;line-height:12px;color:#dcdcdc;font-weight:400;white-space:pre;filter:grayscale(1);letter-spacing:-0.505px;">ПРОЦЕССОР %</div>
<div style="left:932px;top:631.0px;font-size:9.5px;line-height:12px;color:#dcdcdc;font-weight:400;white-space:pre;filter:grayscale(1);letter-spacing:0.138px;">00:00:00,000</div>
<div style="left:1000px;top:631.0px;font-size:9.5px;line-height:12px;color:#dcdcdc;font-weight:400;white-space:pre;filter:grayscale(1);letter-spacing:0.138px;">00:04:49,528</div>
<div style="left:1068px;top:631.0px;font-size:9.5px;line-height:12px;color:#dcdcdc;font-weight:400;white-space:pre;filter:grayscale(1);letter-spacing:0.138px;">00:04:49,528</div>
<div style="left:1073px;top:208.0px;font-size:12px;line-height:16px;color:#777;font-weight:400;white-space:pre;filter:grayscale(1);letter-spacing:-0.688px;">?</div>
<svg style="left:1108px;top:212px" width="9" height="9"><path d="M0.3 0.3L8.7 8.7M8.7 0.3L0.3 8.7" stroke="#555" stroke-width="1"/></svg>
<div style="left:10px;top:100.0px;width:200px;height:17px;background:#383838;"></div>
<svg style="left:0;top:0" width="1" height="1"><circle cx="21.5" cy="108.5" r="6.5" fill="#f2d21f" stroke="#1e1a00" stroke-width="1"/><path d="M20.0 105.5L23.0 108.5L20.0 111.5" stroke="#2a2200" stroke-width="1.8" fill="none"/></svg>
<div style="left:58px;top:102.5px;font-size:9.5px;line-height:12px;color:#e0e0e0;font-weight:400;white-space:pre;filter:grayscale(1);letter-spacing:-0.260px;">Рабочее пространство</div>
<svg style="left:34px;top:102.5px" width="12" height="12" viewBox="0 0 12 12"><rect x="0.5" y="0.5" width="11" height="11" rx="1" fill="#2b2b2b" stroke="#e8e8e8" stroke-width="1"/><path d="M6 3V9M3 7H9" stroke="#e8e070" stroke-width="1.3"/></svg>
<div style="left:10px;top:126.0px;width:200px;height:17px;background:#383838;"></div>
<svg style="left:0;top:0" width="1" height="1"><circle cx="21.5" cy="134.5" r="6.5" fill="#f2d21f" stroke="#1e1a00" stroke-width="1"/><path d="M18.5 133.0L21.5 136.0L24.5 133.0" stroke="#2a2200" stroke-width="1.8" fill="none"/></svg>
<div style="left:58px;top:128.5px;font-size:9.5px;line-height:12px;color:#e0e0e0;font-weight:400;white-space:pre;filter:grayscale(1);letter-spacing:-0.444px;">Импорт</div>
<svg style="left:34px;top:128.5px" width="12" height="12" viewBox="0 0 12 12"><rect x="0.5" y="0.5" width="11" height="11" rx="1" fill="#2b2b2b" stroke="#e8e8e8" stroke-width="1"/><path d="M2 2L8 8M8 4V8H4" stroke="#e8e070" stroke-width="1.3" fill="none"/></svg>
<div style="left:10px;top:281.0px;width:200px;height:17px;background:#383838;"></div>
<svg style="left:0;top:0" width="1" height="1"><circle cx="21.5" cy="289.5" r="6.5" fill="#f2d21f" stroke="#1e1a00" stroke-width="1"/><path d="M20.0 286.5L23.0 289.5L20.0 292.5" stroke="#2a2200" stroke-width="1.8" fill="none"/></svg>
<div style="left:58px;top:283.5px;font-size:9.5px;line-height:12px;color:#e0e0e0;font-weight:400;white-space:pre;filter:grayscale(1);letter-spacing:-0.401px;">Очистка</div>
<svg style="left:34px;top:283.5px" width="12" height="12" viewBox="0 0 12 12"><rect x="0.5" y="0.5" width="11" height="11" rx="1" fill="#2b2b2b" stroke="#e8e8e8" stroke-width="1"/><path d="M3 3L9 9M9 3L3 9" stroke="#e8e070" stroke-width="1.2"/></svg>
<div style="left:10px;top:306.8px;width:200px;height:17px;background:#383838;"></div>
<svg style="left:0;top:0" width="1" height="1"><circle cx="21.5" cy="315.3" r="6.5" fill="#f2d21f" stroke="#1e1a00" stroke-width="1"/><path d="M20.0 312.3L23.0 315.3L20.0 318.3" stroke="#2a2200" stroke-width="1.8" fill="none"/></svg>
<div style="left:58px;top:309.3px;font-size:9.5px;line-height:12px;color:#e0e0e0;font-weight:400;white-space:pre;filter:grayscale(1);letter-spacing:-0.531px;">Эффекты</div>
<svg style="left:34px;top:309.3px" width="12" height="12" viewBox="0 0 12 12"><rect x="0.5" y="0.5" width="11" height="11" rx="1" fill="#2b2b2b" stroke="#e8e8e8" stroke-width="1"/><path d="M6 2.5V9.5M2.8 4.2L9.2 7.8M9.2 4.2L2.8 7.8" stroke="#e8e070" stroke-width="1.1"/></svg>
<div style="left:10px;top:332.6px;width:200px;height:17px;background:#383838;"></div>
<svg style="left:0;top:0" width="1" height="1"><circle cx="21.5" cy="341.1" r="6.5" fill="#f2d21f" stroke="#1e1a00" stroke-width="1"/><path d="M20.0 338.1L23.0 341.1L20.0 344.1" stroke="#2a2200" stroke-width="1.8" fill="none"/></svg>
<div style="left:58px;top:335.1px;font-size:9.5px;line-height:12px;color:#e0e0e0;font-weight:400;white-space:pre;filter:grayscale(1);letter-spacing:-0.183px;">Редактирование</div>
<svg style="left:34px;top:335.1px" width="12" height="12" viewBox="0 0 12 12"><rect x="0.5" y="0.5" width="11" height="11" rx="1" fill="#2b2b2b" stroke="#e8e8e8" stroke-width="1"/><path d="M3 9L9 3" stroke="#e8e070" stroke-width="1.5"/></svg>
<div style="left:10px;top:358.4px;width:200px;height:17px;background:#383838;"></div>
<svg style="left:0;top:0" width="1" height="1"><circle cx="21.5" cy="366.9" r="6.5" fill="#f2d21f" stroke="#1e1a00" stroke-width="1"/><path d="M20.0 363.9L23.0 366.9L20.0 369.9" stroke="#2a2200" stroke-width="1.8" fill="none"/></svg>
<div style="left:58px;top:360.9px;font-size:9.5px;line-height:12px;color:#e0e0e0;font-weight:400;white-space:pre;filter:grayscale(1);letter-spacing:-0.361px;">Мастеринг</div>
<svg style="left:34px;top:360.9px" width="12" height="12" viewBox="0 0 12 12"><rect x="0.5" y="0.5" width="11" height="11" rx="1" fill="#2b2b2b" stroke="#e8e8e8" stroke-width="1"/><path d="M2.5 6L5 8.5L9.5 3.5" stroke="#e8e070" stroke-width="1.4" fill="none"/></svg>
<div style="left:10px;top:384.2px;width:200px;height:17px;background:#383838;"></div>
<svg style="left:0;top:0" width="1" height="1"><circle cx="21.5" cy="392.7" r="6.5" fill="#f2d21f" stroke="#1e1a00" stroke-width="1"/><path d="M20.0 389.7L23.0 392.7L20.0 395.7" stroke="#2a2200" stroke-width="1.8" fill="none"/></svg>
<div style="left:58px;top:386.7px;font-size:9.5px;line-height:12px;color:#e0e0e0;font-weight:400;white-space:pre;filter:grayscale(1);letter-spacing:-0.297px;">User Entries</div>
<svg style="left:34px;top:386.7px" width="12" height="12" viewBox="0 0 12 12"><rect x="0.5" y="0.5" width="11" height="11" rx="1" fill="#2b2b2b" stroke="#e8e8e8" stroke-width="1"/><circle cx="6" cy="4.5" r="1.8" fill="#e8e070"/><path d="M2.5 9.5Q6 5.5 9.5 9.5Z" fill="#e8e070"/></svg>
<div style="left:10px;top:410.0px;width:200px;height:17px;background:#383838;"></div>
<svg style="left:0;top:0" width="1" height="1"><circle cx="21.5" cy="418.5" r="6.5" fill="#f2d21f" stroke="#1e1a00" stroke-width="1"/><path d="M20.0 415.5L23.0 418.5L20.0 421.5" stroke="#2a2200" stroke-width="1.8" fill="none"/></svg>
<div style="left:58px;top:412.5px;font-size:9.5px;line-height:12px;color:#e0e0e0;font-weight:400;white-space:pre;filter:grayscale(1);letter-spacing:-0.284px;">Экспорт</div>
<svg style="left:34px;top:412.5px" width="12" height="12" viewBox="0 0 12 12"><rect x="0.5" y="0.5" width="11" height="11" rx="1" fill="#2b2b2b" stroke="#e8e8e8" stroke-width="1"/><path d="M4 8L10 2M6 2H10V6" stroke="#e8e070" stroke-width="1.2" fill="none"/></svg>
<div style="left:17px;top:150px;width:55px;height:55px;background:#383838;"></div>
<div style="left:86.5px;top:150px;width:55px;height:55px;background:#383838;"></div>
<div style="left:155.5px;top:150px;width:55px;height:55px;background:#383838;"></div>
<div style="left:210px;top:150px;width:1px;height:55px;background:#7a7a7a;"></div>
<div style="left:17px;top:219px;width:55px;height:55px;background:#383838;"></div>
<div style="left:86.5px;top:219px;width:55px;height:55px;background:#383838;"></div>
<svg style="left:36px;top:156px" width="18" height="25" viewBox="0 0 18 25"><path d="M0 0H12L18 6V25H0Z" fill="#ececec"/><path d="M12 0V6H18" fill="#bdbdbd"/></svg>
<div style="left:44.5px;top:186.5px;font-size:8.5px;line-height:11px;color:#e6e6e6;font-weight:400;white-space:pre;filter:grayscale(1);letter-spacing:-0.578px;width:60px;margin-left:-30.0px;text-align:center;">Новинка</div>
<svg style="left:101px;top:157px" width="26" height="23" viewBox="0 0 26 23"><rect x="0" y="0" width="10" height="4" fill="#f2cc10"/><rect x="0" y="5" width="26" height="18" fill="#f2cc10"/></svg>
<div style="left:114px;top:186.5px;font-size:8.5px;line-height:11px;color:#e6e6e6;font-weight:400;white-space:pre;filter:grayscale(1);letter-spacing:-0.398px;width:60px;margin-left:-30.0px;text-align:center;">Открыть</div>
<svg style="left:170px;top:157px" width="26" height="24" viewBox="0 0 26 24"><rect x="0" y="0" width="10" height="4" fill="#f2cc10"/><rect x="0" y="5" width="26" height="17" fill="#f2cc10"/><circle cx="12.5" cy="17" r="6" fill="#2aa8e0" stroke="#222" stroke-width="1.2"/><path d="M12.5 14V17H15" stroke="#222" stroke-width="1" fill="none"/></svg>
<div style="left:182.5px;top:182.0px;font-size:7.5px;line-height:10px;color:#e6e6e6;font-weight:400;white-space:pre;filter:grayscale(1);letter-spacing:-0.353px;width:60px;margin-left:-30.0px;text-align:center;">Недавние</div>
<div style="left:182.5px;top:192.5px;font-size:7.5px;line-height:10px;color:#e6e6e6;font-weight:400;white-space:pre;filter:grayscale(1);letter-spacing:-0.509px;width:60px;margin-left:-30.0px;text-align:center;">файлы...</div>
<svg style="left:32px;top:224px" width="26" height="26" viewBox="0 0 26 26"><circle cx="12.6" cy="12.7" r="12" fill="#f4f4f4"/><circle cx="12.6" cy="12.7" r="9" fill="#e01010"/></svg>
<div style="left:44.5px;top:254.89999999999998px;font-size:8.5px;line-height:11px;color:#e6e6e6;font-weight:400;white-space:pre;filter:grayscale(1);letter-spacing:-0.378px;width:60px;margin-left:-30.0px;text-align:center;">Запись</div>
<svg style="left:101px;top:224px" width="28" height="30" viewBox="0 0 28 30"><circle cx="13" cy="12.7" r="12" fill="#e8e8e8"/><circle cx="13" cy="12.7" r="3" fill="#555"/><path d="M16 10V17H12.5L18.5 25L24.5 17H21V10Z" fill="#e04060" stroke="#333" stroke-width="0.8"/></svg>
<div style="left:114px;top:251.3px;font-size:7.5px;line-height:10px;color:#e6e6e6;font-weight:400;white-space:pre;filter:grayscale(1);letter-spacing:-0.128px;width:70px;margin-left:-35.0px;text-align:center;">Извлечь</div>
<div style="left:114px;top:260.5px;font-size:7.5px;line-height:10px;color:#e6e6e6;font-weight:400;white-space:pre;filter:grayscale(1);letter-spacing:-0.296px;width:70px;margin-left:-35.0px;text-align:center;">аудио с диска...</div>
<div style="left:8px;top:48px;width:1.5px;height:18px;background:#262626;"></div>
<div style="left:10.5px;top:48px;width:1.5px;height:18px;background:#262626;"></div>
<div style="left:8px;top:73px;width:1.5px;height:18px;background:#262626;"></div>
<div style="left:10.5px;top:73px;width:1.5px;height:18px;background:#262626;"></div>
<div style="left:37.5px;top:48px;width:1px;height:18px;background:#2a2a2a;"></div>
<div style="left:130.4px;top:48px;width:1px;height:18px;background:#2a2a2a;"></div>
<div style="left:266.2px;top:48px;width:1px;height:18px;background:#2a2a2a;"></div>
<div style="left:338.2px;top:48px;width:1px;height:18px;background:#2a2a2a;"></div>
<div style="left:452.7px;top:48px;width:1px;height:18px;background:#2a2a2a;"></div>
<div style="left:58.8px;top:73px;width:1px;height:18px;background:#2a2a2a;"></div>
<div style="left:87.2px;top:73px;width:1px;height:18px;background:#2a2a2a;"></div>
<svg style="left:16.5px;top:51px" width="10" height="13" viewBox="0 0 10 13"><path d="M0 0H7L10 3V13H0Z" fill="#f0f0f0" stroke="#111" stroke-width="0.4"/><path d="M7 0V3H10" fill="#333"/></svg>
<svg style="left:43.5px;top:51.5px" width="13" height="11" viewBox="0 0 13 11"><rect x="0" y="0" width="5" height="2" fill="#f2cc10"/><rect x="0" y="2.5" width="13" height="8.5" fill="#f2cc10" stroke="#1a1500" stroke-width="0.4"/></svg>
<svg style="left:65px;top:50.5px" width="13" height="13" viewBox="0 0 13 13"><rect x="0" y="0" width="13" height="13" fill="#9a9a9a"/><rect x="3" y="0.5" width="7" height="4.5" fill="#d8d8d8"/><rect x="3" y="8" width="7" height="5" fill="#d8d8d8"/><rect x="5.5" y="9" width="2" height="4" fill="#9a9a9a"/></svg>
<svg style="left:86.5px;top:50.5px" width="13" height="13" viewBox="0 0 13 13"><rect x="0" y="0" width="13" height="13" fill="#9a9a9a"/><rect x="3" y="0.5" width="7" height="4.5" fill="#d8d8d8"/><rect x="3" y="8" width="7" height="5" fill="#d8d8d8"/><rect x="5.5" y="9" width="2" height="4" fill="#9a9a9a"/><path d="M5 1.5H8M5 3.5H8" stroke="#777" stroke-width="0.8"/></svg>
<svg style="left:108px;top:50.5px" width="13" height="13" viewBox="0 0 13 13"><rect x="0" y="0" width="13" height="13" fill="#9a9a9a"/><rect x="3" y="0.5" width="7" height="4.5" fill="#d8d8d8"/><rect x="3" y="8" width="7" height="5" fill="#d8d8d8"/><rect x="5.5" y="9" width="2" height="4" fill="#9a9a9a"/></svg>
<svg style="left:136.5px;top:50px" width="13" height="13" viewBox="0 0 13 13"><circle cx="3" cy="4" r="2.2" stroke="#aaa" stroke-width="1.5" fill="none"/><circle cx="5" cy="10.5" r="2.2" stroke="#aaa" stroke-width="1.5" fill="none"/><path d="M4.5 5.5L12.5 2M6.5 9L11 1" stroke="#aaa" stroke-width="1.4"/></svg>
<svg style="left:158px;top:50px" width="13" height="14" viewBox="0 0 13 14"><rect x="0.5" y="0.5" width="6" height="9" fill="#4aa0e0" stroke="#1a3a5a" stroke-width="0.8"/><path d="M4.5 4H10L12.5 6.5V13.5H4.5Z" fill="#f0f0f0" stroke="#111" stroke-width="0.6"/></svg>
<svg style="left:179.7px;top:50px" width="13" height="14" viewBox="0 0 13 14"><rect x="0.5" y="1" width="7" height="11" fill="#6a6a6a"/><rect x="2" y="0" width="4" height="2" fill="#7a7a7a"/><path d="M5 5H10L12.5 7.5V13.5H5Z" fill="#c8c8c8"/></svg>
<svg style="left:201px;top:50px" width="13" height="14" viewBox="0 0 13 14"><rect x="0.5" y="1" width="7" height="11" fill="#6a6a6a"/><rect x="2" y="0" width="4" height="2" fill="#7a7a7a"/><path d="M5 5H10L12.5 7.5V13.5H5Z" fill="#c8c8c8"/><rect x="3" y="9" width="3" height="4" fill="#888"/></svg>
<svg style="left:222.9px;top:50px" width="13" height="14" viewBox="0 0 13 14"><rect x="0.5" y="1" width="7" height="11" fill="#6a6a6a"/><rect x="2" y="0" width="4" height="2" fill="#7a7a7a"/><circle cx="9" cy="9.5" r="3.8" fill="#6a6a6a" stroke="#888" stroke-width="1"/><path d="M8 7.5V11.5L11 9.5Z" fill="#aaa"/></svg>
<svg style="left:244.2px;top:50px" width="13" height="13" viewBox="0 0 13 13"><path d="M3 0V10H13M0 3H10V13" stroke="#aaa" stroke-width="1.8" fill="none"/></svg>
<svg style="left:272.8px;top:50.5px" width="13" height="12" viewBox="0 0 13 12"><path d="M3.5 5.2H7.5A3.6 3.6 0 0 1 7.5 11.2H6" stroke="#c8c8c8" stroke-width="2.2" fill="none"/><path d="M0 5.2L4.6 1V9.4Z" fill="#c8c8c8"/></svg>
<svg style="left:294.6px;top:50.5px" width="13" height="12" viewBox="0 0 13 12"><path d="M9.5 5.2H5.5A3.6 3.6 0 0 0 5.5 11.2H7" stroke="#c8c8c8" stroke-width="2.2" fill="none"/><path d="M13 5.2L8.4 1V9.4Z" fill="#c8c8c8"/></svg>
<svg style="left:317px;top:50px" width="12" height="13" viewBox="0 0 12 13"><path d="M2.6 4.2A4.8 4.8 0 1 0 6.5 2.2" stroke="#c8c8c8" stroke-width="2.1" fill="none"/><path d="M0.5 1L6.8 0.2L3.2 6.2Z" fill="#c8c8c8"/></svg>
<div style="left:340.8px;top:46.8px;width:21.3px;height:19.3px;background:#b3cbe9;"></div>
<svg style="left:345px;top:50px" width="13" height="13" viewBox="0 0 13 13"><rect x="0.5" y="3.5" width="5" height="6" fill="#0c4e8c" stroke="#0a2a4a" stroke-width="0.6"/><rect x="7.5" y="3.5" width="5" height="6" fill="#0c4e8c" stroke="#0a2a4a" stroke-width="0.6"/><path d="M4.5 0.5H8.5M6.5 0.5V12.5M4.5 12.5H8.5" stroke="#333" stroke-width="0.9"/></svg>
<svg style="left:365.7px;top:50.5px" width="13" height="13" viewBox="0 0 13 13"><rect x="0.5" y="0.5" width="9" height="9" stroke="#ddd" stroke-width="1" stroke-dasharray="2 1.5" fill="none"/><circle cx="7" cy="7" r="3" fill="#3a6a8a" stroke="#ddd" stroke-width="1.2"/><path d="M9 9L12.5 12.5" stroke="#ddd" stroke-width="1.6"/></svg>
<svg style="left:387.2px;top:50px" width="13" height="13" viewBox="0 0 13 13"><rect x="0" y="8" width="13" height="5" fill="#9a9a9a"/><path d="M6 7L10 1.5L12.5 3.5L8.5 9Z" fill="#c8c8c8"/></svg>
<svg style="left:409px;top:50.5px" width="13" height="14" viewBox="0 0 13 14"><rect x="0.5" y="0.5" width="9" height="9" stroke="#aaa" stroke-width="1" stroke-dasharray="2 1.2" fill="none"/><path d="M6 4.5L13 9L9.5 9.5L8 13.5Z" fill="#ddd"/></svg>
<svg style="left:431.3px;top:50.5px" width="12" height="13" viewBox="0 0 12 13"><path d="M0.5 1L5 10L6 6L10 6Z" fill="#c8c8c8"/><circle cx="7" cy="2" r="1.8" fill="#ddd"/><circle cx="10" cy="7" r="1.8" fill="#ddd"/><circle cx="8" cy="11.5" r="1.8" fill="#ddd"/></svg>
<svg style="left:458.8px;top:49px" width="15" height="15" viewBox="0 0 15 15"><circle cx="9" cy="6" r="5.5" fill="#e6d030" stroke="#444" stroke-width="0.8"/><text x="9" y="9.5" font-size="8.5" font-weight="700" text-anchor="middle" fill="#333" font-family="Liberation Sans">?</text><path d="M1 7L6 10L6.5 14.5H2.5L0.5 10Z" fill="#f4f4f4"/></svg>
<svg style="left:14.7px;top:75.1px" width="14" height="14" viewBox="0 0 14 14"><circle cx="6.5" cy="6.5" r="5.5" fill="#7a7a7a" stroke="#c8c8c8" stroke-width="1.3"/><circle cx="10.5" cy="10.5" r="3.2" fill="#ddd"/><path d="M9.6 9V12M11.4 9V12" stroke="#444" stroke-width="0.9"/></svg>
<svg style="left:36.5px;top:75.1px" width="14" height="14" viewBox="0 0 14 14"><circle cx="6.5" cy="6.5" r="5.5" fill="#7a7a7a" stroke="#c8c8c8" stroke-width="1.3"/></svg>
<svg style="left:65px;top:75.5px" width="12" height="12" viewBox="0 0 12 12"><path d="M9 2A5 5 0 1 1 2.5 4" stroke="#eee" stroke-width="1.8" fill="none"/><path d="M0 1.5L5.5 3L1.5 7.5Z" fill="#eee"/></svg>
<svg style="left:95.3px;top:76.5px" width="10" height="11" viewBox="0 0 10 11"><rect x="0" y="0.5" width="1.6" height="10" fill="#e8e8e8"/><path d="M3 0.5V10.5L10 5.5Z" fill="#e8e8e8"/></svg>
<svg style="left:116.7px;top:76.5px" width="10" height="11" viewBox="0 0 10 11"><path d="M0.5 0V11L9.5 5.5Z" fill="#ececec"/></svg>
<div style="left:137.6px;top:76.5px;width:3.2px;height:10.5px;background:#f0f0f0;"></div>
<div style="left:145.6px;top:76.5px;width:3.2px;height:10.5px;background:#f0f0f0;"></div>
<div style="left:159px;top:76.5px;width:11px;height:10.6px;background:#e8e8e8;"></div>
<svg style="left:181.8px;top:76.5px" width="10" height="11" viewBox="0 0 10 11"><rect x="0" y="0.5" width="2" height="10" fill="#e8e8e8"/><path d="M9.5 0.5V10.5L2.5 5.5Z" fill="#e8e8e8"/></svg>
<svg style="left:201.6px;top:76.5px" width="13" height="11" viewBox="0 0 13 11"><rect x="0" y="0.5" width="1.8" height="10" fill="#bbb"/><path d="M7.5 0.5V10.5L1.8 5.5Z M13 0.5V10.5L7.3 5.5Z" fill="#bbb"/></svg>
<svg style="left:222.9px;top:76.5px" width="12" height="11" viewBox="0 0 12 11"><path d="M6 0.5V10.5L0 5.5Z M12 0.5V10.5L6 5.5Z" fill="#e8e8e8"/></svg>
<svg style="left:244.7px;top:76.5px" width="12" height="11" viewBox="0 0 12 11"><path d="M0 0.5V10.5L6 5.5Z M6 0.5V10.5L12 5.5Z" fill="#e8e8e8"/></svg>
<svg style="left:265.7px;top:76.5px" width="13" height="11" viewBox="0 0 13 11"><path d="M0 0.5V10.5L5.7 5.5Z M5.5 0.5V10.5L11.2 5.5Z" fill="#bbb"/><rect x="11.2" y="0.5" width="1.8" height="10" fill="#bbb"/></svg>
<svg style="left:289px;top:76.5px" width="10" height="11" viewBox="0 0 10 11"><path d="M0.5 0.5V10.5L7.5 5.5Z" fill="#e8e8e8"/><rect x="7.5" y="0.5" width="2" height="10" fill="#e8e8e8"/></svg>
<svg style="left:308.8px;top:75.5px" width="14" height="13" viewBox="0 0 14 13"><rect x="0.5" y="0.5" width="12" height="12" fill="#2a2a2a" stroke="#ddd" stroke-width="1"/><path d="M2 2L8 8M8 4.5V8H4.5" stroke="#e0c020" stroke-width="1.3" fill="none"/><rect x="7.5" y="7.5" width="6" height="5" fill="#e03a20"/></svg>
<svg style="left:0;top:0" width="1" height="1"><rect x="1182" y="158.5" width="1" height="106" fill="#8e4444"/><rect x="1182" y="264.5" width="1" height="115" fill="#b8a878"/><rect x="1182" y="379.5" width="1" height="335" fill="#6a9a6a"/><rect x="1259" y="158.5" width="1" height="106" fill="#8e4444"/><rect x="1259" y="264.5" width="1" height="115" fill="#b8a878"/><rect x="1259" y="379.5" width="1" height="335" fill="#6a9a6a"/><defs><linearGradient id="gl" x1="0" x2="1"><stop offset="0" stop-color="#c8c8c8"/><stop offset="0.65" stop-color="#b4b4b4" stop-opacity="0.85"/><stop offset="1" stop-color="#c0c0c0" stop-opacity="0"/></linearGradient><linearGradient id="gr" x1="1" x2="0"><stop offset="0" stop-color="#c8c8c8"/><stop offset="0.65" stop-color="#b4b4b4" stop-opacity="0.85"/><stop offset="1" stop-color="#c0c0c0" stop-opacity="0"/></linearGradient></defs><rect x="1182" y="158.1" width="30" height="1" fill="url(#gl)"/><rect x="1230" y="158.1" width="30" height="1" fill="url(#gr)"/><rect x="1182" y="264.1" width="30" height="1" fill="url(#gl)"/><rect x="1230" y="264.1" width="30" height="1" fill="url(#gr)"/><rect x="1182" y="378.5" width="30" height="1" fill="url(#gl)"/><rect x="1230" y="378.5" width="30" height="1" fill="url(#gr)"/><rect x="1182" y="488.8" width="30" height="1" fill="url(#gl)"/><rect x="1230" y="488.8" width="30" height="1" fill="url(#gr)"/><rect x="1182" y="585.9" width="30" height="1" fill="url(#gl)"/><rect x="1230" y="585.9" width="30" height="1" fill="url(#gr)"/><rect x="1182" y="655.0" width="30" height="1" fill="url(#gl)"/><rect x="1230" y="655.0" width="30" height="1" fill="url(#gr)"/><rect x="1182" y="692.5" width="30" height="1" fill="url(#gl)"/><rect x="1230" y="692.5" width="30" height="1" fill="url(#gr)"/><rect x="1182" y="205.9" width="16" height="1" fill="url(#gl)"/><rect x="1244" y="205.9" width="16" height="1" fill="url(#gr)"/><rect x="1182" y="321.5" width="16" height="1" fill="url(#gl)"/><rect x="1244" y="321.5" width="16" height="1" fill="url(#gr)"/><rect x="1182" y="434.5" width="16" height="1" fill="url(#gl)"/><rect x="1244" y="434.5" width="16" height="1" fill="url(#gr)"/><rect x="1182" y="539.9" width="16" height="1" fill="url(#gl)"/><rect x="1244" y="539.9" width="16" height="1" fill="url(#gr)"/><rect x="1182" y="624.0" width="16" height="1" fill="url(#gl)"/><rect x="1244" y="624.0" width="16" height="1" fill="url(#gr)"/><rect x="1182" y="170.4" width="9" height="1" fill="url(#gl)" opacity="0.75"/><rect x="1251" y="170.4" width="9" height="1" fill="url(#gr)" opacity="0.75"/><rect x="1182" y="182.5" width="9" height="1" fill="url(#gl)" opacity="0.75"/><rect x="1251" y="182.5" width="9" height="1" fill="url(#gr)" opacity="0.75"/><rect x="1182" y="193.8" width="9" height="1" fill="url(#gl)" opacity="0.75"/><rect x="1251" y="193.8" width="9" height="1" fill="url(#gr)" opacity="0.75"/><rect x="1182" y="217.0" width="9" height="1" fill="url(#gl)" opacity="0.75"/><rect x="1251" y="217.0" width="9" height="1" fill="url(#gr)" opacity="0.75"/><rect x="1182" y="228.6" width="9" height="1" fill="url(#gl)" opacity="0.75"/><rect x="1251" y="228.6" width="9" height="1" fill="url(#gr)" opacity="0.75"/><rect x="1182" y="240.9" width="9" height="1" fill="url(#gl)" opacity="0.75"/><rect x="1251" y="240.9" width="9" height="1" fill="url(#gr)" opacity="0.75"/><rect x="1182" y="252.2" width="9" height="1" fill="url(#gl)" opacity="0.75"/><rect x="1251" y="252.2" width="9" height="1" fill="url(#gr)" opacity="0.75"/><rect x="1182" y="275.4" width="9" height="1" fill="url(#gl)" opacity="0.75"/><rect x="1251" y="275.4" width="9" height="1" fill="url(#gr)" opacity="0.75"/><rect x="1182" y="287.4" width="9" height="1" fill="url(#gl)" opacity="0.75"/><rect x="1251" y="287.4" width="9" height="1" fill="url(#gr)" opacity="0.75"/><rect x="1182" y="298.9" width="9" height="1" fill="url(#gl)" opacity="0.75"/><rect x="1251" y="298.9" width="9" height="1" fill="url(#gr)" opacity="0.75"/><rect x="1182" y="309.5" width="9" height="1" fill="url(#gl)" opacity="0.75"/><rect x="1251" y="309.5" width="9" height="1" fill="url(#gr)" opacity="0.75"/><rect x="1182" y="332.9" width="9" height="1" fill="url(#gl)" opacity="0.75"/><rect x="1251" y="332.9" width="9" height="1" fill="url(#gr)" opacity="0.75"/><rect x="1182" y="344.5" width="9" height="1" fill="url(#gl)" opacity="0.75"/><rect x="1251" y="344.5" width="9" height="1" fill="url(#gr)" opacity="0.75"/><rect x="1182" y="356.5" width="9" height="1" fill="url(#gl)" opacity="0.75"/><rect x="1251" y="356.5" width="9" height="1" fill="url(#gr)" opacity="0.75"/><rect x="1182" y="367.8" width="9" height="1" fill="url(#gl)" opacity="0.75"/><rect x="1251" y="367.8" width="9" height="1" fill="url(#gr)" opacity="0.75"/><rect x="1182" y="390.0" width="9" height="1" fill="url(#gl)" opacity="0.75"/><rect x="1251" y="390.0" width="9" height="1" fill="url(#gr)" opacity="0.75"/><rect x="1182" y="401.5" width="9" height="1" fill="url(#gl)" opacity="0.75"/><rect x="1251" y="401.5" width="9" height="1" fill="url(#gr)" opacity="0.75"/><rect x="1182" y="412.8" width="9" height="1" fill="url(#gl)" opacity="0.75"/><rect x="1251" y="412.8" width="9" height="1" fill="url(#gr)" opacity="0.75"/><rect x="1182" y="423.5" width="9" height="1" fill="url(#gl)" opacity="0.75"/><rect x="1251" y="423.5" width="9" height="1" fill="url(#gr)" opacity="0.75"/><rect x="1182" y="446.3" width="9" height="1" fill="url(#gl)" opacity="0.75"/><rect x="1251" y="446.3" width="9" height="1" fill="url(#gr)" opacity="0.75"/><rect x="1182" y="457.1" width="9" height="1" fill="url(#gl)" opacity="0.75"/><rect x="1251" y="457.1" width="9" height="1" fill="url(#gr)" opacity="0.75"/><rect x="1182" y="467.8" width="9" height="1" fill="url(#gl)" opacity="0.75"/><rect x="1251" y="467.8" width="9" height="1" fill="url(#gr)" opacity="0.75"/><rect x="1182" y="478.5" width="9" height="1" fill="url(#gl)" opacity="0.75"/><rect x="1251" y="478.5" width="9" height="1" fill="url(#gr)" opacity="0.75"/><rect x="1182" y="709.5" width="78" height="1" fill="#c8c8c8"/><rect x="1182" y="714.5" width="78" height="1" fill="#c8c8c8"/></svg>
<div style="left:1220.5px;top:153.6px;font-size:8.5px;line-height:11px;color:#d8d8d8;font-weight:400;white-space:pre;filter:grayscale(1);width:30px;margin-left:-15.0px;text-align:center;text-shadow:0 0 2px #000,0 0 3px #000;">9</div>
<div style="left:1220.5px;top:259.6px;font-size:8.5px;line-height:11px;color:#d8d8d8;font-weight:400;white-space:pre;filter:grayscale(1);width:30px;margin-left:-15.0px;text-align:center;text-shadow:0 0 2px #000,0 0 3px #000;">0</div>
<div style="left:1220.5px;top:374.0px;font-size:8.5px;line-height:11px;color:#d8d8d8;font-weight:400;white-space:pre;filter:grayscale(1);width:30px;margin-left:-15.0px;text-align:center;text-shadow:0 0 2px #000,0 0 3px #000;">-10</div>
<div style="left:1220.5px;top:484.3px;font-size:8.5px;line-height:11px;color:#d8d8d8;font-weight:400;white-space:pre;filter:grayscale(1);width:30px;margin-left:-15.0px;text-align:center;text-shadow:0 0 2px #000,0 0 3px #000;">-20</div>
<div style="left:1220.5px;top:581.4px;font-size:8.5px;line-height:11px;color:#d8d8d8;font-weight:400;white-space:pre;filter:grayscale(1);width:30px;margin-left:-15.0px;text-align:center;text-shadow:0 0 2px #000,0 0 3px #000;">-30</div>
<div style="left:1220.5px;top:650.5px;font-size:8.5px;line-height:11px;color:#d8d8d8;font-weight:400;white-space:pre;filter:grayscale(1);width:30px;margin-left:-15.0px;text-align:center;text-shadow:0 0 2px #000,0 0 3px #000;">-40</div>
<div style="left:1220.5px;top:688.0px;font-size:8.5px;line-height:11px;color:#d8d8d8;font-weight:400;white-space:pre;filter:grayscale(1);width:30px;margin-left:-15.0px;text-align:center;text-shadow:0 0 2px #000,0 0 3px #000;">-50</div>
<div style="left:1220.5px;top:201.4px;font-size:8.5px;line-height:11px;color:#d8d8d8;font-weight:400;white-space:pre;filter:grayscale(1);width:30px;margin-left:-15.0px;text-align:center;text-shadow:0 0 2px #000,0 0 3px #000;">5</div>
<div style="left:1220.5px;top:317.0px;font-size:8.5px;line-height:11px;color:#d8d8d8;font-weight:400;white-space:pre;filter:grayscale(1);width:30px;margin-left:-15.0px;text-align:center;text-shadow:0 0 2px #000,0 0 3px #000;">-5</div>
<div style="left:1220.5px;top:430.0px;font-size:8.5px;line-height:11px;color:#d8d8d8;font-weight:400;white-space:pre;filter:grayscale(1);width:30px;margin-left:-15.0px;text-align:center;text-shadow:0 0 2px #000,0 0 3px #000;">-15</div>
<div style="left:1220.5px;top:535.4px;font-size:8.5px;line-height:11px;color:#d8d8d8;font-weight:400;white-space:pre;filter:grayscale(1);width:30px;margin-left:-15.0px;text-align:center;text-shadow:0 0 2px #000,0 0 3px #000;">-25</div>
<div style="left:1220.5px;top:619.5px;font-size:8.5px;line-height:11px;color:#d8d8d8;font-weight:400;white-space:pre;filter:grayscale(1);width:30px;margin-left:-15.0px;text-align:center;text-shadow:0 0 2px #000,0 0 3px #000;">-35</div>
<div style="left:1220.5px;top:709.0px;font-size:8.5px;line-height:11px;color:#d8d8d8;font-weight:400;white-space:pre;filter:grayscale(1);width:30px;margin-left:-15.0px;text-align:center;text-shadow:0 0 2px #000,0 0 3px #000;">-70</div>
<div style="left:1213px;top:711px;width:16px;height:7px;background:#000;"></div>
<div style="left:1220.5px;top:709.0px;font-size:8.5px;line-height:11px;color:#d8d8d8;font-weight:400;white-space:pre;filter:grayscale(1);width:30px;margin-left:-15.0px;text-align:center;">-70</div>
<div style="left:1197px;top:717.8px;font-size:8px;line-height:10px;color:#cfcfcf;font-weight:400;white-space:pre;filter:grayscale(1);width:10px;margin-left:-5.0px;text-align:center;">L</div>
<div style="left:1244.5px;top:717.8px;font-size:8px;line-height:10px;color:#cfcfcf;font-weight:400;white-space:pre;filter:grayscale(1);width:10px;margin-left:-5.0px;text-align:center;">R</div>
<div style="left:982px;top:757px;width:56px;height:19px;background:#3d3d3d;"></div>
<div style="left:1040px;top:757px;width:41px;height:19px;background:#3d3d3d;"></div>
<div style="left:1083px;top:757px;width:43px;height:19px;background:#3d3d3d;"></div>
<div style="left:1128px;top:757px;width:68px;height:19px;background:#3d3d3d;"></div>
<div style="left:1200px;top:757px;width:72px;height:19px;background:#3d3d3d;"></div>
<div style="left:1034px;top:761.0px;font-size:9.5px;line-height:12px;color:#d0d0d0;font-weight:400;white-space:pre;filter:grayscale(1);letter-spacing:-0.227px;width:60px;margin-left:-60px;text-align:right;">44 100 Hz</div>
<div style="left:1046px;top:761.0px;font-size:9.5px;line-height:12px;color:#d0d0d0;font-weight:400;white-space:pre;filter:grayscale(1);letter-spacing:-0.263px;">16 бит</div>
<div style="left:1088px;top:761.0px;font-size:9.5px;line-height:12px;color:#d0d0d0;font-weight:400;white-space:pre;filter:grayscale(1);letter-spacing:-0.050px;">Стерео</div>
<div style="left:1136px;top:761.0px;font-size:9.5px;line-height:12px;color:#d0d0d0;font-weight:400;white-space:pre;filter:grayscale(1);letter-spacing:0.138px;">00:04:49,528</div>
<div style="left:1215px;top:761.0px;font-size:9.5px;line-height:12px;color:#d0d0d0;font-weight:400;white-space:pre;filter:grayscale(1);letter-spacing:-0.198px;">76 977,7 Мб</div></body></html>
